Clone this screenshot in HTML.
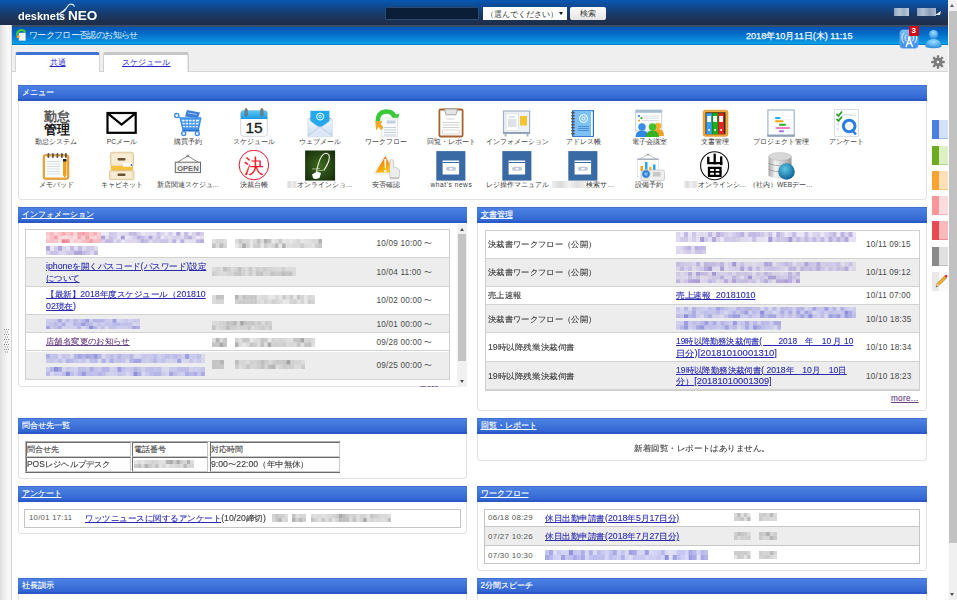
<!DOCTYPE html>
<html><head><meta charset="utf-8">
<style>
*{box-sizing:border-box;margin:0;padding:0}
html,body{width:957px;height:600px;overflow:hidden;background:#fff;font-family:"Liberation Sans",sans-serif;}
.abs{position:absolute}
#hdr{left:0;top:0;width:948px;height:25px;background:linear-gradient(#0658b2 0px,#0d4d98 5px,#173c6e 13px,#1e3152 21px,#1d2d48 25px)}
#title{left:12px;top:25px;width:936px;height:20px;background:linear-gradient(#3a4e6a 0px,#34506f 2px,#0452b2 2px,#056cc8 9px,#0a93e0 17px,#0aa2ea 18.5px,#0577bd 19px,#0577bd 20px)}
#strip{left:0;top:25px;width:12px;height:575px;background:linear-gradient(90deg,#dedede 0px,#f0f0f0 5px,#fafafa 9px,#f6f6f6 10.5px,#d6d6d6 11px,#d6d6d6 12px)}
#tabbar{left:12px;top:45px;width:936px;height:27px;background:#efefef;border-top:1px solid #fafafa}
#tabline{left:12px;top:71px;width:936px;height:1px;background:#d6d6d6}
#content{left:12px;top:72px;width:936px;height:528px;background:#fff}
#sb{left:948px;top:0;width:9px;height:600px;background:#f0f0f0;border-left:1px solid #fafafa}
#sbthumb{left:949px;top:11px;width:8px;height:532px;background:#c2c2c2}
.panel{position:absolute;border:1px solid #e2e2e2;border-top:none;border-radius:0 0 4px 4px;background:#fff}
.ph{position:absolute;left:-1px;right:-1px;top:0;height:16px;background:linear-gradient(#3e66c4 0px,#4a80e2 1.5px,#4278dc 6px,#3264d0 14px,#1d4fc2 15px,#3a64c8 16px);color:#fff;font-size:8.2px;line-height:16px;padding-left:3.5px;white-space:nowrap;-webkit-text-stroke:0.15px #fff}
.ph u{text-decoration:underline}
.lbl{position:absolute;width:80px;text-align:center;font-size:6.6px;line-height:9px;color:#3a3a3a;white-space:nowrap}
.bl{display:inline-block;width:12px;height:7px;background:linear-gradient(90deg,#eeeeee,#dadada,#f2f2f2,#e0e0e0,#f0f0f0);vertical-align:-1px;filter:blur(0.6px)}
.t{white-space:nowrap;line-height:11px;-webkit-text-stroke:0.12px}
.tn{white-space:nowrap;line-height:11px}
</style></head><body>
<div id="hdr" class="abs"></div>
<div id="title" class="abs"></div>
<div id="strip" class="abs"></div>
<svg class="abs" style="left:4px;top:329px" width="6" height="26"><rect x="0" y="0.0" width="1" height="1" fill="#8a8a8a"/><rect x="2" y="0.0" width="1" height="1" fill="#8a8a8a"/><rect x="4" y="0.0" width="1" height="1" fill="#8a8a8a"/><rect x="1" y="2.5" width="1" height="1" fill="#8a8a8a"/><rect x="3" y="2.5" width="1" height="1" fill="#8a8a8a"/><rect x="0" y="5.0" width="1" height="1" fill="#8a8a8a"/><rect x="2" y="5.0" width="1" height="1" fill="#8a8a8a"/><rect x="4" y="5.0" width="1" height="1" fill="#8a8a8a"/><rect x="1" y="7.5" width="1" height="1" fill="#8a8a8a"/><rect x="3" y="7.5" width="1" height="1" fill="#8a8a8a"/><rect x="0" y="10.0" width="1" height="1" fill="#8a8a8a"/><rect x="2" y="10.0" width="1" height="1" fill="#8a8a8a"/><rect x="4" y="10.0" width="1" height="1" fill="#8a8a8a"/><rect x="1" y="12.5" width="1" height="1" fill="#8a8a8a"/><rect x="3" y="12.5" width="1" height="1" fill="#8a8a8a"/><rect x="0" y="15.0" width="1" height="1" fill="#8a8a8a"/><rect x="2" y="15.0" width="1" height="1" fill="#8a8a8a"/><rect x="4" y="15.0" width="1" height="1" fill="#8a8a8a"/><rect x="1" y="17.5" width="1" height="1" fill="#8a8a8a"/><rect x="3" y="17.5" width="1" height="1" fill="#8a8a8a"/><rect x="0" y="20.0" width="1" height="1" fill="#8a8a8a"/><rect x="2" y="20.0" width="1" height="1" fill="#8a8a8a"/><rect x="4" y="20.0" width="1" height="1" fill="#8a8a8a"/><rect x="1" y="22.5" width="1" height="1" fill="#8a8a8a"/><rect x="3" y="22.5" width="1" height="1" fill="#8a8a8a"/></svg>
<div id="tabbar" class="abs"></div>
<div id="tabline" class="abs"></div>
<div id="content" class="abs"></div>
<div id="sb" class="abs"></div>
<div id="sbthumb" class="abs"></div>
<div class="abs" style="left:950px;top:4px;width:0;height:0;border-left:2.5px solid transparent;border-right:2.5px solid transparent;border-bottom:3px solid #606060"></div>
<div class="abs" style="left:950px;top:593px;width:0;height:0;border-left:2.5px solid transparent;border-right:2.5px solid transparent;border-top:3px solid #505050"></div>
<!-- logo -->
<div class="abs" style="left:17.5px;top:12px;color:#fff;font-weight:bold;font-size:10px;line-height:10px;white-space:nowrap;transform:scaleX(1.1);transform-origin:0 0">desknet</div>
<div class="abs" style="left:59.3px;top:12px;color:#fff;font-weight:bold;font-size:10px;line-height:10px;">s</div>
<div class="abs" style="left:67.5px;top:10.3px;color:#fff;font-weight:bold;font-size:12px;line-height:12px;transform:scaleX(1.13);transform-origin:0 0">NEO</div>
<svg class="abs" style="left:56px;top:2px" width="22" height="16" viewBox="0 0 22 16"><path d="M3.4 12.3 C5 10.5 6.5 9.6 8.3 8.6 C10.5 7 11.5 3 14 2.3 C16 1.8 17.5 2.6 18.4 4.2" fill="none" stroke="#dfe8f4" stroke-width="1.1" stroke-linecap="round"/><path d="M5.5 10.6 C7 9.8 8 9 9 7.8" fill="none" stroke="#eef3fa" stroke-width="1.4" stroke-linecap="round"/></svg>
<!-- search -->
<div class="abs" style="left:385px;top:7px;width:94px;height:12.5px;background:#0a1e38;border:1px solid #2a4a70;border-radius:2px"></div>
<div class="abs" style="left:482.5px;top:7px;width:84.5px;height:13px;background:#fff;white-space:nowrap"><span style="position:absolute;left:3px;top:1.5px;font-size:7.7px;line-height:12px;color:#333">（選んでください）</span><span style="position:absolute;left:76px;top:4.5px;width:0;height:0;border-left:2px solid transparent;border-right:2px solid transparent;border-top:3.5px solid #111"></span></div>
<div class="abs" style="left:570px;top:7px;width:36px;height:13px;background:linear-gradient(#fcfcfc,#e4e4e4);border-radius:2px;font-size:8px;line-height:13px;color:#333;text-align:center">検索</div>
<!-- user name blur -->
<div class="abs" style="left:894px;top:8px;width:15px;height:8px;background:linear-gradient(90deg,#8ea4c0,#b6c4d4,#9aaec4,#c0ccda);filter:blur(0.6px)"></div>
<div class="abs" style="left:917px;top:8px;width:19px;height:8px;background:linear-gradient(90deg,#8ea4c0,#b0c0d4,#8a9cb8,#aab8cc);filter:blur(0.6px)"></div>
<svg class="abs" style="left:935px;top:11px" width="7" height="5"><path d="M0 4 L6 0 L5 4Z" fill="#e8eef6"/></svg>
<!-- title -->
<svg class="abs" style="left:16px;top:29px" width="11" height="12" viewBox="0 0 11 12"><path d="M1 6 A4.5 4.5 0 0 1 9.5 3.5" stroke="#3fc83a" stroke-width="2" fill="none"/><rect x="3" y="4" width="6.5" height="7.5" fill="#f4f4f4" stroke="#d8d8d8" stroke-width="0.5"/><circle cx="2" cy="7.5" r="1.6" fill="#f5a623"/></svg>
<div class="abs" style="left:29px;top:29px;color:#dcefff;font-size:9px;letter-spacing:-0.65px;line-height:12px;white-space:nowrap">ワークフロー否認のお知らせ</div>
<div class="abs" style="left:746px;top:29.5px;color:#f4f8ff;font-size:9.1px;line-height:12px;white-space:nowrap;-webkit-text-stroke:0.25px #f4f8ff;letter-spacing:0px">2018年10月11日(木) 11:15</div>
<!-- antenna icon -->
<div class="abs" style="left:900px;top:30px;width:18px;height:18px;border-radius:3px;background:linear-gradient(#7cc0f8,#3d8ee8);box-shadow:0 0 0 0.5px #5aa0e8"></div>
<svg class="abs" style="left:900px;top:30px" width="18" height="18" viewBox="0 0 18 18"><path d="M6 17 L9.3 8 L12.6 17 M7.2 13.5 L11.4 13.5" stroke="#fff" stroke-width="1.4" fill="none"/><circle cx="9.3" cy="8" r="1.4" fill="#fff"/><path d="M6.3 5 A4.2 4.2 0 0 0 6.3 11 M12.3 5 A4.2 4.2 0 0 1 12.3 11 M4 3 A7 7 0 0 0 4 13 M14.6 3 A7 7 0 0 1 14.6 13" stroke="#eef7ff" stroke-width="0.9" fill="none"/></svg>
<div class="abs" style="left:908.5px;top:26px;width:10.5px;height:9.5px;background:#d10d16;border-radius:1px;color:#fff;font-size:8px;font-weight:bold;line-height:9.5px;text-align:center">3</div>
<!-- person icon -->
<svg class="abs" style="left:924px;top:28px" width="19" height="21" viewBox="0 0 19 21"><defs><radialGradient id="pg" cx="0.5" cy="0.3" r="0.7"><stop offset="0" stop-color="#9ee0ff"/><stop offset="1" stop-color="#2a8ae0"/></radialGradient></defs><circle cx="9.5" cy="6.5" r="4.6" fill="url(#pg)"/><path d="M1.5 19 C1.5 13 5 11 9.5 11 C14 11 17.5 13 17.5 19 Q9.5 21.5 1.5 19Z" fill="url(#pg)"/></svg>

<!-- tabs -->
<div class="abs" style="left:14.7px;top:51.7px;width:85.7px;height:20.5px;background:#fff;border:1px solid #d4d4d4;border-bottom:none;border-top:3.2px solid #3f72d4;border-radius:3px 3px 0 0"></div>
<div class="abs" style="left:49.5px;top:57.5px;font-size:8px;line-height:10px;color:#2828c8;text-decoration:underline;white-space:nowrap">共通</div>
<div class="abs" style="left:103px;top:51.5px;width:86px;height:20.5px;background:#fff;border:1px solid #cfcfcf;border-bottom:none;border-top:3.5px solid #c6c6c6;border-radius:3px 3px 0 0;box-shadow:inset -1px 0 0 #e8e8e8"></div>
<div class="abs" style="left:122px;top:57.5px;font-size:8px;line-height:10px;color:#2828c8;text-decoration:underline;white-space:nowrap;letter-spacing:0.1px">スケジュール</div>
<svg class="abs" style="left:930px;top:54px" width="16" height="16" viewBox="-8 -8 16 16"><g fill="#7c7c7c"><circle r="4.3"/><rect x="-1.2" y="-6.8" width="2.4" height="13.6" rx="0.6"/><rect x="-1.2" y="-6.8" width="2.4" height="13.6" rx="0.6" transform="rotate(45)"/><rect x="-1.2" y="-6.8" width="2.4" height="13.6" rx="0.6" transform="rotate(90)"/><rect x="-1.2" y="-6.8" width="2.4" height="13.6" rx="0.6" transform="rotate(135)"/></g><circle r="1.3" fill="#fff"/></svg>



<div class="panel" style="left:18px;top:85px;width:909px;height:115px"><div class="ph">メニュー</div></div>
<div class="panel" style="left:18px;top:207px;width:449px;height:180px"><div class="ph"><u>インフォメーション</u></div></div>
<div class="panel" style="left:477px;top:207px;width:450px;height:204px"><div class="ph"><u>文書管理</u></div></div>
<div class="panel" style="left:18px;top:418px;width:449px;height:61px"><div class="ph">問合せ先一覧</div></div>
<div class="panel" style="left:477px;top:418px;width:450px;height:43px"><div class="ph"><u>回覧・レポート</u></div></div>
<div class="panel" style="left:18px;top:486px;width:449px;height:48px"><div class="ph"><u>アンケート</u></div></div>
<div class="panel" style="left:477px;top:486px;width:450px;height:85px"><div class="ph"><u>ワークフロー</u></div></div>
<div class="panel" style="left:18px;top:578px;width:449px;height:30px"><div class="ph">社長訓示</div></div>
<div class="panel" style="left:477px;top:578px;width:450px;height:30px"><div class="ph">2分間スピーチ</div></div>
<!-- swatches -->
<div class="abs" style="left:932px;top:120px;width:7px;height:19px;background:#4a7ee0"></div><div class="abs" style="left:939px;top:120px;width:9px;height:19px;background:#d2e0f8;border-bottom:1px solid #a8c0e8"></div>
<div class="abs" style="left:932px;top:145.5px;width:7px;height:19px;background:#6eaa22"></div><div class="abs" style="left:939px;top:145.5px;width:9px;height:19px;background:#ddf0c4;border-bottom:1px solid #b0d890"></div>
<div class="abs" style="left:932px;top:171px;width:7px;height:19px;background:#f8a432"></div><div class="abs" style="left:939px;top:171px;width:9px;height:19px;background:#fde0b8;border-bottom:1px solid #f0c890"></div>
<div class="abs" style="left:932px;top:196px;width:7px;height:19px;background:#f8969c"></div><div class="abs" style="left:939px;top:196px;width:9px;height:19px;background:#fddcdf;border-bottom:1px solid #f4b8bc"></div>
<div class="abs" style="left:932px;top:221px;width:7px;height:19px;background:#e84a52"></div><div class="abs" style="left:939px;top:221px;width:9px;height:19px;background:#f8babd;border-bottom:1px solid #e89094"></div>
<div class="abs" style="left:932px;top:246.5px;width:7px;height:19px;background:#8a8a8a"></div><div class="abs" style="left:939px;top:246.5px;width:9px;height:19px;background:#e0e0e0;border-bottom:1px solid #c0c0c0"></div>
<div class="abs" style="left:932px;top:272px;width:7px;height:19px;background:#e8e8e8"></div><div class="abs" style="left:939px;top:272px;width:9px;height:19px;background:#fafafa"></div>
<svg class="abs" style="left:934px;top:274px" width="14" height="15" viewBox="0 0 14 15"><path d="M2 13 L3 9.5 L10.5 2 L12.5 4 L5 11.5Z" fill="#f4b030" stroke="#8a5a10" stroke-width="0.5"/><path d="M10.5 2 L11.5 1 Q12.3 0.6 13 1.3 Q13.5 2 13.3 2.3 L12.5 4Z" fill="#e02020"/><path d="M2 13 L3 9.5 L5 11.5Z" fill="#f0d8b0"/><path d="M2 13 L2.5 11.5 L3.5 12.5Z" fill="#333"/></svg>
<!--PANELS-->
<div class="abs" style="left:457px;top:224px;width:9.5px;height:163px;background:#f0f0f0"></div>
<div class="abs" style="left:458px;top:234px;width:8px;height:127px;background:#c4c4c4"></div>
<div class="abs" style="left:459.5px;top:228px;width:0;height:0;border-left:2.5px solid transparent;border-right:2.5px solid transparent;border-bottom:3px solid #505050"></div>
<div class="abs" style="left:459.5px;top:380px;width:0;height:0;border-left:2.5px solid transparent;border-right:2.5px solid transparent;border-top:3px solid #505050"></div>
<div class="abs" style="left:24.6px;top:229.2px;width:425px;height:151px;border:1px solid #cfcfcf;background:#fff"></div>
<div class="abs" style="left:25.6px;top:230.2px;width:423px;height:28.100000000000023px;background:#fff;border-bottom:1px solid #d2d2d2"></div>
<div class="abs" style="left:25.6px;top:258.3px;width:423px;height:28.399999999999977px;background:#ededed;border-bottom:1px solid #d2d2d2"></div>
<div class="abs" style="left:25.6px;top:286.7px;width:423px;height:28.30000000000001px;background:#fff;border-bottom:1px solid #d2d2d2"></div>
<div class="abs" style="left:25.6px;top:315px;width:423px;height:18.30000000000001px;background:#ededed;border-bottom:1px solid #d2d2d2"></div>
<div class="abs" style="left:25.6px;top:333.3px;width:423px;height:18.19999999999999px;background:#fff;border-bottom:1px solid #d2d2d2"></div>
<div class="abs" style="left:25.6px;top:351.5px;width:423px;height:28.80000000000001px;background:#ededed;border-bottom:1px solid #d2d2d2"></div>
<svg class="abs" style="left:46px;top:232.3px;filter:blur(0.6px)" width="55.0" height="11.0"><rect width="55.0" height="11.0" fill="#f4a8b0" fill-opacity="0.38"/><rect x="0.0" y="0.0" width="3.9" height="3.7" fill="#f4a8b0" fill-opacity="0.4"/><rect x="3.9" y="0.0" width="3.9" height="3.7" fill="#f08890" fill-opacity="0.4"/><rect x="7.9" y="0.0" width="3.9" height="3.7" fill="#f4a8b0" fill-opacity="0.2"/><rect x="11.8" y="0.0" width="3.9" height="3.7" fill="#f08890" fill-opacity="0.3"/><rect x="15.7" y="0.0" width="3.9" height="3.7" fill="#f08890" fill-opacity="0.6"/><rect x="19.6" y="0.0" width="3.9" height="3.7" fill="#f4a8b0" fill-opacity="0.5"/><rect x="23.6" y="0.0" width="3.9" height="3.7" fill="#f08890" fill-opacity="0.5"/><rect x="27.5" y="0.0" width="3.9" height="3.7" fill="#f4a8b0" fill-opacity="0.2"/><rect x="31.4" y="0.0" width="3.9" height="3.7" fill="#e86070" fill-opacity="0.4"/><rect x="35.4" y="0.0" width="3.9" height="3.7" fill="#e86070" fill-opacity="0.5"/><rect x="39.3" y="0.0" width="3.9" height="3.7" fill="#f08890" fill-opacity="0.5"/><rect x="43.2" y="0.0" width="3.9" height="3.7" fill="#e86070" fill-opacity="0.2"/><rect x="47.1" y="0.0" width="3.9" height="3.7" fill="#f08890" fill-opacity="0.5"/><rect x="51.1" y="0.0" width="3.9" height="3.7" fill="#f8c4c8" fill-opacity="0.6"/><rect x="0.0" y="3.7" width="3.9" height="3.7" fill="#f8c4c8" fill-opacity="0.4"/><rect x="3.9" y="3.7" width="3.9" height="3.7" fill="#f4a8b0" fill-opacity="0.6"/><rect x="7.9" y="3.7" width="3.9" height="3.7" fill="#e86070" fill-opacity="0.5"/><rect x="11.8" y="3.7" width="3.9" height="3.7" fill="#f8c4c8" fill-opacity="0.3"/><rect x="19.6" y="3.7" width="3.9" height="3.7" fill="#f8c4c8" fill-opacity="0.2"/><rect x="23.6" y="3.7" width="3.9" height="3.7" fill="#f8c4c8" fill-opacity="0.4"/><rect x="31.4" y="3.7" width="3.9" height="3.7" fill="#e86070" fill-opacity="0.4"/><rect x="35.4" y="3.7" width="3.9" height="3.7" fill="#f8c4c8" fill-opacity="0.5"/><rect x="39.3" y="3.7" width="3.9" height="3.7" fill="#f08890" fill-opacity="0.7"/><rect x="43.2" y="3.7" width="3.9" height="3.7" fill="#f08890" fill-opacity="0.2"/><rect x="47.1" y="3.7" width="3.9" height="3.7" fill="#f8c4c8" fill-opacity="0.3"/><rect x="51.1" y="3.7" width="3.9" height="3.7" fill="#e86070" fill-opacity="0.2"/><rect x="0.0" y="7.3" width="3.9" height="3.7" fill="#f4a8b0" fill-opacity="0.5"/><rect x="3.9" y="7.3" width="3.9" height="3.7" fill="#f4a8b0" fill-opacity="0.6"/><rect x="7.9" y="7.3" width="3.9" height="3.7" fill="#f4a8b0" fill-opacity="0.4"/><rect x="11.8" y="7.3" width="3.9" height="3.7" fill="#f8c4c8" fill-opacity="0.2"/><rect x="15.7" y="7.3" width="3.9" height="3.7" fill="#e86070" fill-opacity="0.7"/><rect x="19.6" y="7.3" width="3.9" height="3.7" fill="#e86070" fill-opacity="0.6"/><rect x="27.5" y="7.3" width="3.9" height="3.7" fill="#f8c4c8" fill-opacity="0.7"/><rect x="31.4" y="7.3" width="3.9" height="3.7" fill="#f4a8b0" fill-opacity="0.2"/><rect x="35.4" y="7.3" width="3.9" height="3.7" fill="#f08890" fill-opacity="0.4"/><rect x="39.3" y="7.3" width="3.9" height="3.7" fill="#e86070" fill-opacity="0.3"/><rect x="43.2" y="7.3" width="3.9" height="3.7" fill="#e86070" fill-opacity="0.5"/><rect x="47.1" y="7.3" width="3.9" height="3.7" fill="#f4a8b0" fill-opacity="0.6"/><rect x="51.1" y="7.3" width="3.9" height="3.7" fill="#f08890" fill-opacity="0.4"/></svg>
<svg class="abs" style="left:101px;top:232.3px;filter:blur(0.6px)" width="103.0" height="11.0"><rect width="103.0" height="11.0" fill="#c8bce4" fill-opacity="0.38"/><rect x="7.9" y="0.0" width="4.0" height="3.7" fill="#a89cd8" fill-opacity="0.4"/><rect x="11.9" y="0.0" width="4.0" height="3.7" fill="#b4a8d8" fill-opacity="0.4"/><rect x="15.8" y="0.0" width="4.0" height="3.7" fill="#c8bce4" fill-opacity="0.2"/><rect x="19.8" y="0.0" width="4.0" height="3.7" fill="#c8bce4" fill-opacity="0.2"/><rect x="23.8" y="0.0" width="4.0" height="3.7" fill="#b4a8d8" fill-opacity="0.2"/><rect x="27.7" y="0.0" width="4.0" height="3.7" fill="#b4a8d8" fill-opacity="0.7"/><rect x="31.7" y="0.0" width="4.0" height="3.7" fill="#b4a8d8" fill-opacity="0.7"/><rect x="35.7" y="0.0" width="4.0" height="3.7" fill="#c8bce4" fill-opacity="0.5"/><rect x="43.6" y="0.0" width="4.0" height="3.7" fill="#d4cce8" fill-opacity="0.2"/><rect x="47.5" y="0.0" width="4.0" height="3.7" fill="#d4cce8" fill-opacity="0.4"/><rect x="51.5" y="0.0" width="4.0" height="3.7" fill="#c8bce4" fill-opacity="0.2"/><rect x="55.5" y="0.0" width="4.0" height="3.7" fill="#9c8cd0" fill-opacity="0.4"/><rect x="59.4" y="0.0" width="4.0" height="3.7" fill="#a89cd8" fill-opacity="0.2"/><rect x="67.3" y="0.0" width="4.0" height="3.7" fill="#c8bce4" fill-opacity="0.6"/><rect x="75.3" y="0.0" width="4.0" height="3.7" fill="#9c8cd0" fill-opacity="0.7"/><rect x="83.2" y="0.0" width="4.0" height="3.7" fill="#9c8cd0" fill-opacity="0.5"/><rect x="91.1" y="0.0" width="4.0" height="3.7" fill="#c8bce4" fill-opacity="0.5"/><rect x="95.1" y="0.0" width="4.0" height="3.7" fill="#9c8cd0" fill-opacity="0.5"/><rect x="99.0" y="0.0" width="4.0" height="3.7" fill="#c8bce4" fill-opacity="0.6"/><rect x="0.0" y="3.7" width="4.0" height="3.7" fill="#8c7cc8" fill-opacity="0.6"/><rect x="4.0" y="3.7" width="4.0" height="3.7" fill="#d4cce8" fill-opacity="0.4"/><rect x="7.9" y="3.7" width="4.0" height="3.7" fill="#b4a8d8" fill-opacity="0.6"/><rect x="11.9" y="3.7" width="4.0" height="3.7" fill="#c8bce4" fill-opacity="0.6"/><rect x="19.8" y="3.7" width="4.0" height="3.7" fill="#8c7cc8" fill-opacity="0.7"/><rect x="27.7" y="3.7" width="4.0" height="3.7" fill="#c8bce4" fill-opacity="0.2"/><rect x="31.7" y="3.7" width="4.0" height="3.7" fill="#9c8cd0" fill-opacity="0.3"/><rect x="35.7" y="3.7" width="4.0" height="3.7" fill="#a89cd8" fill-opacity="0.7"/><rect x="39.6" y="3.7" width="4.0" height="3.7" fill="#8c7cc8" fill-opacity="0.4"/><rect x="43.6" y="3.7" width="4.0" height="3.7" fill="#8c7cc8" fill-opacity="0.2"/><rect x="47.5" y="3.7" width="4.0" height="3.7" fill="#8c7cc8" fill-opacity="0.6"/><rect x="51.5" y="3.7" width="4.0" height="3.7" fill="#c8bce4" fill-opacity="0.4"/><rect x="55.5" y="3.7" width="4.0" height="3.7" fill="#b4a8d8" fill-opacity="0.6"/><rect x="63.4" y="3.7" width="4.0" height="3.7" fill="#d4cce8" fill-opacity="0.6"/><rect x="67.3" y="3.7" width="4.0" height="3.7" fill="#c8bce4" fill-opacity="0.3"/><rect x="71.3" y="3.7" width="4.0" height="3.7" fill="#c8bce4" fill-opacity="0.5"/><rect x="75.3" y="3.7" width="4.0" height="3.7" fill="#8c7cc8" fill-opacity="0.2"/><rect x="79.2" y="3.7" width="4.0" height="3.7" fill="#d4cce8" fill-opacity="0.5"/><rect x="83.2" y="3.7" width="4.0" height="3.7" fill="#a89cd8" fill-opacity="0.5"/><rect x="87.2" y="3.7" width="4.0" height="3.7" fill="#8c7cc8" fill-opacity="0.5"/><rect x="91.1" y="3.7" width="4.0" height="3.7" fill="#c8bce4" fill-opacity="0.4"/><rect x="99.0" y="3.7" width="4.0" height="3.7" fill="#c8bce4" fill-opacity="0.2"/><rect x="0.0" y="7.3" width="4.0" height="3.7" fill="#a89cd8" fill-opacity="0.3"/><rect x="4.0" y="7.3" width="4.0" height="3.7" fill="#9c8cd0" fill-opacity="0.5"/><rect x="7.9" y="7.3" width="4.0" height="3.7" fill="#b4a8d8" fill-opacity="0.7"/><rect x="11.9" y="7.3" width="4.0" height="3.7" fill="#d4cce8" fill-opacity="0.5"/><rect x="15.8" y="7.3" width="4.0" height="3.7" fill="#a89cd8" fill-opacity="0.4"/><rect x="23.8" y="7.3" width="4.0" height="3.7" fill="#a89cd8" fill-opacity="0.2"/><rect x="27.7" y="7.3" width="4.0" height="3.7" fill="#d4cce8" fill-opacity="0.6"/><rect x="31.7" y="7.3" width="4.0" height="3.7" fill="#c8bce4" fill-opacity="0.3"/><rect x="35.7" y="7.3" width="4.0" height="3.7" fill="#8c7cc8" fill-opacity="0.2"/><rect x="39.6" y="7.3" width="4.0" height="3.7" fill="#8c7cc8" fill-opacity="0.5"/><rect x="43.6" y="7.3" width="4.0" height="3.7" fill="#b4a8d8" fill-opacity="0.7"/><rect x="47.5" y="7.3" width="4.0" height="3.7" fill="#c8bce4" fill-opacity="0.3"/><rect x="51.5" y="7.3" width="4.0" height="3.7" fill="#a89cd8" fill-opacity="0.4"/><rect x="55.5" y="7.3" width="4.0" height="3.7" fill="#b4a8d8" fill-opacity="0.4"/><rect x="59.4" y="7.3" width="4.0" height="3.7" fill="#a89cd8" fill-opacity="0.5"/><rect x="63.4" y="7.3" width="4.0" height="3.7" fill="#9c8cd0" fill-opacity="0.4"/><rect x="67.3" y="7.3" width="4.0" height="3.7" fill="#d4cce8" fill-opacity="0.5"/><rect x="71.3" y="7.3" width="4.0" height="3.7" fill="#a89cd8" fill-opacity="0.7"/><rect x="79.2" y="7.3" width="4.0" height="3.7" fill="#a89cd8" fill-opacity="0.7"/><rect x="83.2" y="7.3" width="4.0" height="3.7" fill="#d4cce8" fill-opacity="0.2"/><rect x="87.2" y="7.3" width="4.0" height="3.7" fill="#d4cce8" fill-opacity="0.3"/><rect x="91.1" y="7.3" width="4.0" height="3.7" fill="#d4cce8" fill-opacity="0.2"/><rect x="95.1" y="7.3" width="4.0" height="3.7" fill="#b4a8d8" fill-opacity="0.7"/><rect x="99.0" y="7.3" width="4.0" height="3.7" fill="#8c7cc8" fill-opacity="0.5"/></svg>
<svg class="abs" style="left:46px;top:245.5px;filter:blur(0.6px)" width="52.0" height="9.5"><rect width="52.0" height="9.5" fill="#c8bce4" fill-opacity="0.38"/><rect x="0.0" y="0.0" width="4.0" height="4.8" fill="#9c8cd0" fill-opacity="0.7"/><rect x="8.0" y="0.0" width="4.0" height="4.8" fill="#b4a8d8" fill-opacity="0.4"/><rect x="12.0" y="0.0" width="4.0" height="4.8" fill="#8c7cc8" fill-opacity="0.6"/><rect x="16.0" y="0.0" width="4.0" height="4.8" fill="#d4cce8" fill-opacity="0.7"/><rect x="20.0" y="0.0" width="4.0" height="4.8" fill="#d4cce8" fill-opacity="0.3"/><rect x="24.0" y="0.0" width="4.0" height="4.8" fill="#8c7cc8" fill-opacity="0.4"/><rect x="28.0" y="0.0" width="4.0" height="4.8" fill="#d4cce8" fill-opacity="0.4"/><rect x="32.0" y="0.0" width="4.0" height="4.8" fill="#9c8cd0" fill-opacity="0.5"/><rect x="36.0" y="0.0" width="4.0" height="4.8" fill="#b4a8d8" fill-opacity="0.2"/><rect x="40.0" y="0.0" width="4.0" height="4.8" fill="#c8bce4" fill-opacity="0.7"/><rect x="44.0" y="0.0" width="4.0" height="4.8" fill="#9c8cd0" fill-opacity="0.3"/><rect x="48.0" y="0.0" width="4.0" height="4.8" fill="#c8bce4" fill-opacity="0.3"/><rect x="0.0" y="4.8" width="4.0" height="4.8" fill="#d4cce8" fill-opacity="0.7"/><rect x="4.0" y="4.8" width="4.0" height="4.8" fill="#9c8cd0" fill-opacity="0.4"/><rect x="8.0" y="4.8" width="4.0" height="4.8" fill="#a89cd8" fill-opacity="0.5"/><rect x="12.0" y="4.8" width="4.0" height="4.8" fill="#b4a8d8" fill-opacity="0.3"/><rect x="16.0" y="4.8" width="4.0" height="4.8" fill="#c8bce4" fill-opacity="0.4"/><rect x="20.0" y="4.8" width="4.0" height="4.8" fill="#b4a8d8" fill-opacity="0.5"/><rect x="24.0" y="4.8" width="4.0" height="4.8" fill="#b4a8d8" fill-opacity="0.5"/><rect x="28.0" y="4.8" width="4.0" height="4.8" fill="#9c8cd0" fill-opacity="0.7"/><rect x="32.0" y="4.8" width="4.0" height="4.8" fill="#9c8cd0" fill-opacity="0.7"/><rect x="36.0" y="4.8" width="4.0" height="4.8" fill="#9c8cd0" fill-opacity="0.5"/><rect x="40.0" y="4.8" width="4.0" height="4.8" fill="#8c7cc8" fill-opacity="0.3"/><rect x="44.0" y="4.8" width="4.0" height="4.8" fill="#c8bce4" fill-opacity="0.3"/><rect x="48.0" y="4.8" width="4.0" height="4.8" fill="#9c8cd0" fill-opacity="0.5"/></svg>
<div class="abs t" style="left:46px;top:260.5px;font-size:8.2px;color:#2b2bb0;text-decoration:underline;transform:scaleX(1.068);transform-origin:0 0;">iphoneを開くパスコード(パスワード)設定</div>
<div class="abs t" style="left:46px;top:272.5px;font-size:8.2px;color:#2b2bb0;text-decoration:underline;transform:scaleX(1.05);transform-origin:0 0;">について</div>
<div class="abs t" style="left:46px;top:289px;font-size:8.2px;color:#2b2bb0;text-decoration:underline;transform:scaleX(1.068);transform-origin:0 0;">【最新】2018年度スケジュール（201810</div>
<div class="abs t" style="left:46px;top:300.5px;font-size:8.2px;color:#2b2bb0;text-decoration:underline;transform:scaleX(1.08);transform-origin:0 0;">02現在)</div>
<svg class="abs" style="left:46px;top:318.8px;filter:blur(0.6px)" width="94.0" height="10.5"><rect width="94.0" height="10.5" fill="#b4b4ec" fill-opacity="0.38"/><rect x="0.0" y="0.0" width="3.9" height="3.5" fill="#b4b4ec" fill-opacity="0.3"/><rect x="3.9" y="0.0" width="3.9" height="3.5" fill="#b4b4ec" fill-opacity="0.3"/><rect x="7.8" y="0.0" width="3.9" height="3.5" fill="#8484d8" fill-opacity="0.2"/><rect x="11.8" y="0.0" width="3.9" height="3.5" fill="#7070d0" fill-opacity="0.5"/><rect x="15.7" y="0.0" width="3.9" height="3.5" fill="#c4c4f0" fill-opacity="0.3"/><rect x="19.6" y="0.0" width="3.9" height="3.5" fill="#a8a8e8" fill-opacity="0.6"/><rect x="23.5" y="0.0" width="3.9" height="3.5" fill="#c4c4f0" fill-opacity="0.5"/><rect x="27.4" y="0.0" width="3.9" height="3.5" fill="#7070d0" fill-opacity="0.3"/><rect x="31.3" y="0.0" width="3.9" height="3.5" fill="#b4b4ec" fill-opacity="0.4"/><rect x="35.2" y="0.0" width="3.9" height="3.5" fill="#a8a8e8" fill-opacity="0.6"/><rect x="39.2" y="0.0" width="3.9" height="3.5" fill="#8484d8" fill-opacity="0.7"/><rect x="43.1" y="0.0" width="3.9" height="3.5" fill="#9c9ce4" fill-opacity="0.2"/><rect x="47.0" y="0.0" width="3.9" height="3.5" fill="#8484d8" fill-opacity="0.4"/><rect x="50.9" y="0.0" width="3.9" height="3.5" fill="#a8a8e8" fill-opacity="0.7"/><rect x="54.8" y="0.0" width="3.9" height="3.5" fill="#a8a8e8" fill-opacity="0.7"/><rect x="58.8" y="0.0" width="3.9" height="3.5" fill="#a8a8e8" fill-opacity="0.3"/><rect x="62.7" y="0.0" width="3.9" height="3.5" fill="#b4b4ec" fill-opacity="0.3"/><rect x="66.6" y="0.0" width="3.9" height="3.5" fill="#8484d8" fill-opacity="0.7"/><rect x="74.4" y="0.0" width="3.9" height="3.5" fill="#b4b4ec" fill-opacity="0.2"/><rect x="78.3" y="0.0" width="3.9" height="3.5" fill="#b4b4ec" fill-opacity="0.4"/><rect x="82.2" y="0.0" width="3.9" height="3.5" fill="#c4c4f0" fill-opacity="0.2"/><rect x="86.2" y="0.0" width="3.9" height="3.5" fill="#a8a8e8" fill-opacity="0.3"/><rect x="90.1" y="0.0" width="3.9" height="3.5" fill="#9c9ce4" fill-opacity="0.2"/><rect x="0.0" y="3.5" width="3.9" height="3.5" fill="#b4b4ec" fill-opacity="0.4"/><rect x="3.9" y="3.5" width="3.9" height="3.5" fill="#9c9ce4" fill-opacity="0.3"/><rect x="7.8" y="3.5" width="3.9" height="3.5" fill="#9c9ce4" fill-opacity="0.5"/><rect x="11.8" y="3.5" width="3.9" height="3.5" fill="#b4b4ec" fill-opacity="0.5"/><rect x="15.7" y="3.5" width="3.9" height="3.5" fill="#7070d0" fill-opacity="0.4"/><rect x="19.6" y="3.5" width="3.9" height="3.5" fill="#c4c4f0" fill-opacity="0.2"/><rect x="23.5" y="3.5" width="3.9" height="3.5" fill="#a8a8e8" fill-opacity="0.2"/><rect x="27.4" y="3.5" width="3.9" height="3.5" fill="#a8a8e8" fill-opacity="0.7"/><rect x="31.3" y="3.5" width="3.9" height="3.5" fill="#a8a8e8" fill-opacity="0.6"/><rect x="35.2" y="3.5" width="3.9" height="3.5" fill="#7070d0" fill-opacity="0.6"/><rect x="39.2" y="3.5" width="3.9" height="3.5" fill="#9c9ce4" fill-opacity="0.6"/><rect x="43.1" y="3.5" width="3.9" height="3.5" fill="#a8a8e8" fill-opacity="0.6"/><rect x="47.0" y="3.5" width="3.9" height="3.5" fill="#b4b4ec" fill-opacity="0.2"/><rect x="50.9" y="3.5" width="3.9" height="3.5" fill="#a8a8e8" fill-opacity="0.4"/><rect x="54.8" y="3.5" width="3.9" height="3.5" fill="#c4c4f0" fill-opacity="0.5"/><rect x="58.8" y="3.5" width="3.9" height="3.5" fill="#a8a8e8" fill-opacity="0.5"/><rect x="62.7" y="3.5" width="3.9" height="3.5" fill="#8484d8" fill-opacity="0.2"/><rect x="66.6" y="3.5" width="3.9" height="3.5" fill="#a8a8e8" fill-opacity="0.7"/><rect x="70.5" y="3.5" width="3.9" height="3.5" fill="#9c9ce4" fill-opacity="0.5"/><rect x="74.4" y="3.5" width="3.9" height="3.5" fill="#a8a8e8" fill-opacity="0.4"/><rect x="78.3" y="3.5" width="3.9" height="3.5" fill="#8484d8" fill-opacity="0.3"/><rect x="82.2" y="3.5" width="3.9" height="3.5" fill="#b4b4ec" fill-opacity="0.6"/><rect x="90.1" y="3.5" width="3.9" height="3.5" fill="#c4c4f0" fill-opacity="0.2"/><rect x="0.0" y="7.0" width="3.9" height="3.5" fill="#8484d8" fill-opacity="0.6"/><rect x="3.9" y="7.0" width="3.9" height="3.5" fill="#a8a8e8" fill-opacity="0.3"/><rect x="7.8" y="7.0" width="3.9" height="3.5" fill="#8484d8" fill-opacity="0.3"/><rect x="11.8" y="7.0" width="3.9" height="3.5" fill="#8484d8" fill-opacity="0.5"/><rect x="15.7" y="7.0" width="3.9" height="3.5" fill="#c4c4f0" fill-opacity="0.2"/><rect x="19.6" y="7.0" width="3.9" height="3.5" fill="#a8a8e8" fill-opacity="0.2"/><rect x="23.5" y="7.0" width="3.9" height="3.5" fill="#c4c4f0" fill-opacity="0.3"/><rect x="27.4" y="7.0" width="3.9" height="3.5" fill="#c4c4f0" fill-opacity="0.4"/><rect x="31.3" y="7.0" width="3.9" height="3.5" fill="#7070d0" fill-opacity="0.3"/><rect x="39.2" y="7.0" width="3.9" height="3.5" fill="#9c9ce4" fill-opacity="0.3"/><rect x="43.1" y="7.0" width="3.9" height="3.5" fill="#7070d0" fill-opacity="0.7"/><rect x="47.0" y="7.0" width="3.9" height="3.5" fill="#8484d8" fill-opacity="0.4"/><rect x="50.9" y="7.0" width="3.9" height="3.5" fill="#b4b4ec" fill-opacity="0.2"/><rect x="54.8" y="7.0" width="3.9" height="3.5" fill="#a8a8e8" fill-opacity="0.5"/><rect x="62.7" y="7.0" width="3.9" height="3.5" fill="#a8a8e8" fill-opacity="0.5"/><rect x="66.6" y="7.0" width="3.9" height="3.5" fill="#a8a8e8" fill-opacity="0.4"/><rect x="70.5" y="7.0" width="3.9" height="3.5" fill="#c4c4f0" fill-opacity="0.4"/><rect x="74.4" y="7.0" width="3.9" height="3.5" fill="#c4c4f0" fill-opacity="0.6"/><rect x="78.3" y="7.0" width="3.9" height="3.5" fill="#a8a8e8" fill-opacity="0.2"/><rect x="82.2" y="7.0" width="3.9" height="3.5" fill="#8484d8" fill-opacity="0.2"/><rect x="86.2" y="7.0" width="3.9" height="3.5" fill="#8484d8" fill-opacity="0.6"/><rect x="90.1" y="7.0" width="3.9" height="3.5" fill="#9c9ce4" fill-opacity="0.7"/></svg>
<div class="abs t" style="left:46px;top:335.5px;font-size:8.2px;color:#6a3c80;text-decoration:underline;transform:scaleX(1.047);transform-origin:0 0;">店舗名変更のお知らせ</div>
<svg class="abs" style="left:46px;top:353.5px;filter:blur(0.6px)" width="159.0" height="9.5"><rect width="159.0" height="9.5" fill="#b4b4ec" fill-opacity="0.38"/><rect x="0.0" y="0.0" width="4.0" height="4.8" fill="#9c9ce4" fill-opacity="0.7"/><rect x="4.0" y="0.0" width="4.0" height="4.8" fill="#8484d8" fill-opacity="0.2"/><rect x="8.0" y="0.0" width="4.0" height="4.8" fill="#7070d0" fill-opacity="0.2"/><rect x="15.9" y="0.0" width="4.0" height="4.8" fill="#9c9ce4" fill-opacity="0.3"/><rect x="19.9" y="0.0" width="4.0" height="4.8" fill="#a8a8e8" fill-opacity="0.3"/><rect x="27.8" y="0.0" width="4.0" height="4.8" fill="#8484d8" fill-opacity="0.4"/><rect x="31.8" y="0.0" width="4.0" height="4.8" fill="#8484d8" fill-opacity="0.6"/><rect x="35.8" y="0.0" width="4.0" height="4.8" fill="#9c9ce4" fill-opacity="0.6"/><rect x="39.8" y="0.0" width="4.0" height="4.8" fill="#7070d0" fill-opacity="0.5"/><rect x="43.7" y="0.0" width="4.0" height="4.8" fill="#9c9ce4" fill-opacity="0.7"/><rect x="47.7" y="0.0" width="4.0" height="4.8" fill="#7070d0" fill-opacity="0.6"/><rect x="51.7" y="0.0" width="4.0" height="4.8" fill="#8484d8" fill-opacity="0.4"/><rect x="59.6" y="0.0" width="4.0" height="4.8" fill="#b4b4ec" fill-opacity="0.4"/><rect x="63.6" y="0.0" width="4.0" height="4.8" fill="#8484d8" fill-opacity="0.3"/><rect x="67.6" y="0.0" width="4.0" height="4.8" fill="#a8a8e8" fill-opacity="0.3"/><rect x="71.5" y="0.0" width="4.0" height="4.8" fill="#8484d8" fill-opacity="0.4"/><rect x="75.5" y="0.0" width="4.0" height="4.8" fill="#9c9ce4" fill-opacity="0.3"/><rect x="79.5" y="0.0" width="4.0" height="4.8" fill="#b4b4ec" fill-opacity="0.5"/><rect x="83.5" y="0.0" width="4.0" height="4.8" fill="#7070d0" fill-opacity="0.3"/><rect x="95.4" y="0.0" width="4.0" height="4.8" fill="#b4b4ec" fill-opacity="0.5"/><rect x="99.4" y="0.0" width="4.0" height="4.8" fill="#b4b4ec" fill-opacity="0.4"/><rect x="103.4" y="0.0" width="4.0" height="4.8" fill="#b4b4ec" fill-opacity="0.4"/><rect x="107.3" y="0.0" width="4.0" height="4.8" fill="#b4b4ec" fill-opacity="0.7"/><rect x="111.3" y="0.0" width="4.0" height="4.8" fill="#c4c4f0" fill-opacity="0.4"/><rect x="115.3" y="0.0" width="4.0" height="4.8" fill="#b4b4ec" fill-opacity="0.4"/><rect x="119.2" y="0.0" width="4.0" height="4.8" fill="#9c9ce4" fill-opacity="0.4"/><rect x="123.2" y="0.0" width="4.0" height="4.8" fill="#8484d8" fill-opacity="0.2"/><rect x="127.2" y="0.0" width="4.0" height="4.8" fill="#a8a8e8" fill-opacity="0.6"/><rect x="131.2" y="0.0" width="4.0" height="4.8" fill="#9c9ce4" fill-opacity="0.3"/><rect x="135.2" y="0.0" width="4.0" height="4.8" fill="#c4c4f0" fill-opacity="0.5"/><rect x="139.1" y="0.0" width="4.0" height="4.8" fill="#8484d8" fill-opacity="0.7"/><rect x="143.1" y="0.0" width="4.0" height="4.8" fill="#9c9ce4" fill-opacity="0.2"/><rect x="147.1" y="0.0" width="4.0" height="4.8" fill="#c4c4f0" fill-opacity="0.7"/><rect x="151.1" y="0.0" width="4.0" height="4.8" fill="#9c9ce4" fill-opacity="0.4"/><rect x="0.0" y="4.8" width="4.0" height="4.8" fill="#c4c4f0" fill-opacity="0.7"/><rect x="4.0" y="4.8" width="4.0" height="4.8" fill="#9c9ce4" fill-opacity="0.3"/><rect x="8.0" y="4.8" width="4.0" height="4.8" fill="#a8a8e8" fill-opacity="0.2"/><rect x="11.9" y="4.8" width="4.0" height="4.8" fill="#a8a8e8" fill-opacity="0.5"/><rect x="15.9" y="4.8" width="4.0" height="4.8" fill="#c4c4f0" fill-opacity="0.2"/><rect x="19.9" y="4.8" width="4.0" height="4.8" fill="#9c9ce4" fill-opacity="0.6"/><rect x="23.9" y="4.8" width="4.0" height="4.8" fill="#9c9ce4" fill-opacity="0.5"/><rect x="27.8" y="4.8" width="4.0" height="4.8" fill="#b4b4ec" fill-opacity="0.5"/><rect x="31.8" y="4.8" width="4.0" height="4.8" fill="#c4c4f0" fill-opacity="0.6"/><rect x="35.8" y="4.8" width="4.0" height="4.8" fill="#9c9ce4" fill-opacity="0.3"/><rect x="43.7" y="4.8" width="4.0" height="4.8" fill="#8484d8" fill-opacity="0.3"/><rect x="47.7" y="4.8" width="4.0" height="4.8" fill="#9c9ce4" fill-opacity="0.5"/><rect x="55.6" y="4.8" width="4.0" height="4.8" fill="#8484d8" fill-opacity="0.5"/><rect x="59.6" y="4.8" width="4.0" height="4.8" fill="#c4c4f0" fill-opacity="0.5"/><rect x="63.6" y="4.8" width="4.0" height="4.8" fill="#9c9ce4" fill-opacity="0.7"/><rect x="67.6" y="4.8" width="4.0" height="4.8" fill="#8484d8" fill-opacity="0.2"/><rect x="71.5" y="4.8" width="4.0" height="4.8" fill="#a8a8e8" fill-opacity="0.5"/><rect x="75.5" y="4.8" width="4.0" height="4.8" fill="#b4b4ec" fill-opacity="0.6"/><rect x="83.5" y="4.8" width="4.0" height="4.8" fill="#9c9ce4" fill-opacity="0.6"/><rect x="87.5" y="4.8" width="4.0" height="4.8" fill="#8484d8" fill-opacity="0.6"/><rect x="91.4" y="4.8" width="4.0" height="4.8" fill="#8484d8" fill-opacity="0.6"/><rect x="95.4" y="4.8" width="4.0" height="4.8" fill="#b4b4ec" fill-opacity="0.4"/><rect x="99.4" y="4.8" width="4.0" height="4.8" fill="#b4b4ec" fill-opacity="0.3"/><rect x="103.4" y="4.8" width="4.0" height="4.8" fill="#8484d8" fill-opacity="0.2"/><rect x="107.3" y="4.8" width="4.0" height="4.8" fill="#7070d0" fill-opacity="0.3"/><rect x="111.3" y="4.8" width="4.0" height="4.8" fill="#c4c4f0" fill-opacity="0.7"/><rect x="115.3" y="4.8" width="4.0" height="4.8" fill="#7070d0" fill-opacity="0.2"/><rect x="119.2" y="4.8" width="4.0" height="4.8" fill="#b4b4ec" fill-opacity="0.2"/><rect x="123.2" y="4.8" width="4.0" height="4.8" fill="#c4c4f0" fill-opacity="0.2"/><rect x="127.2" y="4.8" width="4.0" height="4.8" fill="#c4c4f0" fill-opacity="0.4"/><rect x="131.2" y="4.8" width="4.0" height="4.8" fill="#8484d8" fill-opacity="0.6"/><rect x="143.1" y="4.8" width="4.0" height="4.8" fill="#b4b4ec" fill-opacity="0.5"/><rect x="147.1" y="4.8" width="4.0" height="4.8" fill="#c4c4f0" fill-opacity="0.2"/><rect x="151.1" y="4.8" width="4.0" height="4.8" fill="#c4c4f0" fill-opacity="0.7"/></svg>
<svg class="abs" style="left:46px;top:366.5px;filter:blur(0.6px)" width="159.0" height="9.5"><rect width="159.0" height="9.5" fill="#b4b4ec" fill-opacity="0.38"/><rect x="0.0" y="0.0" width="4.0" height="4.8" fill="#9c9ce4" fill-opacity="0.2"/><rect x="4.0" y="0.0" width="4.0" height="4.8" fill="#8484d8" fill-opacity="0.4"/><rect x="8.0" y="0.0" width="4.0" height="4.8" fill="#7070d0" fill-opacity="0.7"/><rect x="11.9" y="0.0" width="4.0" height="4.8" fill="#8484d8" fill-opacity="0.6"/><rect x="15.9" y="0.0" width="4.0" height="4.8" fill="#c4c4f0" fill-opacity="0.2"/><rect x="19.9" y="0.0" width="4.0" height="4.8" fill="#b4b4ec" fill-opacity="0.4"/><rect x="23.9" y="0.0" width="4.0" height="4.8" fill="#b4b4ec" fill-opacity="0.3"/><rect x="27.8" y="0.0" width="4.0" height="4.8" fill="#c4c4f0" fill-opacity="0.2"/><rect x="31.8" y="0.0" width="4.0" height="4.8" fill="#a8a8e8" fill-opacity="0.6"/><rect x="35.8" y="0.0" width="4.0" height="4.8" fill="#9c9ce4" fill-opacity="0.4"/><rect x="39.8" y="0.0" width="4.0" height="4.8" fill="#9c9ce4" fill-opacity="0.3"/><rect x="43.7" y="0.0" width="4.0" height="4.8" fill="#7070d0" fill-opacity="0.4"/><rect x="47.7" y="0.0" width="4.0" height="4.8" fill="#7070d0" fill-opacity="0.2"/><rect x="51.7" y="0.0" width="4.0" height="4.8" fill="#a8a8e8" fill-opacity="0.3"/><rect x="55.6" y="0.0" width="4.0" height="4.8" fill="#9c9ce4" fill-opacity="0.6"/><rect x="59.6" y="0.0" width="4.0" height="4.8" fill="#a8a8e8" fill-opacity="0.7"/><rect x="63.6" y="0.0" width="4.0" height="4.8" fill="#b4b4ec" fill-opacity="0.2"/><rect x="67.6" y="0.0" width="4.0" height="4.8" fill="#c4c4f0" fill-opacity="0.7"/><rect x="71.5" y="0.0" width="4.0" height="4.8" fill="#8484d8" fill-opacity="0.7"/><rect x="75.5" y="0.0" width="4.0" height="4.8" fill="#b4b4ec" fill-opacity="0.7"/><rect x="79.5" y="0.0" width="4.0" height="4.8" fill="#a8a8e8" fill-opacity="0.3"/><rect x="83.5" y="0.0" width="4.0" height="4.8" fill="#b4b4ec" fill-opacity="0.5"/><rect x="87.5" y="0.0" width="4.0" height="4.8" fill="#8484d8" fill-opacity="0.4"/><rect x="91.4" y="0.0" width="4.0" height="4.8" fill="#7070d0" fill-opacity="0.2"/><rect x="95.4" y="0.0" width="4.0" height="4.8" fill="#b4b4ec" fill-opacity="0.3"/><rect x="99.4" y="0.0" width="4.0" height="4.8" fill="#9c9ce4" fill-opacity="0.4"/><rect x="103.4" y="0.0" width="4.0" height="4.8" fill="#b4b4ec" fill-opacity="0.7"/><rect x="107.3" y="0.0" width="4.0" height="4.8" fill="#9c9ce4" fill-opacity="0.3"/><rect x="111.3" y="0.0" width="4.0" height="4.8" fill="#9c9ce4" fill-opacity="0.4"/><rect x="123.2" y="0.0" width="4.0" height="4.8" fill="#b4b4ec" fill-opacity="0.4"/><rect x="127.2" y="0.0" width="4.0" height="4.8" fill="#a8a8e8" fill-opacity="0.3"/><rect x="131.2" y="0.0" width="4.0" height="4.8" fill="#a8a8e8" fill-opacity="0.6"/><rect x="135.2" y="0.0" width="4.0" height="4.8" fill="#8484d8" fill-opacity="0.3"/><rect x="139.1" y="0.0" width="4.0" height="4.8" fill="#8484d8" fill-opacity="0.3"/><rect x="143.1" y="0.0" width="4.0" height="4.8" fill="#c4c4f0" fill-opacity="0.3"/><rect x="147.1" y="0.0" width="4.0" height="4.8" fill="#b4b4ec" fill-opacity="0.3"/><rect x="151.1" y="0.0" width="4.0" height="4.8" fill="#b4b4ec" fill-opacity="0.3"/><rect x="155.0" y="0.0" width="4.0" height="4.8" fill="#b4b4ec" fill-opacity="0.5"/><rect x="0.0" y="4.8" width="4.0" height="4.8" fill="#9c9ce4" fill-opacity="0.5"/><rect x="8.0" y="4.8" width="4.0" height="4.8" fill="#c4c4f0" fill-opacity="0.7"/><rect x="11.9" y="4.8" width="4.0" height="4.8" fill="#c4c4f0" fill-opacity="0.7"/><rect x="15.9" y="4.8" width="4.0" height="4.8" fill="#8484d8" fill-opacity="0.3"/><rect x="19.9" y="4.8" width="4.0" height="4.8" fill="#7070d0" fill-opacity="0.7"/><rect x="23.9" y="4.8" width="4.0" height="4.8" fill="#9c9ce4" fill-opacity="0.4"/><rect x="27.8" y="4.8" width="4.0" height="4.8" fill="#c4c4f0" fill-opacity="0.5"/><rect x="31.8" y="4.8" width="4.0" height="4.8" fill="#a8a8e8" fill-opacity="0.7"/><rect x="35.8" y="4.8" width="4.0" height="4.8" fill="#7070d0" fill-opacity="0.6"/><rect x="39.8" y="4.8" width="4.0" height="4.8" fill="#9c9ce4" fill-opacity="0.4"/><rect x="43.7" y="4.8" width="4.0" height="4.8" fill="#b4b4ec" fill-opacity="0.7"/><rect x="47.7" y="4.8" width="4.0" height="4.8" fill="#a8a8e8" fill-opacity="0.5"/><rect x="51.7" y="4.8" width="4.0" height="4.8" fill="#9c9ce4" fill-opacity="0.6"/><rect x="55.6" y="4.8" width="4.0" height="4.8" fill="#8484d8" fill-opacity="0.3"/><rect x="59.6" y="4.8" width="4.0" height="4.8" fill="#b4b4ec" fill-opacity="0.2"/><rect x="63.6" y="4.8" width="4.0" height="4.8" fill="#c4c4f0" fill-opacity="0.2"/><rect x="67.6" y="4.8" width="4.0" height="4.8" fill="#c4c4f0" fill-opacity="0.5"/><rect x="71.5" y="4.8" width="4.0" height="4.8" fill="#7070d0" fill-opacity="0.2"/><rect x="75.5" y="4.8" width="4.0" height="4.8" fill="#a8a8e8" fill-opacity="0.3"/><rect x="83.5" y="4.8" width="4.0" height="4.8" fill="#c4c4f0" fill-opacity="0.7"/><rect x="87.5" y="4.8" width="4.0" height="4.8" fill="#7070d0" fill-opacity="0.7"/><rect x="91.4" y="4.8" width="4.0" height="4.8" fill="#9c9ce4" fill-opacity="0.7"/><rect x="99.4" y="4.8" width="4.0" height="4.8" fill="#b4b4ec" fill-opacity="0.4"/><rect x="103.4" y="4.8" width="4.0" height="4.8" fill="#9c9ce4" fill-opacity="0.4"/><rect x="107.3" y="4.8" width="4.0" height="4.8" fill="#9c9ce4" fill-opacity="0.6"/><rect x="111.3" y="4.8" width="4.0" height="4.8" fill="#8484d8" fill-opacity="0.4"/><rect x="115.3" y="4.8" width="4.0" height="4.8" fill="#9c9ce4" fill-opacity="0.2"/><rect x="119.2" y="4.8" width="4.0" height="4.8" fill="#c4c4f0" fill-opacity="0.2"/><rect x="123.2" y="4.8" width="4.0" height="4.8" fill="#8484d8" fill-opacity="0.6"/><rect x="127.2" y="4.8" width="4.0" height="4.8" fill="#8484d8" fill-opacity="0.3"/><rect x="131.2" y="4.8" width="4.0" height="4.8" fill="#9c9ce4" fill-opacity="0.2"/><rect x="135.2" y="4.8" width="4.0" height="4.8" fill="#b4b4ec" fill-opacity="0.3"/><rect x="139.1" y="4.8" width="4.0" height="4.8" fill="#9c9ce4" fill-opacity="0.7"/><rect x="143.1" y="4.8" width="4.0" height="4.8" fill="#9c9ce4" fill-opacity="0.5"/><rect x="147.1" y="4.8" width="4.0" height="4.8" fill="#9c9ce4" fill-opacity="0.7"/><rect x="151.1" y="4.8" width="4.0" height="4.8" fill="#b4b4ec" fill-opacity="0.5"/><rect x="155.0" y="4.8" width="4.0" height="4.8" fill="#7070d0" fill-opacity="0.4"/></svg>
<svg class="abs" style="left:212px;top:239px;filter:blur(0.6px)" width="15.0" height="9.0"><rect width="15.0" height="9.0" fill="#c0c0c0" fill-opacity="0.38"/><rect x="0.0" y="0.0" width="3.8" height="4.5" fill="#d0d0d0" fill-opacity="0.3"/><rect x="3.8" y="0.0" width="3.8" height="4.5" fill="#d0d0d0" fill-opacity="0.7"/><rect x="7.5" y="0.0" width="3.8" height="4.5" fill="#909090" fill-opacity="0.2"/><rect x="11.2" y="0.0" width="3.8" height="4.5" fill="#c0c0c0" fill-opacity="0.2"/><rect x="0.0" y="4.5" width="3.8" height="4.5" fill="#a8a8a8" fill-opacity="0.6"/><rect x="3.8" y="4.5" width="3.8" height="4.5" fill="#d0d0d0" fill-opacity="0.5"/><rect x="7.5" y="4.5" width="3.8" height="4.5" fill="#909090" fill-opacity="0.5"/><rect x="11.2" y="4.5" width="3.8" height="4.5" fill="#c0c0c0" fill-opacity="0.4"/></svg>
<svg class="abs" style="left:235px;top:239px;filter:blur(0.6px)" width="87.0" height="9.0"><rect width="87.0" height="9.0" fill="#c0c0c0" fill-opacity="0.38"/><rect x="0.0" y="0.0" width="3.6" height="4.5" fill="#d0d0d0" fill-opacity="0.5"/><rect x="3.6" y="0.0" width="3.6" height="4.5" fill="#a8a8a8" fill-opacity="0.5"/><rect x="7.2" y="0.0" width="3.6" height="4.5" fill="#c0c0c0" fill-opacity="0.4"/><rect x="10.9" y="0.0" width="3.6" height="4.5" fill="#d0d0d0" fill-opacity="0.7"/><rect x="18.1" y="0.0" width="3.6" height="4.5" fill="#a8a8a8" fill-opacity="0.2"/><rect x="21.8" y="0.0" width="3.6" height="4.5" fill="#a8a8a8" fill-opacity="0.6"/><rect x="25.4" y="0.0" width="3.6" height="4.5" fill="#a8a8a8" fill-opacity="0.2"/><rect x="29.0" y="0.0" width="3.6" height="4.5" fill="#909090" fill-opacity="0.6"/><rect x="32.6" y="0.0" width="3.6" height="4.5" fill="#a8a8a8" fill-opacity="0.6"/><rect x="39.9" y="0.0" width="3.6" height="4.5" fill="#c0c0c0" fill-opacity="0.2"/><rect x="43.5" y="0.0" width="3.6" height="4.5" fill="#b8b8b8" fill-opacity="0.6"/><rect x="50.8" y="0.0" width="3.6" height="4.5" fill="#d0d0d0" fill-opacity="0.3"/><rect x="58.0" y="0.0" width="3.6" height="4.5" fill="#c0c0c0" fill-opacity="0.2"/><rect x="61.6" y="0.0" width="3.6" height="4.5" fill="#909090" fill-opacity="0.2"/><rect x="68.9" y="0.0" width="3.6" height="4.5" fill="#d0d0d0" fill-opacity="0.2"/><rect x="72.5" y="0.0" width="3.6" height="4.5" fill="#d0d0d0" fill-opacity="0.3"/><rect x="76.1" y="0.0" width="3.6" height="4.5" fill="#b8b8b8" fill-opacity="0.3"/><rect x="79.8" y="0.0" width="3.6" height="4.5" fill="#c0c0c0" fill-opacity="0.3"/><rect x="83.4" y="0.0" width="3.6" height="4.5" fill="#909090" fill-opacity="0.6"/><rect x="3.6" y="4.5" width="3.6" height="4.5" fill="#909090" fill-opacity="0.2"/><rect x="7.2" y="4.5" width="3.6" height="4.5" fill="#909090" fill-opacity="0.7"/><rect x="10.9" y="4.5" width="3.6" height="4.5" fill="#b8b8b8" fill-opacity="0.5"/><rect x="18.1" y="4.5" width="3.6" height="4.5" fill="#b8b8b8" fill-opacity="0.5"/><rect x="21.8" y="4.5" width="3.6" height="4.5" fill="#909090" fill-opacity="0.3"/><rect x="29.0" y="4.5" width="3.6" height="4.5" fill="#909090" fill-opacity="0.3"/><rect x="32.6" y="4.5" width="3.6" height="4.5" fill="#c0c0c0" fill-opacity="0.3"/><rect x="36.2" y="4.5" width="3.6" height="4.5" fill="#a8a8a8" fill-opacity="0.3"/><rect x="39.9" y="4.5" width="3.6" height="4.5" fill="#909090" fill-opacity="0.5"/><rect x="47.1" y="4.5" width="3.6" height="4.5" fill="#909090" fill-opacity="0.6"/><rect x="50.8" y="4.5" width="3.6" height="4.5" fill="#c0c0c0" fill-opacity="0.2"/><rect x="54.4" y="4.5" width="3.6" height="4.5" fill="#d0d0d0" fill-opacity="0.4"/><rect x="58.0" y="4.5" width="3.6" height="4.5" fill="#a8a8a8" fill-opacity="0.2"/><rect x="61.6" y="4.5" width="3.6" height="4.5" fill="#a8a8a8" fill-opacity="0.2"/><rect x="65.2" y="4.5" width="3.6" height="4.5" fill="#909090" fill-opacity="0.3"/><rect x="68.9" y="4.5" width="3.6" height="4.5" fill="#b8b8b8" fill-opacity="0.3"/><rect x="72.5" y="4.5" width="3.6" height="4.5" fill="#b8b8b8" fill-opacity="0.2"/><rect x="76.1" y="4.5" width="3.6" height="4.5" fill="#d0d0d0" fill-opacity="0.2"/><rect x="79.8" y="4.5" width="3.6" height="4.5" fill="#c0c0c0" fill-opacity="0.6"/><rect x="83.4" y="4.5" width="3.6" height="4.5" fill="#a8a8a8" fill-opacity="0.5"/></svg>
<svg class="abs" style="left:212px;top:266.5px;filter:blur(0.6px)" width="84.0" height="9.0"><rect width="84.0" height="9.0" fill="#c0c0c0" fill-opacity="0.38"/><rect x="3.7" y="0.0" width="3.7" height="4.5" fill="#d0d0d0" fill-opacity="0.6"/><rect x="11.0" y="0.0" width="3.7" height="4.5" fill="#b8b8b8" fill-opacity="0.7"/><rect x="14.6" y="0.0" width="3.7" height="4.5" fill="#b8b8b8" fill-opacity="0.4"/><rect x="21.9" y="0.0" width="3.7" height="4.5" fill="#c0c0c0" fill-opacity="0.2"/><rect x="25.6" y="0.0" width="3.7" height="4.5" fill="#a8a8a8" fill-opacity="0.5"/><rect x="29.2" y="0.0" width="3.7" height="4.5" fill="#c0c0c0" fill-opacity="0.2"/><rect x="36.5" y="0.0" width="3.7" height="4.5" fill="#b8b8b8" fill-opacity="0.5"/><rect x="43.8" y="0.0" width="3.7" height="4.5" fill="#c0c0c0" fill-opacity="0.5"/><rect x="47.5" y="0.0" width="3.7" height="4.5" fill="#d0d0d0" fill-opacity="0.6"/><rect x="51.1" y="0.0" width="3.7" height="4.5" fill="#909090" fill-opacity="0.2"/><rect x="54.8" y="0.0" width="3.7" height="4.5" fill="#d0d0d0" fill-opacity="0.6"/><rect x="58.4" y="0.0" width="3.7" height="4.5" fill="#d0d0d0" fill-opacity="0.6"/><rect x="62.1" y="0.0" width="3.7" height="4.5" fill="#d0d0d0" fill-opacity="0.3"/><rect x="69.4" y="0.0" width="3.7" height="4.5" fill="#a8a8a8" fill-opacity="0.2"/><rect x="0.0" y="4.5" width="3.7" height="4.5" fill="#a8a8a8" fill-opacity="0.3"/><rect x="3.7" y="4.5" width="3.7" height="4.5" fill="#d0d0d0" fill-opacity="0.6"/><rect x="14.6" y="4.5" width="3.7" height="4.5" fill="#c0c0c0" fill-opacity="0.2"/><rect x="18.3" y="4.5" width="3.7" height="4.5" fill="#c0c0c0" fill-opacity="0.3"/><rect x="21.9" y="4.5" width="3.7" height="4.5" fill="#c0c0c0" fill-opacity="0.7"/><rect x="25.6" y="4.5" width="3.7" height="4.5" fill="#909090" fill-opacity="0.3"/><rect x="29.2" y="4.5" width="3.7" height="4.5" fill="#b8b8b8" fill-opacity="0.3"/><rect x="36.5" y="4.5" width="3.7" height="4.5" fill="#b8b8b8" fill-opacity="0.4"/><rect x="43.8" y="4.5" width="3.7" height="4.5" fill="#a8a8a8" fill-opacity="0.4"/><rect x="47.5" y="4.5" width="3.7" height="4.5" fill="#b8b8b8" fill-opacity="0.7"/><rect x="51.1" y="4.5" width="3.7" height="4.5" fill="#d0d0d0" fill-opacity="0.5"/><rect x="54.8" y="4.5" width="3.7" height="4.5" fill="#c0c0c0" fill-opacity="0.2"/><rect x="58.4" y="4.5" width="3.7" height="4.5" fill="#a8a8a8" fill-opacity="0.5"/><rect x="62.1" y="4.5" width="3.7" height="4.5" fill="#c0c0c0" fill-opacity="0.6"/><rect x="65.7" y="4.5" width="3.7" height="4.5" fill="#c0c0c0" fill-opacity="0.6"/><rect x="69.4" y="4.5" width="3.7" height="4.5" fill="#a8a8a8" fill-opacity="0.6"/><rect x="73.0" y="4.5" width="3.7" height="4.5" fill="#b8b8b8" fill-opacity="0.6"/><rect x="76.7" y="4.5" width="3.7" height="4.5" fill="#b8b8b8" fill-opacity="0.7"/><rect x="80.3" y="4.5" width="3.7" height="4.5" fill="#d0d0d0" fill-opacity="0.2"/></svg>
<svg class="abs" style="left:212px;top:295px;filter:blur(0.6px)" width="12.0" height="9.0"><rect width="12.0" height="9.0" fill="#c0c0c0" fill-opacity="0.38"/><rect x="0.0" y="0.0" width="4.0" height="4.5" fill="#a8a8a8" fill-opacity="0.2"/><rect x="4.0" y="0.0" width="4.0" height="4.5" fill="#a8a8a8" fill-opacity="0.6"/><rect x="8.0" y="0.0" width="4.0" height="4.5" fill="#909090" fill-opacity="0.4"/><rect x="0.0" y="4.5" width="4.0" height="4.5" fill="#c0c0c0" fill-opacity="0.3"/><rect x="4.0" y="4.5" width="4.0" height="4.5" fill="#909090" fill-opacity="0.2"/><rect x="8.0" y="4.5" width="4.0" height="4.5" fill="#909090" fill-opacity="0.2"/></svg>
<svg class="abs" style="left:235px;top:295px;filter:blur(0.6px)" width="80.0" height="9.0"><rect width="80.0" height="9.0" fill="#c0c0c0" fill-opacity="0.38"/><rect x="0.0" y="0.0" width="3.6" height="4.5" fill="#909090" fill-opacity="0.6"/><rect x="3.6" y="0.0" width="3.6" height="4.5" fill="#d0d0d0" fill-opacity="0.7"/><rect x="7.3" y="0.0" width="3.6" height="4.5" fill="#a8a8a8" fill-opacity="0.6"/><rect x="10.9" y="0.0" width="3.6" height="4.5" fill="#b8b8b8" fill-opacity="0.6"/><rect x="14.5" y="0.0" width="3.6" height="4.5" fill="#a8a8a8" fill-opacity="0.5"/><rect x="18.2" y="0.0" width="3.6" height="4.5" fill="#a8a8a8" fill-opacity="0.5"/><rect x="21.8" y="0.0" width="3.6" height="4.5" fill="#d0d0d0" fill-opacity="0.2"/><rect x="25.5" y="0.0" width="3.6" height="4.5" fill="#a8a8a8" fill-opacity="0.2"/><rect x="29.1" y="0.0" width="3.6" height="4.5" fill="#d0d0d0" fill-opacity="0.6"/><rect x="40.0" y="0.0" width="3.6" height="4.5" fill="#b8b8b8" fill-opacity="0.3"/><rect x="47.3" y="0.0" width="3.6" height="4.5" fill="#c0c0c0" fill-opacity="0.7"/><rect x="50.9" y="0.0" width="3.6" height="4.5" fill="#c0c0c0" fill-opacity="0.2"/><rect x="54.5" y="0.0" width="3.6" height="4.5" fill="#a8a8a8" fill-opacity="0.4"/><rect x="61.8" y="0.0" width="3.6" height="4.5" fill="#a8a8a8" fill-opacity="0.5"/><rect x="65.5" y="0.0" width="3.6" height="4.5" fill="#d0d0d0" fill-opacity="0.7"/><rect x="72.7" y="0.0" width="3.6" height="4.5" fill="#d0d0d0" fill-opacity="0.7"/><rect x="76.4" y="0.0" width="3.6" height="4.5" fill="#c0c0c0" fill-opacity="0.3"/><rect x="0.0" y="4.5" width="3.6" height="4.5" fill="#b8b8b8" fill-opacity="0.5"/><rect x="3.6" y="4.5" width="3.6" height="4.5" fill="#c0c0c0" fill-opacity="0.7"/><rect x="7.3" y="4.5" width="3.6" height="4.5" fill="#b8b8b8" fill-opacity="0.6"/><rect x="10.9" y="4.5" width="3.6" height="4.5" fill="#a8a8a8" fill-opacity="0.4"/><rect x="14.5" y="4.5" width="3.6" height="4.5" fill="#c0c0c0" fill-opacity="0.7"/><rect x="18.2" y="4.5" width="3.6" height="4.5" fill="#b8b8b8" fill-opacity="0.6"/><rect x="21.8" y="4.5" width="3.6" height="4.5" fill="#d0d0d0" fill-opacity="0.6"/><rect x="25.5" y="4.5" width="3.6" height="4.5" fill="#c0c0c0" fill-opacity="0.2"/><rect x="29.1" y="4.5" width="3.6" height="4.5" fill="#c0c0c0" fill-opacity="0.5"/><rect x="32.7" y="4.5" width="3.6" height="4.5" fill="#b8b8b8" fill-opacity="0.2"/><rect x="36.4" y="4.5" width="3.6" height="4.5" fill="#c0c0c0" fill-opacity="0.6"/><rect x="40.0" y="4.5" width="3.6" height="4.5" fill="#909090" fill-opacity="0.2"/><rect x="43.6" y="4.5" width="3.6" height="4.5" fill="#c0c0c0" fill-opacity="0.3"/><rect x="54.5" y="4.5" width="3.6" height="4.5" fill="#a8a8a8" fill-opacity="0.3"/><rect x="58.2" y="4.5" width="3.6" height="4.5" fill="#c0c0c0" fill-opacity="0.6"/><rect x="61.8" y="4.5" width="3.6" height="4.5" fill="#d0d0d0" fill-opacity="0.3"/><rect x="65.5" y="4.5" width="3.6" height="4.5" fill="#a8a8a8" fill-opacity="0.3"/><rect x="72.7" y="4.5" width="3.6" height="4.5" fill="#a8a8a8" fill-opacity="0.4"/><rect x="76.4" y="4.5" width="3.6" height="4.5" fill="#c0c0c0" fill-opacity="0.5"/></svg>
<svg class="abs" style="left:212px;top:321px;filter:blur(0.6px)" width="60.0" height="9.0"><rect width="60.0" height="9.0" fill="#c0c0c0" fill-opacity="0.38"/><rect x="0.0" y="0.0" width="3.5" height="4.5" fill="#d0d0d0" fill-opacity="0.2"/><rect x="3.5" y="0.0" width="3.5" height="4.5" fill="#d0d0d0" fill-opacity="0.2"/><rect x="7.1" y="0.0" width="3.5" height="4.5" fill="#d0d0d0" fill-opacity="0.6"/><rect x="10.6" y="0.0" width="3.5" height="4.5" fill="#d0d0d0" fill-opacity="0.7"/><rect x="14.1" y="0.0" width="3.5" height="4.5" fill="#b8b8b8" fill-opacity="0.7"/><rect x="17.6" y="0.0" width="3.5" height="4.5" fill="#a8a8a8" fill-opacity="0.4"/><rect x="21.2" y="0.0" width="3.5" height="4.5" fill="#a8a8a8" fill-opacity="0.7"/><rect x="24.7" y="0.0" width="3.5" height="4.5" fill="#d0d0d0" fill-opacity="0.6"/><rect x="28.2" y="0.0" width="3.5" height="4.5" fill="#909090" fill-opacity="0.7"/><rect x="31.8" y="0.0" width="3.5" height="4.5" fill="#a8a8a8" fill-opacity="0.5"/><rect x="35.3" y="0.0" width="3.5" height="4.5" fill="#c0c0c0" fill-opacity="0.7"/><rect x="38.8" y="0.0" width="3.5" height="4.5" fill="#a8a8a8" fill-opacity="0.4"/><rect x="42.4" y="0.0" width="3.5" height="4.5" fill="#a8a8a8" fill-opacity="0.2"/><rect x="45.9" y="0.0" width="3.5" height="4.5" fill="#c0c0c0" fill-opacity="0.6"/><rect x="52.9" y="0.0" width="3.5" height="4.5" fill="#909090" fill-opacity="0.2"/><rect x="56.5" y="0.0" width="3.5" height="4.5" fill="#b8b8b8" fill-opacity="0.3"/><rect x="0.0" y="4.5" width="3.5" height="4.5" fill="#a8a8a8" fill-opacity="0.5"/><rect x="7.1" y="4.5" width="3.5" height="4.5" fill="#d0d0d0" fill-opacity="0.6"/><rect x="10.6" y="4.5" width="3.5" height="4.5" fill="#c0c0c0" fill-opacity="0.4"/><rect x="14.1" y="4.5" width="3.5" height="4.5" fill="#a8a8a8" fill-opacity="0.6"/><rect x="17.6" y="4.5" width="3.5" height="4.5" fill="#a8a8a8" fill-opacity="0.3"/><rect x="21.2" y="4.5" width="3.5" height="4.5" fill="#a8a8a8" fill-opacity="0.2"/><rect x="24.7" y="4.5" width="3.5" height="4.5" fill="#d0d0d0" fill-opacity="0.5"/><rect x="28.2" y="4.5" width="3.5" height="4.5" fill="#b8b8b8" fill-opacity="0.3"/><rect x="31.8" y="4.5" width="3.5" height="4.5" fill="#d0d0d0" fill-opacity="0.7"/><rect x="35.3" y="4.5" width="3.5" height="4.5" fill="#c0c0c0" fill-opacity="0.7"/><rect x="42.4" y="4.5" width="3.5" height="4.5" fill="#c0c0c0" fill-opacity="0.2"/><rect x="45.9" y="4.5" width="3.5" height="4.5" fill="#c0c0c0" fill-opacity="0.4"/><rect x="49.4" y="4.5" width="3.5" height="4.5" fill="#c0c0c0" fill-opacity="0.6"/><rect x="52.9" y="4.5" width="3.5" height="4.5" fill="#d0d0d0" fill-opacity="0.4"/><rect x="56.5" y="4.5" width="3.5" height="4.5" fill="#b8b8b8" fill-opacity="0.5"/></svg>
<svg class="abs" style="left:212px;top:338px;filter:blur(0.6px)" width="15.0" height="9.0"><rect width="15.0" height="9.0" fill="#c0c0c0" fill-opacity="0.38"/><rect x="0.0" y="0.0" width="3.8" height="4.5" fill="#d0d0d0" fill-opacity="0.4"/><rect x="3.8" y="0.0" width="3.8" height="4.5" fill="#909090" fill-opacity="0.6"/><rect x="7.5" y="0.0" width="3.8" height="4.5" fill="#d0d0d0" fill-opacity="0.6"/><rect x="11.2" y="0.0" width="3.8" height="4.5" fill="#909090" fill-opacity="0.4"/><rect x="0.0" y="4.5" width="3.8" height="4.5" fill="#909090" fill-opacity="0.4"/><rect x="3.8" y="4.5" width="3.8" height="4.5" fill="#a8a8a8" fill-opacity="0.5"/><rect x="7.5" y="4.5" width="3.8" height="4.5" fill="#909090" fill-opacity="0.7"/><rect x="11.2" y="4.5" width="3.8" height="4.5" fill="#b8b8b8" fill-opacity="0.7"/></svg>
<svg class="abs" style="left:235px;top:338px;filter:blur(0.6px)" width="80.0" height="9.0"><rect width="80.0" height="9.0" fill="#c0c0c0" fill-opacity="0.38"/><rect x="0.0" y="0.0" width="3.6" height="4.5" fill="#c0c0c0" fill-opacity="0.5"/><rect x="3.6" y="0.0" width="3.6" height="4.5" fill="#b8b8b8" fill-opacity="0.2"/><rect x="7.3" y="0.0" width="3.6" height="4.5" fill="#a8a8a8" fill-opacity="0.5"/><rect x="10.9" y="0.0" width="3.6" height="4.5" fill="#a8a8a8" fill-opacity="0.5"/><rect x="18.2" y="0.0" width="3.6" height="4.5" fill="#d0d0d0" fill-opacity="0.4"/><rect x="21.8" y="0.0" width="3.6" height="4.5" fill="#d0d0d0" fill-opacity="0.6"/><rect x="25.5" y="0.0" width="3.6" height="4.5" fill="#b8b8b8" fill-opacity="0.7"/><rect x="29.1" y="0.0" width="3.6" height="4.5" fill="#b8b8b8" fill-opacity="0.6"/><rect x="36.4" y="0.0" width="3.6" height="4.5" fill="#c0c0c0" fill-opacity="0.5"/><rect x="40.0" y="0.0" width="3.6" height="4.5" fill="#d0d0d0" fill-opacity="0.6"/><rect x="43.6" y="0.0" width="3.6" height="4.5" fill="#a8a8a8" fill-opacity="0.3"/><rect x="47.3" y="0.0" width="3.6" height="4.5" fill="#c0c0c0" fill-opacity="0.4"/><rect x="50.9" y="0.0" width="3.6" height="4.5" fill="#d0d0d0" fill-opacity="0.4"/><rect x="54.5" y="0.0" width="3.6" height="4.5" fill="#d0d0d0" fill-opacity="0.3"/><rect x="58.2" y="0.0" width="3.6" height="4.5" fill="#b8b8b8" fill-opacity="0.7"/><rect x="61.8" y="0.0" width="3.6" height="4.5" fill="#909090" fill-opacity="0.4"/><rect x="65.5" y="0.0" width="3.6" height="4.5" fill="#909090" fill-opacity="0.7"/><rect x="69.1" y="0.0" width="3.6" height="4.5" fill="#d0d0d0" fill-opacity="0.7"/><rect x="72.7" y="0.0" width="3.6" height="4.5" fill="#c0c0c0" fill-opacity="0.5"/><rect x="76.4" y="0.0" width="3.6" height="4.5" fill="#a8a8a8" fill-opacity="0.2"/><rect x="0.0" y="4.5" width="3.6" height="4.5" fill="#909090" fill-opacity="0.6"/><rect x="3.6" y="4.5" width="3.6" height="4.5" fill="#d0d0d0" fill-opacity="0.4"/><rect x="10.9" y="4.5" width="3.6" height="4.5" fill="#d0d0d0" fill-opacity="0.5"/><rect x="14.5" y="4.5" width="3.6" height="4.5" fill="#909090" fill-opacity="0.4"/><rect x="18.2" y="4.5" width="3.6" height="4.5" fill="#b8b8b8" fill-opacity="0.6"/><rect x="21.8" y="4.5" width="3.6" height="4.5" fill="#d0d0d0" fill-opacity="0.4"/><rect x="25.5" y="4.5" width="3.6" height="4.5" fill="#a8a8a8" fill-opacity="0.6"/><rect x="29.1" y="4.5" width="3.6" height="4.5" fill="#d0d0d0" fill-opacity="0.4"/><rect x="32.7" y="4.5" width="3.6" height="4.5" fill="#909090" fill-opacity="0.7"/><rect x="36.4" y="4.5" width="3.6" height="4.5" fill="#c0c0c0" fill-opacity="0.5"/><rect x="40.0" y="4.5" width="3.6" height="4.5" fill="#909090" fill-opacity="0.3"/><rect x="43.6" y="4.5" width="3.6" height="4.5" fill="#c0c0c0" fill-opacity="0.5"/><rect x="47.3" y="4.5" width="3.6" height="4.5" fill="#a8a8a8" fill-opacity="0.4"/><rect x="50.9" y="4.5" width="3.6" height="4.5" fill="#d0d0d0" fill-opacity="0.5"/><rect x="54.5" y="4.5" width="3.6" height="4.5" fill="#909090" fill-opacity="0.2"/><rect x="58.2" y="4.5" width="3.6" height="4.5" fill="#d0d0d0" fill-opacity="0.5"/><rect x="61.8" y="4.5" width="3.6" height="4.5" fill="#b8b8b8" fill-opacity="0.7"/><rect x="65.5" y="4.5" width="3.6" height="4.5" fill="#b8b8b8" fill-opacity="0.2"/><rect x="69.1" y="4.5" width="3.6" height="4.5" fill="#b8b8b8" fill-opacity="0.7"/><rect x="72.7" y="4.5" width="3.6" height="4.5" fill="#a8a8a8" fill-opacity="0.6"/><rect x="76.4" y="4.5" width="3.6" height="4.5" fill="#c0c0c0" fill-opacity="0.2"/></svg>
<svg class="abs" style="left:212px;top:360px;filter:blur(0.6px)" width="12.0" height="9.0"><rect width="12.0" height="9.0" fill="#c0c0c0" fill-opacity="0.38"/><rect x="0.0" y="0.0" width="4.0" height="4.5" fill="#a8a8a8" fill-opacity="0.4"/><rect x="4.0" y="0.0" width="4.0" height="4.5" fill="#a8a8a8" fill-opacity="0.4"/><rect x="8.0" y="0.0" width="4.0" height="4.5" fill="#909090" fill-opacity="0.5"/><rect x="0.0" y="4.5" width="4.0" height="4.5" fill="#909090" fill-opacity="0.3"/><rect x="4.0" y="4.5" width="4.0" height="4.5" fill="#a8a8a8" fill-opacity="0.4"/><rect x="8.0" y="4.5" width="4.0" height="4.5" fill="#a8a8a8" fill-opacity="0.4"/></svg>
<svg class="abs" style="left:235px;top:360px;filter:blur(0.6px)" width="70.0" height="9.0"><rect width="70.0" height="9.0" fill="#c0c0c0" fill-opacity="0.38"/><rect x="0.0" y="0.0" width="3.7" height="4.5" fill="#a8a8a8" fill-opacity="0.6"/><rect x="3.7" y="0.0" width="3.7" height="4.5" fill="#d0d0d0" fill-opacity="0.4"/><rect x="7.4" y="0.0" width="3.7" height="4.5" fill="#d0d0d0" fill-opacity="0.5"/><rect x="14.7" y="0.0" width="3.7" height="4.5" fill="#c0c0c0" fill-opacity="0.4"/><rect x="18.4" y="0.0" width="3.7" height="4.5" fill="#a8a8a8" fill-opacity="0.2"/><rect x="22.1" y="0.0" width="3.7" height="4.5" fill="#c0c0c0" fill-opacity="0.5"/><rect x="25.8" y="0.0" width="3.7" height="4.5" fill="#a8a8a8" fill-opacity="0.6"/><rect x="29.5" y="0.0" width="3.7" height="4.5" fill="#a8a8a8" fill-opacity="0.3"/><rect x="33.2" y="0.0" width="3.7" height="4.5" fill="#d0d0d0" fill-opacity="0.2"/><rect x="36.8" y="0.0" width="3.7" height="4.5" fill="#c0c0c0" fill-opacity="0.4"/><rect x="40.5" y="0.0" width="3.7" height="4.5" fill="#a8a8a8" fill-opacity="0.4"/><rect x="44.2" y="0.0" width="3.7" height="4.5" fill="#c0c0c0" fill-opacity="0.6"/><rect x="47.9" y="0.0" width="3.7" height="4.5" fill="#b8b8b8" fill-opacity="0.6"/><rect x="51.6" y="0.0" width="3.7" height="4.5" fill="#909090" fill-opacity="0.7"/><rect x="55.3" y="0.0" width="3.7" height="4.5" fill="#a8a8a8" fill-opacity="0.2"/><rect x="58.9" y="0.0" width="3.7" height="4.5" fill="#b8b8b8" fill-opacity="0.2"/><rect x="62.6" y="0.0" width="3.7" height="4.5" fill="#b8b8b8" fill-opacity="0.2"/><rect x="0.0" y="4.5" width="3.7" height="4.5" fill="#a8a8a8" fill-opacity="0.3"/><rect x="7.4" y="4.5" width="3.7" height="4.5" fill="#d0d0d0" fill-opacity="0.6"/><rect x="11.1" y="4.5" width="3.7" height="4.5" fill="#a8a8a8" fill-opacity="0.4"/><rect x="14.7" y="4.5" width="3.7" height="4.5" fill="#d0d0d0" fill-opacity="0.4"/><rect x="18.4" y="4.5" width="3.7" height="4.5" fill="#d0d0d0" fill-opacity="0.7"/><rect x="22.1" y="4.5" width="3.7" height="4.5" fill="#b8b8b8" fill-opacity="0.4"/><rect x="25.8" y="4.5" width="3.7" height="4.5" fill="#b8b8b8" fill-opacity="0.7"/><rect x="29.5" y="4.5" width="3.7" height="4.5" fill="#b8b8b8" fill-opacity="0.3"/><rect x="33.2" y="4.5" width="3.7" height="4.5" fill="#a8a8a8" fill-opacity="0.6"/><rect x="36.8" y="4.5" width="3.7" height="4.5" fill="#909090" fill-opacity="0.5"/><rect x="44.2" y="4.5" width="3.7" height="4.5" fill="#d0d0d0" fill-opacity="0.6"/><rect x="47.9" y="4.5" width="3.7" height="4.5" fill="#c0c0c0" fill-opacity="0.6"/><rect x="51.6" y="4.5" width="3.7" height="4.5" fill="#a8a8a8" fill-opacity="0.3"/><rect x="55.3" y="4.5" width="3.7" height="4.5" fill="#c0c0c0" fill-opacity="0.5"/><rect x="66.3" y="4.5" width="3.7" height="4.5" fill="#c0c0c0" fill-opacity="0.6"/></svg>
<div class="abs tn" style="left:376.5px;top:238.25px;font-size:8.2px;color:#4a4a4a;letter-spacing:0.2px">10/09 10:00 〜</div>
<div class="abs tn" style="left:376.5px;top:267.0px;font-size:8.2px;color:#4a4a4a;letter-spacing:0.2px">10/04 11:00 〜</div>
<div class="abs tn" style="left:376.5px;top:295.35px;font-size:8.2px;color:#4a4a4a;letter-spacing:0.2px">10/02 00:00 〜</div>
<div class="abs tn" style="left:376.5px;top:318.65px;font-size:8.2px;color:#4a4a4a;letter-spacing:0.2px">10/01 00:00 〜</div>
<div class="abs tn" style="left:376.5px;top:336.9px;font-size:8.2px;color:#4a4a4a;letter-spacing:0.2px">09/28 00:00 〜</div>
<div class="abs tn" style="left:376.5px;top:360.4px;font-size:8.2px;color:#4a4a4a;letter-spacing:0.2px">09/25 00:00 〜</div>
<div class="abs t" style="left:420px;top:382.5px;font-size:8.2px;color:#6a3c80;text-decoration:underline;">more...</div>
<div class="abs" style="left:18px;top:387px;width:449px;height:30px;background:#fff"></div>
<div class="abs" style="left:484.5px;top:229.5px;width:435.5px;height:161px;border:1px solid #cfcfcf;background:#fff"></div>
<div class="abs" style="left:485.5px;top:230.5px;width:433.5px;height:28.0px;background:#fff;border-bottom:1px solid #d2d2d2"></div>
<div class="abs" style="left:485.5px;top:258.5px;width:433.5px;height:28.0px;background:#ededed;border-bottom:1px solid #d2d2d2"></div>
<div class="abs" style="left:485.5px;top:286.5px;width:433.5px;height:18.5px;background:#fff;border-bottom:1px solid #d2d2d2"></div>
<div class="abs" style="left:485.5px;top:305px;width:433.5px;height:28px;background:#ededed;border-bottom:1px solid #d2d2d2"></div>
<div class="abs" style="left:485.5px;top:333px;width:433.5px;height:28.69999999999999px;background:#fff;border-bottom:1px solid #d2d2d2"></div>
<div class="abs" style="left:485.5px;top:361.7px;width:433.5px;height:28.80000000000001px;background:#ededed;border-bottom:1px solid #d2d2d2"></div>
<div class="abs t" style="left:487.5px;top:238.5px;font-size:8.2px;color:#3c3c3c;transform:scaleX(1.04);transform-origin:0 0;">決裁書ワークフロー（公開）</div>
<div class="abs tn" style="left:866px;top:238.5px;font-size:8.2px;color:#4a4a4a;letter-spacing:0.2px">10/11 09:15</div>
<div class="abs t" style="left:487.5px;top:267.0px;font-size:8.2px;color:#3c3c3c;transform:scaleX(1.04);transform-origin:0 0;">決裁書ワークフロー（公開）</div>
<div class="abs tn" style="left:866px;top:267.0px;font-size:8.2px;color:#4a4a4a;letter-spacing:0.2px">10/11 09:12</div>
<div class="abs t" style="left:487.5px;top:290.25px;font-size:8.2px;color:#3c3c3c;transform:scaleX(1.04);transform-origin:0 0;">売上速報</div>
<div class="abs tn" style="left:866px;top:290.25px;font-size:8.2px;color:#4a4a4a;letter-spacing:0.2px">10/11 07:00</div>
<div class="abs t" style="left:487.5px;top:313.5px;font-size:8.2px;color:#3c3c3c;transform:scaleX(1.04);transform-origin:0 0;">決裁書ワークフロー（公開）</div>
<div class="abs tn" style="left:866px;top:313.5px;font-size:8.2px;color:#4a4a4a;letter-spacing:0.2px">10/10 18:35</div>
<div class="abs t" style="left:487.5px;top:341.85px;font-size:8.2px;color:#3c3c3c;transform:scaleX(1.07);transform-origin:0 0;">19時以降残業決裁伺書</div>
<div class="abs tn" style="left:866px;top:341.85px;font-size:8.2px;color:#4a4a4a;letter-spacing:0.2px">10/10 18:34</div>
<div class="abs t" style="left:487.5px;top:370.6px;font-size:8.2px;color:#3c3c3c;transform:scaleX(1.07);transform-origin:0 0;">19時以降残業決裁伺書</div>
<div class="abs tn" style="left:866px;top:370.6px;font-size:8.2px;color:#4a4a4a;letter-spacing:0.2px">10/10 18:23</div>
<svg class="abs" style="left:675.5px;top:232.2px;filter:blur(0.6px)" width="180.5" height="10.0"><rect width="180.5" height="10.0" fill="#c8bce4" fill-opacity="0.38"/><rect x="0.0" y="0.0" width="4.0" height="5.0" fill="#a89cd8" fill-opacity="0.2"/><rect x="8.0" y="0.0" width="4.0" height="5.0" fill="#a89cd8" fill-opacity="0.6"/><rect x="16.0" y="0.0" width="4.0" height="5.0" fill="#b4a8d8" fill-opacity="0.5"/><rect x="20.1" y="0.0" width="4.0" height="5.0" fill="#d4cce8" fill-opacity="0.3"/><rect x="24.1" y="0.0" width="4.0" height="5.0" fill="#c8bce4" fill-opacity="0.3"/><rect x="28.1" y="0.0" width="4.0" height="5.0" fill="#d4cce8" fill-opacity="0.4"/><rect x="32.1" y="0.0" width="4.0" height="5.0" fill="#9c8cd0" fill-opacity="0.5"/><rect x="36.1" y="0.0" width="4.0" height="5.0" fill="#d4cce8" fill-opacity="0.4"/><rect x="40.1" y="0.0" width="4.0" height="5.0" fill="#9c8cd0" fill-opacity="0.6"/><rect x="44.1" y="0.0" width="4.0" height="5.0" fill="#a89cd8" fill-opacity="0.5"/><rect x="48.1" y="0.0" width="4.0" height="5.0" fill="#a89cd8" fill-opacity="0.3"/><rect x="52.1" y="0.0" width="4.0" height="5.0" fill="#c8bce4" fill-opacity="0.3"/><rect x="56.2" y="0.0" width="4.0" height="5.0" fill="#c8bce4" fill-opacity="0.6"/><rect x="60.2" y="0.0" width="4.0" height="5.0" fill="#a89cd8" fill-opacity="0.5"/><rect x="64.2" y="0.0" width="4.0" height="5.0" fill="#a89cd8" fill-opacity="0.7"/><rect x="68.2" y="0.0" width="4.0" height="5.0" fill="#d4cce8" fill-opacity="0.4"/><rect x="72.2" y="0.0" width="4.0" height="5.0" fill="#8c7cc8" fill-opacity="0.4"/><rect x="76.2" y="0.0" width="4.0" height="5.0" fill="#9c8cd0" fill-opacity="0.5"/><rect x="80.2" y="0.0" width="4.0" height="5.0" fill="#a89cd8" fill-opacity="0.5"/><rect x="84.2" y="0.0" width="4.0" height="5.0" fill="#c8bce4" fill-opacity="0.7"/><rect x="88.2" y="0.0" width="4.0" height="5.0" fill="#d4cce8" fill-opacity="0.5"/><rect x="92.3" y="0.0" width="4.0" height="5.0" fill="#9c8cd0" fill-opacity="0.4"/><rect x="100.3" y="0.0" width="4.0" height="5.0" fill="#a89cd8" fill-opacity="0.7"/><rect x="104.3" y="0.0" width="4.0" height="5.0" fill="#b4a8d8" fill-opacity="0.4"/><rect x="112.3" y="0.0" width="4.0" height="5.0" fill="#b4a8d8" fill-opacity="0.2"/><rect x="116.3" y="0.0" width="4.0" height="5.0" fill="#8c7cc8" fill-opacity="0.4"/><rect x="128.4" y="0.0" width="4.0" height="5.0" fill="#a89cd8" fill-opacity="0.5"/><rect x="136.4" y="0.0" width="4.0" height="5.0" fill="#b4a8d8" fill-opacity="0.3"/><rect x="140.4" y="0.0" width="4.0" height="5.0" fill="#8c7cc8" fill-opacity="0.2"/><rect x="148.4" y="0.0" width="4.0" height="5.0" fill="#c8bce4" fill-opacity="0.4"/><rect x="152.4" y="0.0" width="4.0" height="5.0" fill="#c8bce4" fill-opacity="0.7"/><rect x="156.4" y="0.0" width="4.0" height="5.0" fill="#b4a8d8" fill-opacity="0.7"/><rect x="164.5" y="0.0" width="4.0" height="5.0" fill="#a89cd8" fill-opacity="0.7"/><rect x="168.5" y="0.0" width="4.0" height="5.0" fill="#b4a8d8" fill-opacity="0.3"/><rect x="172.5" y="0.0" width="4.0" height="5.0" fill="#8c7cc8" fill-opacity="0.5"/><rect x="0.0" y="5.0" width="4.0" height="5.0" fill="#c8bce4" fill-opacity="0.3"/><rect x="4.0" y="5.0" width="4.0" height="5.0" fill="#c8bce4" fill-opacity="0.6"/><rect x="8.0" y="5.0" width="4.0" height="5.0" fill="#a89cd8" fill-opacity="0.4"/><rect x="12.0" y="5.0" width="4.0" height="5.0" fill="#d4cce8" fill-opacity="0.3"/><rect x="16.0" y="5.0" width="4.0" height="5.0" fill="#b4a8d8" fill-opacity="0.4"/><rect x="20.1" y="5.0" width="4.0" height="5.0" fill="#d4cce8" fill-opacity="0.3"/><rect x="24.1" y="5.0" width="4.0" height="5.0" fill="#8c7cc8" fill-opacity="0.7"/><rect x="28.1" y="5.0" width="4.0" height="5.0" fill="#c8bce4" fill-opacity="0.6"/><rect x="32.1" y="5.0" width="4.0" height="5.0" fill="#c8bce4" fill-opacity="0.2"/><rect x="36.1" y="5.0" width="4.0" height="5.0" fill="#9c8cd0" fill-opacity="0.7"/><rect x="40.1" y="5.0" width="4.0" height="5.0" fill="#d4cce8" fill-opacity="0.7"/><rect x="48.1" y="5.0" width="4.0" height="5.0" fill="#b4a8d8" fill-opacity="0.5"/><rect x="52.1" y="5.0" width="4.0" height="5.0" fill="#9c8cd0" fill-opacity="0.3"/><rect x="56.2" y="5.0" width="4.0" height="5.0" fill="#b4a8d8" fill-opacity="0.5"/><rect x="60.2" y="5.0" width="4.0" height="5.0" fill="#c8bce4" fill-opacity="0.6"/><rect x="64.2" y="5.0" width="4.0" height="5.0" fill="#d4cce8" fill-opacity="0.5"/><rect x="68.2" y="5.0" width="4.0" height="5.0" fill="#c8bce4" fill-opacity="0.3"/><rect x="72.2" y="5.0" width="4.0" height="5.0" fill="#c8bce4" fill-opacity="0.2"/><rect x="76.2" y="5.0" width="4.0" height="5.0" fill="#9c8cd0" fill-opacity="0.4"/><rect x="80.2" y="5.0" width="4.0" height="5.0" fill="#d4cce8" fill-opacity="0.2"/><rect x="84.2" y="5.0" width="4.0" height="5.0" fill="#d4cce8" fill-opacity="0.2"/><rect x="92.3" y="5.0" width="4.0" height="5.0" fill="#8c7cc8" fill-opacity="0.7"/><rect x="96.3" y="5.0" width="4.0" height="5.0" fill="#9c8cd0" fill-opacity="0.2"/><rect x="100.3" y="5.0" width="4.0" height="5.0" fill="#9c8cd0" fill-opacity="0.4"/><rect x="104.3" y="5.0" width="4.0" height="5.0" fill="#c8bce4" fill-opacity="0.7"/><rect x="108.3" y="5.0" width="4.0" height="5.0" fill="#9c8cd0" fill-opacity="0.4"/><rect x="112.3" y="5.0" width="4.0" height="5.0" fill="#8c7cc8" fill-opacity="0.7"/><rect x="116.3" y="5.0" width="4.0" height="5.0" fill="#8c7cc8" fill-opacity="0.2"/><rect x="120.3" y="5.0" width="4.0" height="5.0" fill="#9c8cd0" fill-opacity="0.5"/><rect x="124.3" y="5.0" width="4.0" height="5.0" fill="#a89cd8" fill-opacity="0.3"/><rect x="128.4" y="5.0" width="4.0" height="5.0" fill="#b4a8d8" fill-opacity="0.7"/><rect x="132.4" y="5.0" width="4.0" height="5.0" fill="#a89cd8" fill-opacity="0.3"/><rect x="136.4" y="5.0" width="4.0" height="5.0" fill="#a89cd8" fill-opacity="0.6"/><rect x="140.4" y="5.0" width="4.0" height="5.0" fill="#c8bce4" fill-opacity="0.5"/><rect x="144.4" y="5.0" width="4.0" height="5.0" fill="#a89cd8" fill-opacity="0.6"/><rect x="148.4" y="5.0" width="4.0" height="5.0" fill="#c8bce4" fill-opacity="0.3"/><rect x="152.4" y="5.0" width="4.0" height="5.0" fill="#8c7cc8" fill-opacity="0.5"/><rect x="156.4" y="5.0" width="4.0" height="5.0" fill="#9c8cd0" fill-opacity="0.3"/><rect x="160.4" y="5.0" width="4.0" height="5.0" fill="#8c7cc8" fill-opacity="0.5"/><rect x="164.5" y="5.0" width="4.0" height="5.0" fill="#b4a8d8" fill-opacity="0.5"/><rect x="168.5" y="5.0" width="4.0" height="5.0" fill="#9c8cd0" fill-opacity="0.7"/><rect x="172.5" y="5.0" width="4.0" height="5.0" fill="#d4cce8" fill-opacity="0.2"/><rect x="176.5" y="5.0" width="4.0" height="5.0" fill="#d4cce8" fill-opacity="0.2"/></svg>
<svg class="abs" style="left:675.5px;top:245.5px;filter:blur(0.6px)" width="30.0" height="8.0"><rect width="30.0" height="8.0" fill="#c8bce4" fill-opacity="0.38"/><rect x="0.0" y="0.0" width="3.8" height="4.0" fill="#c8bce4" fill-opacity="0.3"/><rect x="3.8" y="0.0" width="3.8" height="4.0" fill="#9c8cd0" fill-opacity="0.2"/><rect x="7.5" y="0.0" width="3.8" height="4.0" fill="#a89cd8" fill-opacity="0.5"/><rect x="11.2" y="0.0" width="3.8" height="4.0" fill="#a89cd8" fill-opacity="0.7"/><rect x="15.0" y="0.0" width="3.8" height="4.0" fill="#b4a8d8" fill-opacity="0.2"/><rect x="18.8" y="0.0" width="3.8" height="4.0" fill="#9c8cd0" fill-opacity="0.6"/><rect x="22.5" y="0.0" width="3.8" height="4.0" fill="#a89cd8" fill-opacity="0.6"/><rect x="26.2" y="0.0" width="3.8" height="4.0" fill="#b4a8d8" fill-opacity="0.7"/><rect x="0.0" y="4.0" width="3.8" height="4.0" fill="#a89cd8" fill-opacity="0.2"/><rect x="3.8" y="4.0" width="3.8" height="4.0" fill="#c8bce4" fill-opacity="0.2"/><rect x="7.5" y="4.0" width="3.8" height="4.0" fill="#c8bce4" fill-opacity="0.5"/><rect x="11.2" y="4.0" width="3.8" height="4.0" fill="#9c8cd0" fill-opacity="0.3"/><rect x="15.0" y="4.0" width="3.8" height="4.0" fill="#b4a8d8" fill-opacity="0.2"/><rect x="18.8" y="4.0" width="3.8" height="4.0" fill="#8c7cc8" fill-opacity="0.3"/><rect x="22.5" y="4.0" width="3.8" height="4.0" fill="#a89cd8" fill-opacity="0.5"/><rect x="26.2" y="4.0" width="3.8" height="4.0" fill="#c8bce4" fill-opacity="0.6"/></svg>
<svg class="abs" style="left:675.5px;top:261.8px;filter:blur(0.6px)" width="180.5" height="9.0"><rect width="180.5" height="9.0" fill="#c8bce4" fill-opacity="0.38"/><rect x="0.0" y="0.0" width="4.0" height="4.5" fill="#b4a8d8" fill-opacity="0.6"/><rect x="4.0" y="0.0" width="4.0" height="4.5" fill="#b4a8d8" fill-opacity="0.4"/><rect x="8.0" y="0.0" width="4.0" height="4.5" fill="#9c8cd0" fill-opacity="0.2"/><rect x="12.0" y="0.0" width="4.0" height="4.5" fill="#c8bce4" fill-opacity="0.5"/><rect x="16.0" y="0.0" width="4.0" height="4.5" fill="#c8bce4" fill-opacity="0.2"/><rect x="20.1" y="0.0" width="4.0" height="4.5" fill="#8c7cc8" fill-opacity="0.4"/><rect x="28.1" y="0.0" width="4.0" height="4.5" fill="#8c7cc8" fill-opacity="0.4"/><rect x="32.1" y="0.0" width="4.0" height="4.5" fill="#a89cd8" fill-opacity="0.5"/><rect x="36.1" y="0.0" width="4.0" height="4.5" fill="#b4a8d8" fill-opacity="0.6"/><rect x="40.1" y="0.0" width="4.0" height="4.5" fill="#c8bce4" fill-opacity="0.7"/><rect x="44.1" y="0.0" width="4.0" height="4.5" fill="#a89cd8" fill-opacity="0.6"/><rect x="52.1" y="0.0" width="4.0" height="4.5" fill="#a89cd8" fill-opacity="0.2"/><rect x="56.2" y="0.0" width="4.0" height="4.5" fill="#8c7cc8" fill-opacity="0.7"/><rect x="60.2" y="0.0" width="4.0" height="4.5" fill="#d4cce8" fill-opacity="0.5"/><rect x="64.2" y="0.0" width="4.0" height="4.5" fill="#b4a8d8" fill-opacity="0.5"/><rect x="68.2" y="0.0" width="4.0" height="4.5" fill="#d4cce8" fill-opacity="0.3"/><rect x="72.2" y="0.0" width="4.0" height="4.5" fill="#c8bce4" fill-opacity="0.2"/><rect x="80.2" y="0.0" width="4.0" height="4.5" fill="#d4cce8" fill-opacity="0.5"/><rect x="84.2" y="0.0" width="4.0" height="4.5" fill="#b4a8d8" fill-opacity="0.2"/><rect x="88.2" y="0.0" width="4.0" height="4.5" fill="#9c8cd0" fill-opacity="0.7"/><rect x="92.3" y="0.0" width="4.0" height="4.5" fill="#8c7cc8" fill-opacity="0.5"/><rect x="100.3" y="0.0" width="4.0" height="4.5" fill="#9c8cd0" fill-opacity="0.2"/><rect x="104.3" y="0.0" width="4.0" height="4.5" fill="#c8bce4" fill-opacity="0.7"/><rect x="108.3" y="0.0" width="4.0" height="4.5" fill="#9c8cd0" fill-opacity="0.4"/><rect x="112.3" y="0.0" width="4.0" height="4.5" fill="#b4a8d8" fill-opacity="0.5"/><rect x="120.3" y="0.0" width="4.0" height="4.5" fill="#9c8cd0" fill-opacity="0.2"/><rect x="124.3" y="0.0" width="4.0" height="4.5" fill="#c8bce4" fill-opacity="0.4"/><rect x="128.4" y="0.0" width="4.0" height="4.5" fill="#9c8cd0" fill-opacity="0.7"/><rect x="132.4" y="0.0" width="4.0" height="4.5" fill="#9c8cd0" fill-opacity="0.3"/><rect x="136.4" y="0.0" width="4.0" height="4.5" fill="#a89cd8" fill-opacity="0.3"/><rect x="140.4" y="0.0" width="4.0" height="4.5" fill="#8c7cc8" fill-opacity="0.5"/><rect x="144.4" y="0.0" width="4.0" height="4.5" fill="#c8bce4" fill-opacity="0.5"/><rect x="148.4" y="0.0" width="4.0" height="4.5" fill="#a89cd8" fill-opacity="0.3"/><rect x="152.4" y="0.0" width="4.0" height="4.5" fill="#9c8cd0" fill-opacity="0.2"/><rect x="156.4" y="0.0" width="4.0" height="4.5" fill="#c8bce4" fill-opacity="0.5"/><rect x="160.4" y="0.0" width="4.0" height="4.5" fill="#a89cd8" fill-opacity="0.4"/><rect x="168.5" y="0.0" width="4.0" height="4.5" fill="#c8bce4" fill-opacity="0.3"/><rect x="172.5" y="0.0" width="4.0" height="4.5" fill="#9c8cd0" fill-opacity="0.3"/><rect x="0.0" y="4.5" width="4.0" height="4.5" fill="#b4a8d8" fill-opacity="0.2"/><rect x="4.0" y="4.5" width="4.0" height="4.5" fill="#9c8cd0" fill-opacity="0.4"/><rect x="8.0" y="4.5" width="4.0" height="4.5" fill="#d4cce8" fill-opacity="0.7"/><rect x="12.0" y="4.5" width="4.0" height="4.5" fill="#b4a8d8" fill-opacity="0.5"/><rect x="20.1" y="4.5" width="4.0" height="4.5" fill="#c8bce4" fill-opacity="0.4"/><rect x="24.1" y="4.5" width="4.0" height="4.5" fill="#c8bce4" fill-opacity="0.6"/><rect x="28.1" y="4.5" width="4.0" height="4.5" fill="#9c8cd0" fill-opacity="0.6"/><rect x="32.1" y="4.5" width="4.0" height="4.5" fill="#8c7cc8" fill-opacity="0.7"/><rect x="44.1" y="4.5" width="4.0" height="4.5" fill="#8c7cc8" fill-opacity="0.6"/><rect x="52.1" y="4.5" width="4.0" height="4.5" fill="#b4a8d8" fill-opacity="0.2"/><rect x="56.2" y="4.5" width="4.0" height="4.5" fill="#a89cd8" fill-opacity="0.2"/><rect x="60.2" y="4.5" width="4.0" height="4.5" fill="#a89cd8" fill-opacity="0.2"/><rect x="64.2" y="4.5" width="4.0" height="4.5" fill="#9c8cd0" fill-opacity="0.7"/><rect x="68.2" y="4.5" width="4.0" height="4.5" fill="#d4cce8" fill-opacity="0.7"/><rect x="72.2" y="4.5" width="4.0" height="4.5" fill="#9c8cd0" fill-opacity="0.6"/><rect x="76.2" y="4.5" width="4.0" height="4.5" fill="#d4cce8" fill-opacity="0.5"/><rect x="80.2" y="4.5" width="4.0" height="4.5" fill="#8c7cc8" fill-opacity="0.3"/><rect x="84.2" y="4.5" width="4.0" height="4.5" fill="#d4cce8" fill-opacity="0.4"/><rect x="88.2" y="4.5" width="4.0" height="4.5" fill="#a89cd8" fill-opacity="0.3"/><rect x="92.3" y="4.5" width="4.0" height="4.5" fill="#a89cd8" fill-opacity="0.4"/><rect x="96.3" y="4.5" width="4.0" height="4.5" fill="#9c8cd0" fill-opacity="0.3"/><rect x="100.3" y="4.5" width="4.0" height="4.5" fill="#c8bce4" fill-opacity="0.7"/><rect x="104.3" y="4.5" width="4.0" height="4.5" fill="#d4cce8" fill-opacity="0.7"/><rect x="112.3" y="4.5" width="4.0" height="4.5" fill="#9c8cd0" fill-opacity="0.5"/><rect x="116.3" y="4.5" width="4.0" height="4.5" fill="#a89cd8" fill-opacity="0.6"/><rect x="120.3" y="4.5" width="4.0" height="4.5" fill="#d4cce8" fill-opacity="0.5"/><rect x="124.3" y="4.5" width="4.0" height="4.5" fill="#8c7cc8" fill-opacity="0.4"/><rect x="128.4" y="4.5" width="4.0" height="4.5" fill="#b4a8d8" fill-opacity="0.5"/><rect x="132.4" y="4.5" width="4.0" height="4.5" fill="#b4a8d8" fill-opacity="0.6"/><rect x="136.4" y="4.5" width="4.0" height="4.5" fill="#b4a8d8" fill-opacity="0.4"/><rect x="140.4" y="4.5" width="4.0" height="4.5" fill="#8c7cc8" fill-opacity="0.5"/><rect x="144.4" y="4.5" width="4.0" height="4.5" fill="#c8bce4" fill-opacity="0.7"/><rect x="148.4" y="4.5" width="4.0" height="4.5" fill="#d4cce8" fill-opacity="0.6"/><rect x="152.4" y="4.5" width="4.0" height="4.5" fill="#a89cd8" fill-opacity="0.4"/><rect x="156.4" y="4.5" width="4.0" height="4.5" fill="#b4a8d8" fill-opacity="0.3"/><rect x="160.4" y="4.5" width="4.0" height="4.5" fill="#b4a8d8" fill-opacity="0.6"/><rect x="164.5" y="4.5" width="4.0" height="4.5" fill="#b4a8d8" fill-opacity="0.5"/><rect x="168.5" y="4.5" width="4.0" height="4.5" fill="#9c8cd0" fill-opacity="0.6"/><rect x="176.5" y="4.5" width="4.0" height="4.5" fill="#d4cce8" fill-opacity="0.5"/></svg>
<svg class="abs" style="left:675.5px;top:271.7px;filter:blur(0.6px)" width="124.0" height="11.0"><rect width="124.0" height="11.0" fill="#c8bce4" fill-opacity="0.38"/><rect x="0.0" y="0.0" width="4.0" height="3.7" fill="#a89cd8" fill-opacity="0.3"/><rect x="4.0" y="0.0" width="4.0" height="3.7" fill="#d4cce8" fill-opacity="0.3"/><rect x="8.0" y="0.0" width="4.0" height="3.7" fill="#a89cd8" fill-opacity="0.2"/><rect x="12.0" y="0.0" width="4.0" height="3.7" fill="#8c7cc8" fill-opacity="0.5"/><rect x="16.0" y="0.0" width="4.0" height="3.7" fill="#d4cce8" fill-opacity="0.2"/><rect x="20.0" y="0.0" width="4.0" height="3.7" fill="#8c7cc8" fill-opacity="0.6"/><rect x="24.0" y="0.0" width="4.0" height="3.7" fill="#9c8cd0" fill-opacity="0.4"/><rect x="28.0" y="0.0" width="4.0" height="3.7" fill="#b4a8d8" fill-opacity="0.6"/><rect x="32.0" y="0.0" width="4.0" height="3.7" fill="#d4cce8" fill-opacity="0.6"/><rect x="36.0" y="0.0" width="4.0" height="3.7" fill="#8c7cc8" fill-opacity="0.7"/><rect x="40.0" y="0.0" width="4.0" height="3.7" fill="#c8bce4" fill-opacity="0.5"/><rect x="44.0" y="0.0" width="4.0" height="3.7" fill="#b4a8d8" fill-opacity="0.2"/><rect x="48.0" y="0.0" width="4.0" height="3.7" fill="#a89cd8" fill-opacity="0.2"/><rect x="52.0" y="0.0" width="4.0" height="3.7" fill="#c8bce4" fill-opacity="0.7"/><rect x="56.0" y="0.0" width="4.0" height="3.7" fill="#d4cce8" fill-opacity="0.5"/><rect x="60.0" y="0.0" width="4.0" height="3.7" fill="#b4a8d8" fill-opacity="0.5"/><rect x="64.0" y="0.0" width="4.0" height="3.7" fill="#a89cd8" fill-opacity="0.3"/><rect x="68.0" y="0.0" width="4.0" height="3.7" fill="#9c8cd0" fill-opacity="0.3"/><rect x="72.0" y="0.0" width="4.0" height="3.7" fill="#8c7cc8" fill-opacity="0.2"/><rect x="80.0" y="0.0" width="4.0" height="3.7" fill="#9c8cd0" fill-opacity="0.3"/><rect x="84.0" y="0.0" width="4.0" height="3.7" fill="#b4a8d8" fill-opacity="0.2"/><rect x="88.0" y="0.0" width="4.0" height="3.7" fill="#a89cd8" fill-opacity="0.6"/><rect x="92.0" y="0.0" width="4.0" height="3.7" fill="#b4a8d8" fill-opacity="0.5"/><rect x="96.0" y="0.0" width="4.0" height="3.7" fill="#b4a8d8" fill-opacity="0.2"/><rect x="100.0" y="0.0" width="4.0" height="3.7" fill="#c8bce4" fill-opacity="0.3"/><rect x="104.0" y="0.0" width="4.0" height="3.7" fill="#d4cce8" fill-opacity="0.3"/><rect x="108.0" y="0.0" width="4.0" height="3.7" fill="#d4cce8" fill-opacity="0.7"/><rect x="112.0" y="0.0" width="4.0" height="3.7" fill="#8c7cc8" fill-opacity="0.4"/><rect x="116.0" y="0.0" width="4.0" height="3.7" fill="#c8bce4" fill-opacity="0.4"/><rect x="120.0" y="0.0" width="4.0" height="3.7" fill="#8c7cc8" fill-opacity="0.4"/><rect x="0.0" y="3.7" width="4.0" height="3.7" fill="#c8bce4" fill-opacity="0.2"/><rect x="4.0" y="3.7" width="4.0" height="3.7" fill="#d4cce8" fill-opacity="0.3"/><rect x="12.0" y="3.7" width="4.0" height="3.7" fill="#a89cd8" fill-opacity="0.4"/><rect x="16.0" y="3.7" width="4.0" height="3.7" fill="#d4cce8" fill-opacity="0.4"/><rect x="20.0" y="3.7" width="4.0" height="3.7" fill="#b4a8d8" fill-opacity="0.4"/><rect x="28.0" y="3.7" width="4.0" height="3.7" fill="#d4cce8" fill-opacity="0.3"/><rect x="32.0" y="3.7" width="4.0" height="3.7" fill="#c8bce4" fill-opacity="0.4"/><rect x="36.0" y="3.7" width="4.0" height="3.7" fill="#b4a8d8" fill-opacity="0.4"/><rect x="40.0" y="3.7" width="4.0" height="3.7" fill="#8c7cc8" fill-opacity="0.2"/><rect x="44.0" y="3.7" width="4.0" height="3.7" fill="#a89cd8" fill-opacity="0.7"/><rect x="48.0" y="3.7" width="4.0" height="3.7" fill="#d4cce8" fill-opacity="0.4"/><rect x="52.0" y="3.7" width="4.0" height="3.7" fill="#c8bce4" fill-opacity="0.2"/><rect x="56.0" y="3.7" width="4.0" height="3.7" fill="#8c7cc8" fill-opacity="0.4"/><rect x="60.0" y="3.7" width="4.0" height="3.7" fill="#a89cd8" fill-opacity="0.3"/><rect x="68.0" y="3.7" width="4.0" height="3.7" fill="#c8bce4" fill-opacity="0.7"/><rect x="72.0" y="3.7" width="4.0" height="3.7" fill="#8c7cc8" fill-opacity="0.7"/><rect x="76.0" y="3.7" width="4.0" height="3.7" fill="#d4cce8" fill-opacity="0.5"/><rect x="80.0" y="3.7" width="4.0" height="3.7" fill="#c8bce4" fill-opacity="0.4"/><rect x="84.0" y="3.7" width="4.0" height="3.7" fill="#c8bce4" fill-opacity="0.7"/><rect x="88.0" y="3.7" width="4.0" height="3.7" fill="#a89cd8" fill-opacity="0.2"/><rect x="92.0" y="3.7" width="4.0" height="3.7" fill="#8c7cc8" fill-opacity="0.6"/><rect x="96.0" y="3.7" width="4.0" height="3.7" fill="#8c7cc8" fill-opacity="0.6"/><rect x="100.0" y="3.7" width="4.0" height="3.7" fill="#b4a8d8" fill-opacity="0.4"/><rect x="104.0" y="3.7" width="4.0" height="3.7" fill="#c8bce4" fill-opacity="0.6"/><rect x="108.0" y="3.7" width="4.0" height="3.7" fill="#c8bce4" fill-opacity="0.5"/><rect x="112.0" y="3.7" width="4.0" height="3.7" fill="#a89cd8" fill-opacity="0.7"/><rect x="116.0" y="3.7" width="4.0" height="3.7" fill="#9c8cd0" fill-opacity="0.3"/><rect x="120.0" y="3.7" width="4.0" height="3.7" fill="#b4a8d8" fill-opacity="0.3"/><rect x="0.0" y="7.3" width="4.0" height="3.7" fill="#8c7cc8" fill-opacity="0.4"/><rect x="4.0" y="7.3" width="4.0" height="3.7" fill="#d4cce8" fill-opacity="0.6"/><rect x="8.0" y="7.3" width="4.0" height="3.7" fill="#c8bce4" fill-opacity="0.7"/><rect x="12.0" y="7.3" width="4.0" height="3.7" fill="#9c8cd0" fill-opacity="0.6"/><rect x="16.0" y="7.3" width="4.0" height="3.7" fill="#9c8cd0" fill-opacity="0.7"/><rect x="20.0" y="7.3" width="4.0" height="3.7" fill="#8c7cc8" fill-opacity="0.6"/><rect x="24.0" y="7.3" width="4.0" height="3.7" fill="#d4cce8" fill-opacity="0.4"/><rect x="28.0" y="7.3" width="4.0" height="3.7" fill="#c8bce4" fill-opacity="0.3"/><rect x="32.0" y="7.3" width="4.0" height="3.7" fill="#a89cd8" fill-opacity="0.6"/><rect x="36.0" y="7.3" width="4.0" height="3.7" fill="#b4a8d8" fill-opacity="0.4"/><rect x="40.0" y="7.3" width="4.0" height="3.7" fill="#d4cce8" fill-opacity="0.3"/><rect x="44.0" y="7.3" width="4.0" height="3.7" fill="#d4cce8" fill-opacity="0.6"/><rect x="48.0" y="7.3" width="4.0" height="3.7" fill="#8c7cc8" fill-opacity="0.5"/><rect x="52.0" y="7.3" width="4.0" height="3.7" fill="#c8bce4" fill-opacity="0.5"/><rect x="56.0" y="7.3" width="4.0" height="3.7" fill="#9c8cd0" fill-opacity="0.7"/><rect x="60.0" y="7.3" width="4.0" height="3.7" fill="#a89cd8" fill-opacity="0.4"/><rect x="64.0" y="7.3" width="4.0" height="3.7" fill="#8c7cc8" fill-opacity="0.3"/><rect x="68.0" y="7.3" width="4.0" height="3.7" fill="#a89cd8" fill-opacity="0.5"/><rect x="72.0" y="7.3" width="4.0" height="3.7" fill="#c8bce4" fill-opacity="0.6"/><rect x="76.0" y="7.3" width="4.0" height="3.7" fill="#9c8cd0" fill-opacity="0.3"/><rect x="84.0" y="7.3" width="4.0" height="3.7" fill="#b4a8d8" fill-opacity="0.4"/><rect x="88.0" y="7.3" width="4.0" height="3.7" fill="#8c7cc8" fill-opacity="0.5"/><rect x="92.0" y="7.3" width="4.0" height="3.7" fill="#a89cd8" fill-opacity="0.2"/><rect x="100.0" y="7.3" width="4.0" height="3.7" fill="#9c8cd0" fill-opacity="0.6"/><rect x="104.0" y="7.3" width="4.0" height="3.7" fill="#8c7cc8" fill-opacity="0.5"/><rect x="108.0" y="7.3" width="4.0" height="3.7" fill="#8c7cc8" fill-opacity="0.6"/><rect x="112.0" y="7.3" width="4.0" height="3.7" fill="#a89cd8" fill-opacity="0.7"/><rect x="116.0" y="7.3" width="4.0" height="3.7" fill="#d4cce8" fill-opacity="0.6"/><rect x="120.0" y="7.3" width="4.0" height="3.7" fill="#8c7cc8" fill-opacity="0.6"/></svg>
<div class="abs t" style="left:676px;top:289.5px;font-size:8.2px;color:#2b2bb0;text-decoration:underline;transform:scaleX(1.09);transform-origin:0 0;">売上速報_20181010</div>
<svg class="abs" style="left:675.5px;top:307px;filter:blur(0.6px)" width="180.5" height="11.0"><rect width="180.5" height="11.0" fill="#b4b4ec" fill-opacity="0.38"/><rect x="0.0" y="0.0" width="4.0" height="3.7" fill="#b4b4ec" fill-opacity="0.5"/><rect x="8.0" y="0.0" width="4.0" height="3.7" fill="#7070d0" fill-opacity="0.3"/><rect x="16.0" y="0.0" width="4.0" height="3.7" fill="#8484d8" fill-opacity="0.4"/><rect x="20.1" y="0.0" width="4.0" height="3.7" fill="#8484d8" fill-opacity="0.2"/><rect x="24.1" y="0.0" width="4.0" height="3.7" fill="#c4c4f0" fill-opacity="0.6"/><rect x="28.1" y="0.0" width="4.0" height="3.7" fill="#b4b4ec" fill-opacity="0.2"/><rect x="32.1" y="0.0" width="4.0" height="3.7" fill="#b4b4ec" fill-opacity="0.7"/><rect x="36.1" y="0.0" width="4.0" height="3.7" fill="#8484d8" fill-opacity="0.2"/><rect x="40.1" y="0.0" width="4.0" height="3.7" fill="#7070d0" fill-opacity="0.5"/><rect x="44.1" y="0.0" width="4.0" height="3.7" fill="#9c9ce4" fill-opacity="0.5"/><rect x="48.1" y="0.0" width="4.0" height="3.7" fill="#b4b4ec" fill-opacity="0.6"/><rect x="52.1" y="0.0" width="4.0" height="3.7" fill="#c4c4f0" fill-opacity="0.7"/><rect x="56.2" y="0.0" width="4.0" height="3.7" fill="#b4b4ec" fill-opacity="0.2"/><rect x="60.2" y="0.0" width="4.0" height="3.7" fill="#8484d8" fill-opacity="0.4"/><rect x="64.2" y="0.0" width="4.0" height="3.7" fill="#8484d8" fill-opacity="0.3"/><rect x="68.2" y="0.0" width="4.0" height="3.7" fill="#8484d8" fill-opacity="0.4"/><rect x="72.2" y="0.0" width="4.0" height="3.7" fill="#8484d8" fill-opacity="0.4"/><rect x="76.2" y="0.0" width="4.0" height="3.7" fill="#8484d8" fill-opacity="0.3"/><rect x="80.2" y="0.0" width="4.0" height="3.7" fill="#9c9ce4" fill-opacity="0.4"/><rect x="88.2" y="0.0" width="4.0" height="3.7" fill="#a8a8e8" fill-opacity="0.6"/><rect x="96.3" y="0.0" width="4.0" height="3.7" fill="#9c9ce4" fill-opacity="0.5"/><rect x="104.3" y="0.0" width="4.0" height="3.7" fill="#7070d0" fill-opacity="0.3"/><rect x="108.3" y="0.0" width="4.0" height="3.7" fill="#9c9ce4" fill-opacity="0.5"/><rect x="112.3" y="0.0" width="4.0" height="3.7" fill="#a8a8e8" fill-opacity="0.5"/><rect x="116.3" y="0.0" width="4.0" height="3.7" fill="#b4b4ec" fill-opacity="0.2"/><rect x="120.3" y="0.0" width="4.0" height="3.7" fill="#9c9ce4" fill-opacity="0.6"/><rect x="124.3" y="0.0" width="4.0" height="3.7" fill="#8484d8" fill-opacity="0.4"/><rect x="132.4" y="0.0" width="4.0" height="3.7" fill="#a8a8e8" fill-opacity="0.3"/><rect x="136.4" y="0.0" width="4.0" height="3.7" fill="#8484d8" fill-opacity="0.6"/><rect x="140.4" y="0.0" width="4.0" height="3.7" fill="#b4b4ec" fill-opacity="0.5"/><rect x="144.4" y="0.0" width="4.0" height="3.7" fill="#b4b4ec" fill-opacity="0.4"/><rect x="148.4" y="0.0" width="4.0" height="3.7" fill="#8484d8" fill-opacity="0.7"/><rect x="152.4" y="0.0" width="4.0" height="3.7" fill="#9c9ce4" fill-opacity="0.2"/><rect x="156.4" y="0.0" width="4.0" height="3.7" fill="#a8a8e8" fill-opacity="0.7"/><rect x="164.5" y="0.0" width="4.0" height="3.7" fill="#9c9ce4" fill-opacity="0.7"/><rect x="168.5" y="0.0" width="4.0" height="3.7" fill="#c4c4f0" fill-opacity="0.6"/><rect x="176.5" y="0.0" width="4.0" height="3.7" fill="#a8a8e8" fill-opacity="0.2"/><rect x="0.0" y="3.7" width="4.0" height="3.7" fill="#b4b4ec" fill-opacity="0.2"/><rect x="4.0" y="3.7" width="4.0" height="3.7" fill="#c4c4f0" fill-opacity="0.2"/><rect x="8.0" y="3.7" width="4.0" height="3.7" fill="#c4c4f0" fill-opacity="0.4"/><rect x="12.0" y="3.7" width="4.0" height="3.7" fill="#8484d8" fill-opacity="0.2"/><rect x="16.0" y="3.7" width="4.0" height="3.7" fill="#7070d0" fill-opacity="0.4"/><rect x="20.1" y="3.7" width="4.0" height="3.7" fill="#a8a8e8" fill-opacity="0.2"/><rect x="24.1" y="3.7" width="4.0" height="3.7" fill="#8484d8" fill-opacity="0.2"/><rect x="28.1" y="3.7" width="4.0" height="3.7" fill="#b4b4ec" fill-opacity="0.7"/><rect x="32.1" y="3.7" width="4.0" height="3.7" fill="#8484d8" fill-opacity="0.2"/><rect x="36.1" y="3.7" width="4.0" height="3.7" fill="#a8a8e8" fill-opacity="0.4"/><rect x="40.1" y="3.7" width="4.0" height="3.7" fill="#9c9ce4" fill-opacity="0.5"/><rect x="44.1" y="3.7" width="4.0" height="3.7" fill="#c4c4f0" fill-opacity="0.7"/><rect x="52.1" y="3.7" width="4.0" height="3.7" fill="#c4c4f0" fill-opacity="0.7"/><rect x="56.2" y="3.7" width="4.0" height="3.7" fill="#9c9ce4" fill-opacity="0.6"/><rect x="60.2" y="3.7" width="4.0" height="3.7" fill="#a8a8e8" fill-opacity="0.3"/><rect x="64.2" y="3.7" width="4.0" height="3.7" fill="#8484d8" fill-opacity="0.4"/><rect x="68.2" y="3.7" width="4.0" height="3.7" fill="#8484d8" fill-opacity="0.7"/><rect x="72.2" y="3.7" width="4.0" height="3.7" fill="#a8a8e8" fill-opacity="0.2"/><rect x="76.2" y="3.7" width="4.0" height="3.7" fill="#a8a8e8" fill-opacity="0.6"/><rect x="80.2" y="3.7" width="4.0" height="3.7" fill="#b4b4ec" fill-opacity="0.5"/><rect x="84.2" y="3.7" width="4.0" height="3.7" fill="#7070d0" fill-opacity="0.7"/><rect x="88.2" y="3.7" width="4.0" height="3.7" fill="#b4b4ec" fill-opacity="0.5"/><rect x="92.3" y="3.7" width="4.0" height="3.7" fill="#9c9ce4" fill-opacity="0.3"/><rect x="100.3" y="3.7" width="4.0" height="3.7" fill="#a8a8e8" fill-opacity="0.2"/><rect x="104.3" y="3.7" width="4.0" height="3.7" fill="#8484d8" fill-opacity="0.5"/><rect x="108.3" y="3.7" width="4.0" height="3.7" fill="#a8a8e8" fill-opacity="0.3"/><rect x="112.3" y="3.7" width="4.0" height="3.7" fill="#7070d0" fill-opacity="0.4"/><rect x="116.3" y="3.7" width="4.0" height="3.7" fill="#a8a8e8" fill-opacity="0.2"/><rect x="120.3" y="3.7" width="4.0" height="3.7" fill="#7070d0" fill-opacity="0.5"/><rect x="124.3" y="3.7" width="4.0" height="3.7" fill="#a8a8e8" fill-opacity="0.2"/><rect x="128.4" y="3.7" width="4.0" height="3.7" fill="#7070d0" fill-opacity="0.5"/><rect x="132.4" y="3.7" width="4.0" height="3.7" fill="#9c9ce4" fill-opacity="0.5"/><rect x="140.4" y="3.7" width="4.0" height="3.7" fill="#c4c4f0" fill-opacity="0.6"/><rect x="144.4" y="3.7" width="4.0" height="3.7" fill="#b4b4ec" fill-opacity="0.7"/><rect x="148.4" y="3.7" width="4.0" height="3.7" fill="#c4c4f0" fill-opacity="0.6"/><rect x="152.4" y="3.7" width="4.0" height="3.7" fill="#7070d0" fill-opacity="0.2"/><rect x="156.4" y="3.7" width="4.0" height="3.7" fill="#8484d8" fill-opacity="0.2"/><rect x="160.4" y="3.7" width="4.0" height="3.7" fill="#b4b4ec" fill-opacity="0.4"/><rect x="164.5" y="3.7" width="4.0" height="3.7" fill="#b4b4ec" fill-opacity="0.4"/><rect x="168.5" y="3.7" width="4.0" height="3.7" fill="#7070d0" fill-opacity="0.7"/><rect x="172.5" y="3.7" width="4.0" height="3.7" fill="#9c9ce4" fill-opacity="0.7"/><rect x="176.5" y="3.7" width="4.0" height="3.7" fill="#b4b4ec" fill-opacity="0.4"/><rect x="0.0" y="7.3" width="4.0" height="3.7" fill="#a8a8e8" fill-opacity="0.6"/><rect x="4.0" y="7.3" width="4.0" height="3.7" fill="#9c9ce4" fill-opacity="0.3"/><rect x="8.0" y="7.3" width="4.0" height="3.7" fill="#7070d0" fill-opacity="0.7"/><rect x="12.0" y="7.3" width="4.0" height="3.7" fill="#9c9ce4" fill-opacity="0.6"/><rect x="16.0" y="7.3" width="4.0" height="3.7" fill="#8484d8" fill-opacity="0.5"/><rect x="20.1" y="7.3" width="4.0" height="3.7" fill="#9c9ce4" fill-opacity="0.2"/><rect x="28.1" y="7.3" width="4.0" height="3.7" fill="#8484d8" fill-opacity="0.3"/><rect x="32.1" y="7.3" width="4.0" height="3.7" fill="#7070d0" fill-opacity="0.4"/><rect x="36.1" y="7.3" width="4.0" height="3.7" fill="#c4c4f0" fill-opacity="0.2"/><rect x="40.1" y="7.3" width="4.0" height="3.7" fill="#b4b4ec" fill-opacity="0.2"/><rect x="48.1" y="7.3" width="4.0" height="3.7" fill="#a8a8e8" fill-opacity="0.4"/><rect x="52.1" y="7.3" width="4.0" height="3.7" fill="#8484d8" fill-opacity="0.5"/><rect x="56.2" y="7.3" width="4.0" height="3.7" fill="#8484d8" fill-opacity="0.7"/><rect x="60.2" y="7.3" width="4.0" height="3.7" fill="#8484d8" fill-opacity="0.7"/><rect x="64.2" y="7.3" width="4.0" height="3.7" fill="#c4c4f0" fill-opacity="0.7"/><rect x="68.2" y="7.3" width="4.0" height="3.7" fill="#9c9ce4" fill-opacity="0.2"/><rect x="72.2" y="7.3" width="4.0" height="3.7" fill="#a8a8e8" fill-opacity="0.6"/><rect x="76.2" y="7.3" width="4.0" height="3.7" fill="#c4c4f0" fill-opacity="0.7"/><rect x="80.2" y="7.3" width="4.0" height="3.7" fill="#c4c4f0" fill-opacity="0.4"/><rect x="84.2" y="7.3" width="4.0" height="3.7" fill="#7070d0" fill-opacity="0.5"/><rect x="88.2" y="7.3" width="4.0" height="3.7" fill="#7070d0" fill-opacity="0.3"/><rect x="92.3" y="7.3" width="4.0" height="3.7" fill="#7070d0" fill-opacity="0.5"/><rect x="96.3" y="7.3" width="4.0" height="3.7" fill="#8484d8" fill-opacity="0.6"/><rect x="100.3" y="7.3" width="4.0" height="3.7" fill="#c4c4f0" fill-opacity="0.4"/><rect x="104.3" y="7.3" width="4.0" height="3.7" fill="#9c9ce4" fill-opacity="0.4"/><rect x="108.3" y="7.3" width="4.0" height="3.7" fill="#b4b4ec" fill-opacity="0.2"/><rect x="112.3" y="7.3" width="4.0" height="3.7" fill="#7070d0" fill-opacity="0.2"/><rect x="116.3" y="7.3" width="4.0" height="3.7" fill="#a8a8e8" fill-opacity="0.2"/><rect x="120.3" y="7.3" width="4.0" height="3.7" fill="#9c9ce4" fill-opacity="0.5"/><rect x="124.3" y="7.3" width="4.0" height="3.7" fill="#7070d0" fill-opacity="0.5"/><rect x="128.4" y="7.3" width="4.0" height="3.7" fill="#b4b4ec" fill-opacity="0.7"/><rect x="132.4" y="7.3" width="4.0" height="3.7" fill="#7070d0" fill-opacity="0.7"/><rect x="136.4" y="7.3" width="4.0" height="3.7" fill="#b4b4ec" fill-opacity="0.6"/><rect x="140.4" y="7.3" width="4.0" height="3.7" fill="#a8a8e8" fill-opacity="0.2"/><rect x="144.4" y="7.3" width="4.0" height="3.7" fill="#b4b4ec" fill-opacity="0.7"/><rect x="152.4" y="7.3" width="4.0" height="3.7" fill="#8484d8" fill-opacity="0.7"/><rect x="156.4" y="7.3" width="4.0" height="3.7" fill="#8484d8" fill-opacity="0.5"/><rect x="160.4" y="7.3" width="4.0" height="3.7" fill="#8484d8" fill-opacity="0.7"/><rect x="164.5" y="7.3" width="4.0" height="3.7" fill="#8484d8" fill-opacity="0.2"/><rect x="168.5" y="7.3" width="4.0" height="3.7" fill="#8484d8" fill-opacity="0.7"/><rect x="172.5" y="7.3" width="4.0" height="3.7" fill="#7070d0" fill-opacity="0.4"/><rect x="176.5" y="7.3" width="4.0" height="3.7" fill="#b4b4ec" fill-opacity="0.7"/></svg>
<svg class="abs" style="left:675.5px;top:321px;filter:blur(0.6px)" width="105.5" height="8.6"><rect width="105.5" height="8.6" fill="#b4b4ec" fill-opacity="0.38"/><rect x="0.0" y="0.0" width="4.1" height="4.3" fill="#b4b4ec" fill-opacity="0.2"/><rect x="4.1" y="0.0" width="4.1" height="4.3" fill="#c4c4f0" fill-opacity="0.4"/><rect x="8.1" y="0.0" width="4.1" height="4.3" fill="#8484d8" fill-opacity="0.7"/><rect x="12.2" y="0.0" width="4.1" height="4.3" fill="#b4b4ec" fill-opacity="0.3"/><rect x="16.2" y="0.0" width="4.1" height="4.3" fill="#a8a8e8" fill-opacity="0.5"/><rect x="20.3" y="0.0" width="4.1" height="4.3" fill="#8484d8" fill-opacity="0.2"/><rect x="24.3" y="0.0" width="4.1" height="4.3" fill="#9c9ce4" fill-opacity="0.5"/><rect x="28.4" y="0.0" width="4.1" height="4.3" fill="#8484d8" fill-opacity="0.7"/><rect x="32.5" y="0.0" width="4.1" height="4.3" fill="#a8a8e8" fill-opacity="0.4"/><rect x="36.5" y="0.0" width="4.1" height="4.3" fill="#9c9ce4" fill-opacity="0.7"/><rect x="40.6" y="0.0" width="4.1" height="4.3" fill="#b4b4ec" fill-opacity="0.3"/><rect x="44.6" y="0.0" width="4.1" height="4.3" fill="#9c9ce4" fill-opacity="0.6"/><rect x="48.7" y="0.0" width="4.1" height="4.3" fill="#b4b4ec" fill-opacity="0.6"/><rect x="52.8" y="0.0" width="4.1" height="4.3" fill="#c4c4f0" fill-opacity="0.4"/><rect x="56.8" y="0.0" width="4.1" height="4.3" fill="#8484d8" fill-opacity="0.7"/><rect x="60.9" y="0.0" width="4.1" height="4.3" fill="#b4b4ec" fill-opacity="0.3"/><rect x="64.9" y="0.0" width="4.1" height="4.3" fill="#b4b4ec" fill-opacity="0.5"/><rect x="69.0" y="0.0" width="4.1" height="4.3" fill="#7070d0" fill-opacity="0.4"/><rect x="73.0" y="0.0" width="4.1" height="4.3" fill="#b4b4ec" fill-opacity="0.3"/><rect x="77.1" y="0.0" width="4.1" height="4.3" fill="#9c9ce4" fill-opacity="0.5"/><rect x="81.2" y="0.0" width="4.1" height="4.3" fill="#b4b4ec" fill-opacity="0.3"/><rect x="85.2" y="0.0" width="4.1" height="4.3" fill="#9c9ce4" fill-opacity="0.5"/><rect x="89.3" y="0.0" width="4.1" height="4.3" fill="#a8a8e8" fill-opacity="0.6"/><rect x="93.3" y="0.0" width="4.1" height="4.3" fill="#c4c4f0" fill-opacity="0.6"/><rect x="97.4" y="0.0" width="4.1" height="4.3" fill="#7070d0" fill-opacity="0.4"/><rect x="101.4" y="0.0" width="4.1" height="4.3" fill="#7070d0" fill-opacity="0.4"/><rect x="0.0" y="4.3" width="4.1" height="4.3" fill="#9c9ce4" fill-opacity="0.2"/><rect x="4.1" y="4.3" width="4.1" height="4.3" fill="#a8a8e8" fill-opacity="0.7"/><rect x="8.1" y="4.3" width="4.1" height="4.3" fill="#7070d0" fill-opacity="0.6"/><rect x="12.2" y="4.3" width="4.1" height="4.3" fill="#b4b4ec" fill-opacity="0.2"/><rect x="16.2" y="4.3" width="4.1" height="4.3" fill="#b4b4ec" fill-opacity="0.5"/><rect x="20.3" y="4.3" width="4.1" height="4.3" fill="#8484d8" fill-opacity="0.6"/><rect x="24.3" y="4.3" width="4.1" height="4.3" fill="#7070d0" fill-opacity="0.6"/><rect x="28.4" y="4.3" width="4.1" height="4.3" fill="#b4b4ec" fill-opacity="0.5"/><rect x="32.5" y="4.3" width="4.1" height="4.3" fill="#8484d8" fill-opacity="0.3"/><rect x="36.5" y="4.3" width="4.1" height="4.3" fill="#a8a8e8" fill-opacity="0.4"/><rect x="40.6" y="4.3" width="4.1" height="4.3" fill="#a8a8e8" fill-opacity="0.3"/><rect x="44.6" y="4.3" width="4.1" height="4.3" fill="#a8a8e8" fill-opacity="0.4"/><rect x="48.7" y="4.3" width="4.1" height="4.3" fill="#7070d0" fill-opacity="0.5"/><rect x="52.8" y="4.3" width="4.1" height="4.3" fill="#8484d8" fill-opacity="0.2"/><rect x="56.8" y="4.3" width="4.1" height="4.3" fill="#a8a8e8" fill-opacity="0.6"/><rect x="64.9" y="4.3" width="4.1" height="4.3" fill="#a8a8e8" fill-opacity="0.3"/><rect x="69.0" y="4.3" width="4.1" height="4.3" fill="#9c9ce4" fill-opacity="0.7"/><rect x="73.0" y="4.3" width="4.1" height="4.3" fill="#9c9ce4" fill-opacity="0.2"/><rect x="77.1" y="4.3" width="4.1" height="4.3" fill="#7070d0" fill-opacity="0.6"/><rect x="81.2" y="4.3" width="4.1" height="4.3" fill="#7070d0" fill-opacity="0.4"/><rect x="85.2" y="4.3" width="4.1" height="4.3" fill="#b4b4ec" fill-opacity="0.7"/><rect x="89.3" y="4.3" width="4.1" height="4.3" fill="#b4b4ec" fill-opacity="0.5"/><rect x="93.3" y="4.3" width="4.1" height="4.3" fill="#a8a8e8" fill-opacity="0.3"/><rect x="101.4" y="4.3" width="4.1" height="4.3" fill="#a8a8e8" fill-opacity="0.7"/></svg>
<div class="abs t" style="left:676px;top:336px;font-size:8.2px;color:#2b2bb0;text-decoration:underline;transform:scaleX(1.026);transform-origin:0 0;">19時以降勤務決裁伺書(　　2018　年　10 月 10</div>
<div class="abs t" style="left:676px;top:347.5px;font-size:8.2px;color:#2b2bb0;text-decoration:underline;transform:scaleX(1.16);transform-origin:0 0;">日分)[20181010001310]</div>
<div class="abs t" style="left:676px;top:364.5px;font-size:8.2px;color:#2b2bb0;text-decoration:underline;transform:scaleX(1.05);transform-origin:0 0;">19時以降勤務決裁伺書(  2018年　10月　10日</div>
<div class="abs t" style="left:676px;top:376px;font-size:8.2px;color:#2b2bb0;text-decoration:underline;transform:scaleX(1.135);transform-origin:0 0;">分）[20181010001309]</div>
<div class="abs t" style="left:891px;top:393px;font-size:8.2px;color:#6a3c80;text-decoration:underline;letter-spacing:0.3px">more...</div>
<div class="abs" style="left:24.8px;top:441px;width:315.5px;height:31.7px;border:1px solid;border-color:#b0b0b0 #6a6a6a #6a6a6a #b0b0b0;background:#fff"></div>
<div class="abs" style="left:25.8px;top:442px;width:105.5px;height:14.5px;border:1px solid;border-color:#6a6a6a #c8c8c8 #c8c8c8 #6a6a6a"></div>
<div class="abs" style="left:132.2px;top:442px;width:76px;height:14.5px;border:1px solid;border-color:#6a6a6a #c8c8c8 #c8c8c8 #6a6a6a"></div>
<div class="abs" style="left:209.5px;top:442px;width:130px;height:14.5px;border:1px solid;border-color:#6a6a6a #c8c8c8 #c8c8c8 #6a6a6a"></div>
<div class="abs" style="left:25.8px;top:457px;width:105.5px;height:14.5px;border:1px solid;border-color:#6a6a6a #c8c8c8 #c8c8c8 #6a6a6a"></div>
<div class="abs" style="left:132.2px;top:457px;width:76px;height:14.5px;border:1px solid;border-color:#6a6a6a #c8c8c8 #c8c8c8 #6a6a6a"></div>
<div class="abs" style="left:209.5px;top:457px;width:130px;height:14.5px;border:1px solid;border-color:#6a6a6a #c8c8c8 #c8c8c8 #6a6a6a"></div>
<div class="abs t" style="left:27px;top:444px;font-size:8.2px;color:#444;">問合せ先</div>
<div class="abs t" style="left:134px;top:444px;font-size:8.2px;color:#444;">電話番号</div>
<div class="abs t" style="left:211px;top:444px;font-size:8.2px;color:#444;">対応時間</div>
<div class="abs t" style="left:27px;top:459px;font-size:8.2px;color:#3c3c3c;transform:scaleX(1.03);transform-origin:0 0;">POSレジヘルプデスク</div>
<svg class="abs" style="left:134px;top:460px;filter:blur(0.6px)" width="60.0" height="8.0"><rect width="60.0" height="8.0" fill="#c0c0c0" fill-opacity="0.38"/><rect x="3.5" y="0.0" width="3.5" height="4.0" fill="#c0c0c0" fill-opacity="0.3"/><rect x="10.6" y="0.0" width="3.5" height="4.0" fill="#a8a8a8" fill-opacity="0.2"/><rect x="14.1" y="0.0" width="3.5" height="4.0" fill="#d0d0d0" fill-opacity="0.6"/><rect x="17.6" y="0.0" width="3.5" height="4.0" fill="#c0c0c0" fill-opacity="0.5"/><rect x="21.2" y="0.0" width="3.5" height="4.0" fill="#d0d0d0" fill-opacity="0.7"/><rect x="24.7" y="0.0" width="3.5" height="4.0" fill="#c0c0c0" fill-opacity="0.2"/><rect x="28.2" y="0.0" width="3.5" height="4.0" fill="#d0d0d0" fill-opacity="0.3"/><rect x="31.8" y="0.0" width="3.5" height="4.0" fill="#909090" fill-opacity="0.6"/><rect x="35.3" y="0.0" width="3.5" height="4.0" fill="#909090" fill-opacity="0.7"/><rect x="38.8" y="0.0" width="3.5" height="4.0" fill="#b8b8b8" fill-opacity="0.6"/><rect x="42.4" y="0.0" width="3.5" height="4.0" fill="#909090" fill-opacity="0.7"/><rect x="45.9" y="0.0" width="3.5" height="4.0" fill="#909090" fill-opacity="0.3"/><rect x="49.4" y="0.0" width="3.5" height="4.0" fill="#d0d0d0" fill-opacity="0.7"/><rect x="52.9" y="0.0" width="3.5" height="4.0" fill="#909090" fill-opacity="0.6"/><rect x="56.5" y="0.0" width="3.5" height="4.0" fill="#d0d0d0" fill-opacity="0.3"/><rect x="0.0" y="4.0" width="3.5" height="4.0" fill="#c0c0c0" fill-opacity="0.7"/><rect x="3.5" y="4.0" width="3.5" height="4.0" fill="#a8a8a8" fill-opacity="0.6"/><rect x="7.1" y="4.0" width="3.5" height="4.0" fill="#c0c0c0" fill-opacity="0.4"/><rect x="10.6" y="4.0" width="3.5" height="4.0" fill="#909090" fill-opacity="0.6"/><rect x="14.1" y="4.0" width="3.5" height="4.0" fill="#c0c0c0" fill-opacity="0.7"/><rect x="17.6" y="4.0" width="3.5" height="4.0" fill="#909090" fill-opacity="0.2"/><rect x="21.2" y="4.0" width="3.5" height="4.0" fill="#a8a8a8" fill-opacity="0.6"/><rect x="24.7" y="4.0" width="3.5" height="4.0" fill="#d0d0d0" fill-opacity="0.2"/><rect x="28.2" y="4.0" width="3.5" height="4.0" fill="#d0d0d0" fill-opacity="0.7"/><rect x="35.3" y="4.0" width="3.5" height="4.0" fill="#c0c0c0" fill-opacity="0.3"/><rect x="38.8" y="4.0" width="3.5" height="4.0" fill="#a8a8a8" fill-opacity="0.2"/><rect x="42.4" y="4.0" width="3.5" height="4.0" fill="#c0c0c0" fill-opacity="0.5"/><rect x="45.9" y="4.0" width="3.5" height="4.0" fill="#a8a8a8" fill-opacity="0.2"/><rect x="49.4" y="4.0" width="3.5" height="4.0" fill="#a8a8a8" fill-opacity="0.7"/><rect x="52.9" y="4.0" width="3.5" height="4.0" fill="#d0d0d0" fill-opacity="0.7"/><rect x="56.5" y="4.0" width="3.5" height="4.0" fill="#a8a8a8" fill-opacity="0.3"/></svg>
<div class="abs t" style="left:211px;top:459px;font-size:8.2px;color:#3c3c3c;transform:scaleX(1.06);transform-origin:0 0;">9:00〜22:00（年中無休）</div>
<div class="abs t" style="left:477px;top:442.5px;width:450px;text-align:center;font-size:8.2px;color:#3c3c3c;transform:scaleX(1.058)">新着回覧・レポートはありません。</div>
<div class="abs" style="left:24.2px;top:508.7px;width:437px;height:19px;border:1px solid #c4c4c4;background:#fff"></div>
<div class="abs tn" style="left:29px;top:512px;font-size:7.7px;color:#555;letter-spacing:0.3px">10/01 17:11</div>
<div class="abs t" style="left:84.7px;top:512.5px;font-size:8.2px;color:#3c3c3c;transform:scaleX(1.064);transform-origin:0 0;"><span style="text-decoration:underline;color:#2b2bb0">ワッツニュースに関するアンケート</span>(10/20締切)</div>
<svg class="abs" style="left:271.5px;top:513.5px;filter:blur(0.6px)" width="16.0" height="8.0"><rect width="16.0" height="8.0" fill="#c0c0c0" fill-opacity="0.38"/><rect x="0.0" y="0.0" width="3.2" height="4.0" fill="#c0c0c0" fill-opacity="0.5"/><rect x="3.2" y="0.0" width="3.2" height="4.0" fill="#a8a8a8" fill-opacity="0.5"/><rect x="6.4" y="0.0" width="3.2" height="4.0" fill="#a8a8a8" fill-opacity="0.4"/><rect x="9.6" y="0.0" width="3.2" height="4.0" fill="#c0c0c0" fill-opacity="0.6"/><rect x="12.8" y="0.0" width="3.2" height="4.0" fill="#c0c0c0" fill-opacity="0.2"/><rect x="0.0" y="4.0" width="3.2" height="4.0" fill="#a8a8a8" fill-opacity="0.3"/><rect x="3.2" y="4.0" width="3.2" height="4.0" fill="#b8b8b8" fill-opacity="0.7"/><rect x="6.4" y="4.0" width="3.2" height="4.0" fill="#909090" fill-opacity="0.6"/><rect x="9.6" y="4.0" width="3.2" height="4.0" fill="#b8b8b8" fill-opacity="0.3"/><rect x="12.8" y="4.0" width="3.2" height="4.0" fill="#d0d0d0" fill-opacity="0.7"/></svg>
<svg class="abs" style="left:292px;top:513.5px;filter:blur(0.6px)" width="14.0" height="8.0"><rect width="14.0" height="8.0" fill="#c0c0c0" fill-opacity="0.38"/><rect x="0.0" y="0.0" width="3.5" height="4.0" fill="#909090" fill-opacity="0.4"/><rect x="3.5" y="0.0" width="3.5" height="4.0" fill="#d0d0d0" fill-opacity="0.4"/><rect x="7.0" y="0.0" width="3.5" height="4.0" fill="#d0d0d0" fill-opacity="0.7"/><rect x="10.5" y="0.0" width="3.5" height="4.0" fill="#a8a8a8" fill-opacity="0.3"/><rect x="0.0" y="4.0" width="3.5" height="4.0" fill="#909090" fill-opacity="0.6"/><rect x="3.5" y="4.0" width="3.5" height="4.0" fill="#c0c0c0" fill-opacity="0.6"/><rect x="7.0" y="4.0" width="3.5" height="4.0" fill="#a8a8a8" fill-opacity="0.7"/><rect x="10.5" y="4.0" width="3.5" height="4.0" fill="#a8a8a8" fill-opacity="0.4"/></svg>
<svg class="abs" style="left:311px;top:513.5px;filter:blur(0.6px)" width="80.0" height="8.0"><rect width="80.0" height="8.0" fill="#c0c0c0" fill-opacity="0.38"/><rect x="0.0" y="0.0" width="3.5" height="4.0" fill="#d0d0d0" fill-opacity="0.5"/><rect x="3.5" y="0.0" width="3.5" height="4.0" fill="#b8b8b8" fill-opacity="0.2"/><rect x="7.0" y="0.0" width="3.5" height="4.0" fill="#d0d0d0" fill-opacity="0.5"/><rect x="10.4" y="0.0" width="3.5" height="4.0" fill="#d0d0d0" fill-opacity="0.3"/><rect x="13.9" y="0.0" width="3.5" height="4.0" fill="#d0d0d0" fill-opacity="0.4"/><rect x="17.4" y="0.0" width="3.5" height="4.0" fill="#b8b8b8" fill-opacity="0.3"/><rect x="20.9" y="0.0" width="3.5" height="4.0" fill="#909090" fill-opacity="0.2"/><rect x="24.3" y="0.0" width="3.5" height="4.0" fill="#c0c0c0" fill-opacity="0.7"/><rect x="27.8" y="0.0" width="3.5" height="4.0" fill="#909090" fill-opacity="0.7"/><rect x="31.3" y="0.0" width="3.5" height="4.0" fill="#909090" fill-opacity="0.5"/><rect x="34.8" y="0.0" width="3.5" height="4.0" fill="#c0c0c0" fill-opacity="0.7"/><rect x="38.3" y="0.0" width="3.5" height="4.0" fill="#b8b8b8" fill-opacity="0.4"/><rect x="41.7" y="0.0" width="3.5" height="4.0" fill="#c0c0c0" fill-opacity="0.6"/><rect x="45.2" y="0.0" width="3.5" height="4.0" fill="#c0c0c0" fill-opacity="0.2"/><rect x="48.7" y="0.0" width="3.5" height="4.0" fill="#c0c0c0" fill-opacity="0.5"/><rect x="52.2" y="0.0" width="3.5" height="4.0" fill="#a8a8a8" fill-opacity="0.3"/><rect x="55.7" y="0.0" width="3.5" height="4.0" fill="#d0d0d0" fill-opacity="0.2"/><rect x="59.1" y="0.0" width="3.5" height="4.0" fill="#909090" fill-opacity="0.4"/><rect x="62.6" y="0.0" width="3.5" height="4.0" fill="#b8b8b8" fill-opacity="0.5"/><rect x="66.1" y="0.0" width="3.5" height="4.0" fill="#a8a8a8" fill-opacity="0.3"/><rect x="69.6" y="0.0" width="3.5" height="4.0" fill="#d0d0d0" fill-opacity="0.6"/><rect x="73.0" y="0.0" width="3.5" height="4.0" fill="#d0d0d0" fill-opacity="0.6"/><rect x="76.5" y="0.0" width="3.5" height="4.0" fill="#b8b8b8" fill-opacity="0.2"/><rect x="0.0" y="4.0" width="3.5" height="4.0" fill="#909090" fill-opacity="0.4"/><rect x="3.5" y="4.0" width="3.5" height="4.0" fill="#b8b8b8" fill-opacity="0.4"/><rect x="7.0" y="4.0" width="3.5" height="4.0" fill="#d0d0d0" fill-opacity="0.3"/><rect x="10.4" y="4.0" width="3.5" height="4.0" fill="#a8a8a8" fill-opacity="0.5"/><rect x="13.9" y="4.0" width="3.5" height="4.0" fill="#c0c0c0" fill-opacity="0.3"/><rect x="17.4" y="4.0" width="3.5" height="4.0" fill="#909090" fill-opacity="0.3"/><rect x="20.9" y="4.0" width="3.5" height="4.0" fill="#d0d0d0" fill-opacity="0.2"/><rect x="24.3" y="4.0" width="3.5" height="4.0" fill="#a8a8a8" fill-opacity="0.3"/><rect x="27.8" y="4.0" width="3.5" height="4.0" fill="#909090" fill-opacity="0.5"/><rect x="31.3" y="4.0" width="3.5" height="4.0" fill="#a8a8a8" fill-opacity="0.6"/><rect x="34.8" y="4.0" width="3.5" height="4.0" fill="#a8a8a8" fill-opacity="0.6"/><rect x="38.3" y="4.0" width="3.5" height="4.0" fill="#d0d0d0" fill-opacity="0.4"/><rect x="41.7" y="4.0" width="3.5" height="4.0" fill="#909090" fill-opacity="0.4"/><rect x="45.2" y="4.0" width="3.5" height="4.0" fill="#b8b8b8" fill-opacity="0.2"/><rect x="48.7" y="4.0" width="3.5" height="4.0" fill="#b8b8b8" fill-opacity="0.4"/><rect x="52.2" y="4.0" width="3.5" height="4.0" fill="#909090" fill-opacity="0.7"/><rect x="55.7" y="4.0" width="3.5" height="4.0" fill="#d0d0d0" fill-opacity="0.4"/><rect x="59.1" y="4.0" width="3.5" height="4.0" fill="#d0d0d0" fill-opacity="0.7"/><rect x="62.6" y="4.0" width="3.5" height="4.0" fill="#a8a8a8" fill-opacity="0.2"/><rect x="66.1" y="4.0" width="3.5" height="4.0" fill="#d0d0d0" fill-opacity="0.6"/><rect x="69.6" y="4.0" width="3.5" height="4.0" fill="#d0d0d0" fill-opacity="0.3"/><rect x="73.0" y="4.0" width="3.5" height="4.0" fill="#d0d0d0" fill-opacity="0.4"/><rect x="76.5" y="4.0" width="3.5" height="4.0" fill="#a8a8a8" fill-opacity="0.6"/></svg>
<div class="abs" style="left:484.2px;top:508.8px;width:435.8px;height:55.6px;border:1px solid #c4c4c4;background:#fff"></div>
<div class="abs" style="left:485.2px;top:509.8px;width:433.8px;height:17.19999999999999px;background:#fff;border-bottom:1px solid #c8c8c8;"></div>
<div class="abs" style="left:485.2px;top:527px;width:433.8px;height:18.600000000000023px;background:#ededed;border-bottom:1px solid #c8c8c8;"></div>
<div class="abs" style="left:485.2px;top:545.6px;width:433.8px;height:17.799999999999955px;background:#fff;"></div>
<div class="abs tn" style="left:488px;top:512.4px;font-size:7.9px;color:#555;letter-spacing:0.3px">06/18 08:29</div>
<svg class="abs" style="left:734px;top:513.4px;filter:blur(0.6px)" width="16.5" height="8.0"><rect width="16.5" height="8.0" fill="#c0c0c0" fill-opacity="0.38"/><rect x="0.0" y="0.0" width="3.3" height="4.0" fill="#d0d0d0" fill-opacity="0.5"/><rect x="3.3" y="0.0" width="3.3" height="4.0" fill="#909090" fill-opacity="0.5"/><rect x="6.6" y="0.0" width="3.3" height="4.0" fill="#d0d0d0" fill-opacity="0.2"/><rect x="9.9" y="0.0" width="3.3" height="4.0" fill="#a8a8a8" fill-opacity="0.5"/><rect x="13.2" y="0.0" width="3.3" height="4.0" fill="#d0d0d0" fill-opacity="0.2"/><rect x="0.0" y="4.0" width="3.3" height="4.0" fill="#b8b8b8" fill-opacity="0.4"/><rect x="3.3" y="4.0" width="3.3" height="4.0" fill="#c0c0c0" fill-opacity="0.6"/><rect x="6.6" y="4.0" width="3.3" height="4.0" fill="#a8a8a8" fill-opacity="0.5"/><rect x="9.9" y="4.0" width="3.3" height="4.0" fill="#b8b8b8" fill-opacity="0.2"/><rect x="13.2" y="4.0" width="3.3" height="4.0" fill="#a8a8a8" fill-opacity="0.7"/></svg>
<svg class="abs" style="left:758.6px;top:513.4px;filter:blur(0.6px)" width="18.0" height="8.0"><rect width="18.0" height="8.0" fill="#c0c0c0" fill-opacity="0.38"/><rect x="0.0" y="0.0" width="3.6" height="4.0" fill="#909090" fill-opacity="0.3"/><rect x="3.6" y="0.0" width="3.6" height="4.0" fill="#c0c0c0" fill-opacity="0.7"/><rect x="7.2" y="0.0" width="3.6" height="4.0" fill="#909090" fill-opacity="0.2"/><rect x="10.8" y="0.0" width="3.6" height="4.0" fill="#909090" fill-opacity="0.5"/><rect x="14.4" y="0.0" width="3.6" height="4.0" fill="#d0d0d0" fill-opacity="0.6"/><rect x="0.0" y="4.0" width="3.6" height="4.0" fill="#c0c0c0" fill-opacity="0.7"/><rect x="3.6" y="4.0" width="3.6" height="4.0" fill="#b8b8b8" fill-opacity="0.3"/><rect x="7.2" y="4.0" width="3.6" height="4.0" fill="#a8a8a8" fill-opacity="0.3"/><rect x="10.8" y="4.0" width="3.6" height="4.0" fill="#d0d0d0" fill-opacity="0.5"/><rect x="14.4" y="4.0" width="3.6" height="4.0" fill="#c0c0c0" fill-opacity="0.4"/></svg>
<div class="abs tn" style="left:488px;top:530.8px;font-size:7.9px;color:#555;letter-spacing:0.3px">07/27 10:26</div>
<svg class="abs" style="left:734px;top:531.8px;filter:blur(0.6px)" width="16.5" height="8.0"><rect width="16.5" height="8.0" fill="#c0c0c0" fill-opacity="0.38"/><rect x="0.0" y="0.0" width="3.3" height="4.0" fill="#c0c0c0" fill-opacity="0.4"/><rect x="3.3" y="0.0" width="3.3" height="4.0" fill="#a8a8a8" fill-opacity="0.6"/><rect x="6.6" y="0.0" width="3.3" height="4.0" fill="#a8a8a8" fill-opacity="0.4"/><rect x="9.9" y="0.0" width="3.3" height="4.0" fill="#909090" fill-opacity="0.2"/><rect x="13.2" y="0.0" width="3.3" height="4.0" fill="#d0d0d0" fill-opacity="0.3"/><rect x="0.0" y="4.0" width="3.3" height="4.0" fill="#b8b8b8" fill-opacity="0.5"/><rect x="3.3" y="4.0" width="3.3" height="4.0" fill="#d0d0d0" fill-opacity="0.3"/><rect x="6.6" y="4.0" width="3.3" height="4.0" fill="#c0c0c0" fill-opacity="0.4"/><rect x="9.9" y="4.0" width="3.3" height="4.0" fill="#a8a8a8" fill-opacity="0.2"/><rect x="13.2" y="4.0" width="3.3" height="4.0" fill="#b8b8b8" fill-opacity="0.4"/></svg>
<svg class="abs" style="left:758.6px;top:531.8px;filter:blur(0.6px)" width="18.0" height="8.0"><rect width="18.0" height="8.0" fill="#c0c0c0" fill-opacity="0.38"/><rect x="0.0" y="0.0" width="3.6" height="4.0" fill="#b8b8b8" fill-opacity="0.6"/><rect x="3.6" y="0.0" width="3.6" height="4.0" fill="#c0c0c0" fill-opacity="0.6"/><rect x="7.2" y="0.0" width="3.6" height="4.0" fill="#909090" fill-opacity="0.6"/><rect x="10.8" y="0.0" width="3.6" height="4.0" fill="#c0c0c0" fill-opacity="0.2"/><rect x="14.4" y="0.0" width="3.6" height="4.0" fill="#c0c0c0" fill-opacity="0.5"/><rect x="0.0" y="4.0" width="3.6" height="4.0" fill="#c0c0c0" fill-opacity="0.6"/><rect x="3.6" y="4.0" width="3.6" height="4.0" fill="#d0d0d0" fill-opacity="0.3"/><rect x="7.2" y="4.0" width="3.6" height="4.0" fill="#d0d0d0" fill-opacity="0.6"/><rect x="10.8" y="4.0" width="3.6" height="4.0" fill="#a8a8a8" fill-opacity="0.7"/><rect x="14.4" y="4.0" width="3.6" height="4.0" fill="#c0c0c0" fill-opacity="0.7"/></svg>
<div class="abs tn" style="left:488px;top:549.5px;font-size:7.9px;color:#555;letter-spacing:0.3px">07/30 10:30</div>
<svg class="abs" style="left:734px;top:550.5px;filter:blur(0.6px)" width="16.5" height="8.0"><rect width="16.5" height="8.0" fill="#c0c0c0" fill-opacity="0.38"/><rect x="0.0" y="0.0" width="3.3" height="4.0" fill="#c0c0c0" fill-opacity="0.7"/><rect x="3.3" y="0.0" width="3.3" height="4.0" fill="#b8b8b8" fill-opacity="0.6"/><rect x="6.6" y="0.0" width="3.3" height="4.0" fill="#909090" fill-opacity="0.3"/><rect x="9.9" y="0.0" width="3.3" height="4.0" fill="#c0c0c0" fill-opacity="0.7"/><rect x="13.2" y="0.0" width="3.3" height="4.0" fill="#c0c0c0" fill-opacity="0.4"/><rect x="0.0" y="4.0" width="3.3" height="4.0" fill="#d0d0d0" fill-opacity="0.2"/><rect x="3.3" y="4.0" width="3.3" height="4.0" fill="#b8b8b8" fill-opacity="0.6"/><rect x="6.6" y="4.0" width="3.3" height="4.0" fill="#c0c0c0" fill-opacity="0.6"/><rect x="9.9" y="4.0" width="3.3" height="4.0" fill="#d0d0d0" fill-opacity="0.2"/><rect x="13.2" y="4.0" width="3.3" height="4.0" fill="#a8a8a8" fill-opacity="0.5"/></svg>
<svg class="abs" style="left:758.6px;top:550.5px;filter:blur(0.6px)" width="18.0" height="8.0"><rect width="18.0" height="8.0" fill="#c0c0c0" fill-opacity="0.38"/><rect x="0.0" y="0.0" width="3.6" height="4.0" fill="#b8b8b8" fill-opacity="0.5"/><rect x="3.6" y="0.0" width="3.6" height="4.0" fill="#909090" fill-opacity="0.2"/><rect x="7.2" y="0.0" width="3.6" height="4.0" fill="#a8a8a8" fill-opacity="0.3"/><rect x="10.8" y="0.0" width="3.6" height="4.0" fill="#909090" fill-opacity="0.5"/><rect x="14.4" y="0.0" width="3.6" height="4.0" fill="#a8a8a8" fill-opacity="0.3"/><rect x="0.0" y="4.0" width="3.6" height="4.0" fill="#c0c0c0" fill-opacity="0.5"/><rect x="3.6" y="4.0" width="3.6" height="4.0" fill="#b8b8b8" fill-opacity="0.5"/><rect x="7.2" y="4.0" width="3.6" height="4.0" fill="#909090" fill-opacity="0.3"/><rect x="10.8" y="4.0" width="3.6" height="4.0" fill="#909090" fill-opacity="0.2"/><rect x="14.4" y="4.0" width="3.6" height="4.0" fill="#d0d0d0" fill-opacity="0.4"/></svg>
<div class="abs t" style="left:545px;top:512.5px;font-size:8.2px;color:#2b2bb0;text-decoration:underline;transform:scaleX(1.071);transform-origin:0 0;">休日出勤申請書(2018年5月17日分)</div>
<div class="abs t" style="left:545px;top:531px;font-size:8.2px;color:#2b2bb0;text-decoration:underline;transform:scaleX(1.071);transform-origin:0 0;">休日出勤申請書(2018年7月27日分)</div>
<svg class="abs" style="left:544.8px;top:549.5px;filter:blur(0.6px)" width="163.6" height="10.0"><rect width="163.6" height="10.0" fill="#b4b4ec" fill-opacity="0.38"/><rect x="0.0" y="0.0" width="4.0" height="5.0" fill="#8484d8" fill-opacity="0.3"/><rect x="4.0" y="0.0" width="4.0" height="5.0" fill="#8484d8" fill-opacity="0.6"/><rect x="8.0" y="0.0" width="4.0" height="5.0" fill="#c4c4f0" fill-opacity="0.2"/><rect x="12.0" y="0.0" width="4.0" height="5.0" fill="#b4b4ec" fill-opacity="0.5"/><rect x="16.0" y="0.0" width="4.0" height="5.0" fill="#9c9ce4" fill-opacity="0.2"/><rect x="20.0" y="0.0" width="4.0" height="5.0" fill="#c4c4f0" fill-opacity="0.5"/><rect x="23.9" y="0.0" width="4.0" height="5.0" fill="#7070d0" fill-opacity="0.7"/><rect x="27.9" y="0.0" width="4.0" height="5.0" fill="#a8a8e8" fill-opacity="0.5"/><rect x="31.9" y="0.0" width="4.0" height="5.0" fill="#b4b4ec" fill-opacity="0.5"/><rect x="35.9" y="0.0" width="4.0" height="5.0" fill="#9c9ce4" fill-opacity="0.7"/><rect x="39.9" y="0.0" width="4.0" height="5.0" fill="#c4c4f0" fill-opacity="0.3"/><rect x="43.9" y="0.0" width="4.0" height="5.0" fill="#9c9ce4" fill-opacity="0.7"/><rect x="47.9" y="0.0" width="4.0" height="5.0" fill="#c4c4f0" fill-opacity="0.3"/><rect x="51.9" y="0.0" width="4.0" height="5.0" fill="#8484d8" fill-opacity="0.4"/><rect x="55.9" y="0.0" width="4.0" height="5.0" fill="#7070d0" fill-opacity="0.2"/><rect x="59.9" y="0.0" width="4.0" height="5.0" fill="#b4b4ec" fill-opacity="0.3"/><rect x="63.8" y="0.0" width="4.0" height="5.0" fill="#b4b4ec" fill-opacity="0.7"/><rect x="67.8" y="0.0" width="4.0" height="5.0" fill="#7070d0" fill-opacity="0.5"/><rect x="71.8" y="0.0" width="4.0" height="5.0" fill="#9c9ce4" fill-opacity="0.2"/><rect x="75.8" y="0.0" width="4.0" height="5.0" fill="#a8a8e8" fill-opacity="0.5"/><rect x="79.8" y="0.0" width="4.0" height="5.0" fill="#b4b4ec" fill-opacity="0.2"/><rect x="83.8" y="0.0" width="4.0" height="5.0" fill="#8484d8" fill-opacity="0.7"/><rect x="87.8" y="0.0" width="4.0" height="5.0" fill="#7070d0" fill-opacity="0.5"/><rect x="91.8" y="0.0" width="4.0" height="5.0" fill="#9c9ce4" fill-opacity="0.2"/><rect x="95.8" y="0.0" width="4.0" height="5.0" fill="#b4b4ec" fill-opacity="0.3"/><rect x="99.8" y="0.0" width="4.0" height="5.0" fill="#7070d0" fill-opacity="0.6"/><rect x="103.7" y="0.0" width="4.0" height="5.0" fill="#b4b4ec" fill-opacity="0.2"/><rect x="107.7" y="0.0" width="4.0" height="5.0" fill="#9c9ce4" fill-opacity="0.2"/><rect x="111.7" y="0.0" width="4.0" height="5.0" fill="#a8a8e8" fill-opacity="0.3"/><rect x="115.7" y="0.0" width="4.0" height="5.0" fill="#9c9ce4" fill-opacity="0.6"/><rect x="119.7" y="0.0" width="4.0" height="5.0" fill="#b4b4ec" fill-opacity="0.2"/><rect x="127.7" y="0.0" width="4.0" height="5.0" fill="#c4c4f0" fill-opacity="0.2"/><rect x="131.7" y="0.0" width="4.0" height="5.0" fill="#b4b4ec" fill-opacity="0.6"/><rect x="135.7" y="0.0" width="4.0" height="5.0" fill="#b4b4ec" fill-opacity="0.6"/><rect x="139.7" y="0.0" width="4.0" height="5.0" fill="#b4b4ec" fill-opacity="0.3"/><rect x="143.6" y="0.0" width="4.0" height="5.0" fill="#8484d8" fill-opacity="0.6"/><rect x="147.6" y="0.0" width="4.0" height="5.0" fill="#9c9ce4" fill-opacity="0.6"/><rect x="151.6" y="0.0" width="4.0" height="5.0" fill="#c4c4f0" fill-opacity="0.5"/><rect x="155.6" y="0.0" width="4.0" height="5.0" fill="#9c9ce4" fill-opacity="0.6"/><rect x="159.6" y="0.0" width="4.0" height="5.0" fill="#b4b4ec" fill-opacity="0.7"/><rect x="0.0" y="5.0" width="4.0" height="5.0" fill="#8484d8" fill-opacity="0.6"/><rect x="4.0" y="5.0" width="4.0" height="5.0" fill="#a8a8e8" fill-opacity="0.7"/><rect x="8.0" y="5.0" width="4.0" height="5.0" fill="#c4c4f0" fill-opacity="0.6"/><rect x="12.0" y="5.0" width="4.0" height="5.0" fill="#b4b4ec" fill-opacity="0.3"/><rect x="16.0" y="5.0" width="4.0" height="5.0" fill="#8484d8" fill-opacity="0.7"/><rect x="20.0" y="5.0" width="4.0" height="5.0" fill="#a8a8e8" fill-opacity="0.5"/><rect x="23.9" y="5.0" width="4.0" height="5.0" fill="#a8a8e8" fill-opacity="0.6"/><rect x="27.9" y="5.0" width="4.0" height="5.0" fill="#8484d8" fill-opacity="0.6"/><rect x="31.9" y="5.0" width="4.0" height="5.0" fill="#a8a8e8" fill-opacity="0.7"/><rect x="35.9" y="5.0" width="4.0" height="5.0" fill="#8484d8" fill-opacity="0.6"/><rect x="39.9" y="5.0" width="4.0" height="5.0" fill="#b4b4ec" fill-opacity="0.3"/><rect x="43.9" y="5.0" width="4.0" height="5.0" fill="#b4b4ec" fill-opacity="0.7"/><rect x="47.9" y="5.0" width="4.0" height="5.0" fill="#a8a8e8" fill-opacity="0.7"/><rect x="51.9" y="5.0" width="4.0" height="5.0" fill="#a8a8e8" fill-opacity="0.6"/><rect x="55.9" y="5.0" width="4.0" height="5.0" fill="#a8a8e8" fill-opacity="0.6"/><rect x="59.9" y="5.0" width="4.0" height="5.0" fill="#c4c4f0" fill-opacity="0.4"/><rect x="63.8" y="5.0" width="4.0" height="5.0" fill="#a8a8e8" fill-opacity="0.6"/><rect x="67.8" y="5.0" width="4.0" height="5.0" fill="#a8a8e8" fill-opacity="0.5"/><rect x="71.8" y="5.0" width="4.0" height="5.0" fill="#8484d8" fill-opacity="0.2"/><rect x="75.8" y="5.0" width="4.0" height="5.0" fill="#9c9ce4" fill-opacity="0.7"/><rect x="79.8" y="5.0" width="4.0" height="5.0" fill="#c4c4f0" fill-opacity="0.4"/><rect x="83.8" y="5.0" width="4.0" height="5.0" fill="#c4c4f0" fill-opacity="0.2"/><rect x="87.8" y="5.0" width="4.0" height="5.0" fill="#9c9ce4" fill-opacity="0.4"/><rect x="91.8" y="5.0" width="4.0" height="5.0" fill="#7070d0" fill-opacity="0.2"/><rect x="95.8" y="5.0" width="4.0" height="5.0" fill="#8484d8" fill-opacity="0.3"/><rect x="99.8" y="5.0" width="4.0" height="5.0" fill="#c4c4f0" fill-opacity="0.5"/><rect x="103.7" y="5.0" width="4.0" height="5.0" fill="#9c9ce4" fill-opacity="0.3"/><rect x="107.7" y="5.0" width="4.0" height="5.0" fill="#c4c4f0" fill-opacity="0.6"/><rect x="111.7" y="5.0" width="4.0" height="5.0" fill="#8484d8" fill-opacity="0.3"/><rect x="115.7" y="5.0" width="4.0" height="5.0" fill="#b4b4ec" fill-opacity="0.3"/><rect x="119.7" y="5.0" width="4.0" height="5.0" fill="#7070d0" fill-opacity="0.7"/><rect x="127.7" y="5.0" width="4.0" height="5.0" fill="#8484d8" fill-opacity="0.7"/><rect x="131.7" y="5.0" width="4.0" height="5.0" fill="#7070d0" fill-opacity="0.3"/><rect x="135.7" y="5.0" width="4.0" height="5.0" fill="#b4b4ec" fill-opacity="0.4"/><rect x="139.7" y="5.0" width="4.0" height="5.0" fill="#b4b4ec" fill-opacity="0.2"/><rect x="143.6" y="5.0" width="4.0" height="5.0" fill="#7070d0" fill-opacity="0.6"/><rect x="147.6" y="5.0" width="4.0" height="5.0" fill="#8484d8" fill-opacity="0.6"/><rect x="155.6" y="5.0" width="4.0" height="5.0" fill="#7070d0" fill-opacity="0.5"/><rect x="159.6" y="5.0" width="4.0" height="5.0" fill="#8484d8" fill-opacity="0.5"/></svg>
<!--/PANELS-->
<!--MENU-->
<div class="lbl" style="left:16.0px;top:136.5px">勤怠システム</div>
<svg class="abs" style="left:105.9px;top:106px" width="32" height="32" viewBox="0 0 32 32"><rect x="1.5" y="7" width="28.2" height="19.8" fill="#fff" stroke="#000" stroke-width="2.2"/><path d="M1.8 7.3 L15.6 18.5 L29.4 7.3" fill="none" stroke="#000" stroke-width="2.2"/></svg>
<div class="lbl" style="left:81.9px;top:136.5px">PCメール</div>
<svg class="abs" style="left:171.8px;top:106px" width="32" height="32" viewBox="0 0 32 32"><defs><linearGradient id="cg" x1="0" y1="0" x2="0" y2="1"><stop offset="0" stop-color="#7cc0f8"/><stop offset="1" stop-color="#3a8ae8"/></linearGradient></defs><path d="M13 10.5 L15 4 L28 6.5 L26 12Z" fill="#3d7fd8"/><path d="M16 7 L25 8.5" stroke="#bcd8f8" stroke-width="0.8"/><path d="M4.7 9.6 L8.2 12 L11.2 24.5 L26.2 24.5 L28.8 12 L8.5 12" fill="url(#cg)" stroke="#3a8ae8" stroke-width="1.3" stroke-linejoin="round"/><g fill="#e8f4ff"><rect x="10" y="14" width="17" height="1.3"/><rect x="10.6" y="17" width="15.8" height="1.3"/><rect x="11.2" y="20" width="14.6" height="1.3"/></g><g stroke="#3d8fe8" stroke-width="0.9"><line x1="13" y1="13" x2="13.5" y2="23"/><line x1="16.5" y1="13" x2="16.7" y2="23"/><line x1="20" y1="13" x2="20" y2="23"/><line x1="23.5" y1="13" x2="23.2" y2="23"/></g><rect x="10.5" y="24" width="17" height="1.4" fill="#2a70c8"/><circle cx="4.7" cy="9.6" r="2.1" fill="#fff" stroke="#3a8ae8" stroke-width="1.3"/><circle cx="11.7" cy="27.6" r="2" fill="#fff" stroke="#3a8ae8" stroke-width="1.4"/><circle cx="25.3" cy="27.6" r="2" fill="#fff" stroke="#3a8ae8" stroke-width="1.4"/></svg>
<div class="lbl" style="left:147.8px;top:136.5px">購買予約</div>
<svg class="abs" style="left:237.7px;top:106px" width="32" height="32" viewBox="0 0 32 32"><defs><linearGradient id="calb" x1="0" y1="0" x2="0" y2="1"><stop offset="0" stop-color="#5cc8f4"/><stop offset="1" stop-color="#1a9ae0"/></linearGradient></defs><rect x="2.7" y="4.5" width="26.6" height="25.8" rx="2.5" fill="#fff" stroke="#c8ccd4" stroke-width="0.8"/><path d="M2.7 13 L2.7 7 Q2.7 4.5 5.2 4.5 L26.8 4.5 Q29.3 4.5 29.3 7 L29.3 13Z" fill="url(#calb)"/><rect x="7" y="2.5" width="2.2" height="7.5" rx="1.1" fill="#888" stroke="#444" stroke-width="0.5"/><rect x="22.8" y="2.5" width="2.2" height="7.5" rx="1.1" fill="#888" stroke="#444" stroke-width="0.5"/><text x="16" y="27.2" text-anchor="middle" font-family="Liberation Sans" font-size="15.5" fill="#1a1a1a" stroke="#1a1a1a" stroke-width="0.3">15</text></svg>
<div class="lbl" style="left:213.7px;top:136.5px">スケジュール</div>
<svg class="abs" style="left:303.6px;top:106px" width="32" height="32" viewBox="0 0 32 32"><defs><linearGradient id="evg" x1="0" y1="0" x2="0" y2="1"><stop offset="0" stop-color="#f4f8fc"/><stop offset="1" stop-color="#c8daf0"/></linearGradient></defs><path d="M3.9 13.3 L16 6 L28.3 13.3Z" fill="#c09080"/><rect x="6.4" y="4.8" width="19" height="16" fill="#22a8ec"/><circle cx="16.1" cy="10.6" r="3.5" fill="none" stroke="#fff" stroke-width="1"/><circle cx="16.1" cy="10.6" r="1.3" fill="none" stroke="#fff" stroke-width="0.8"/><path d="M3.9 13.3 L16 22 L28.3 13.3 L28.3 30.6 L3.9 30.6Z" fill="url(#evg)" stroke="#b8c8dc" stroke-width="0.5"/><path d="M3.9 30.6 L16 20.5 L28.3 30.6" fill="#dce8f6" stroke="#b0c4dc" stroke-width="0.6"/></svg>
<div class="lbl" style="left:279.6px;top:136.5px">ウェブメール</div>
<svg class="abs" style="left:369.5px;top:106px" width="32" height="32" viewBox="0 0 32 32"><path d="M8 15.5 C7.5 8 12 5.5 16.5 5.5 C21 5.5 23.5 8 24.5 10.5" fill="none" stroke="#3cc83a" stroke-width="4.6"/><path d="M21 10 L29.5 7.5 L27 16Z" fill="#3cc83a"/><rect x="11.9" y="12" width="15.9" height="18.3" fill="#fafafa" stroke="#d0d4d8" stroke-width="0.6"/><rect x="16.5" y="14.5" width="9" height="3" fill="#c4d0e0"/><g stroke="#b8c4d4" stroke-width="0.8"><line x1="14" y1="21.5" x2="26" y2="21.5"/><line x1="14" y1="24" x2="26" y2="24"/><line x1="14" y1="26.5" x2="26" y2="26.5"/><line x1="14" y1="29" x2="26" y2="29"/></g><path d="M5.2 15 L12.5 15.3 L10.6 17.8 L13.3 21.5 L11 24.3 L8.6 21 L6.2 24.5Z" fill="#f8a828"/></svg>
<div class="lbl" style="left:345.5px;top:136.5px">ワークフロー</div>
<svg class="abs" style="left:435.4px;top:106px" width="32" height="32" viewBox="0 0 32 32"><rect x="4.4" y="3.5" width="23.2" height="27" rx="1.2" fill="#fff" stroke="#a4642c" stroke-width="1.8"/><path d="M9.5 3 L22.5 3 L21 8.8 L11 8.8Z" fill="#e4e4e4" stroke="#888" stroke-width="0.7"/><g stroke="#b0b0b0" stroke-width="0.6"><line x1="11.5" y1="13" x2="19.5" y2="13"/><line x1="7.5" y1="16.5" x2="24.5" y2="16.5"/><line x1="7.5" y1="19" x2="24.5" y2="19"/><line x1="7.5" y1="21.5" x2="24.5" y2="21.5"/></g><rect x="7.5" y="24" width="17" height="4" rx="0.8" fill="none" stroke="#c0c0c0" stroke-width="0.6"/></svg>
<div class="lbl" style="left:411.4px;top:136.5px">回覧・レポート</div>
<svg class="abs" style="left:501.3px;top:106px" width="32" height="32" viewBox="0 0 32 32"><rect x="2.5" y="5" width="26.1" height="22" fill="#eef2f6" stroke="#9fb2c8" stroke-width="1.2"/><rect x="5" y="7.5" width="12.5" height="17" fill="#fff" stroke="#c8d0d8" stroke-width="0.5"/><g stroke="#a0b0c0" stroke-width="0.7"><line x1="8" y1="11" x2="14" y2="11"/><line x1="7" y1="14" x2="15.5" y2="14"/><line x1="7" y1="16" x2="15.5" y2="16"/><line x1="7" y1="18" x2="15.5" y2="18"/><line x1="7" y1="20" x2="15.5" y2="20"/></g><rect x="19" y="10" width="7" height="9.5" fill="#f4c430"/><rect x="2" y="26" width="27" height="1.8" fill="#8a9cb0"/><rect x="3.5" y="27.5" width="2" height="3.1" fill="#a8b8c8"/><rect x="25.5" y="27.5" width="2" height="3.1" fill="#a8b8c8"/></svg>
<div class="lbl" style="left:477.3px;top:136.5px">インフォメーション</div>
<svg class="abs" style="left:567.2px;top:106px" width="32" height="32" viewBox="0 0 32 32"><rect x="5" y="4" width="22" height="26.9" rx="1" fill="#2a6ac8"/><rect x="6.5" y="4.6" width="19" height="25.6" fill="#7cc0f4"/><rect x="24" y="5.5" width="1.8" height="24.5" fill="#f4f8fc"/><g fill="#555"><rect x="4.2" y="6" width="3.5" height="1.4"/><rect x="4.2" y="9" width="3.5" height="1.4"/><rect x="4.2" y="12" width="3.5" height="1.4"/><rect x="4.2" y="15" width="3.5" height="1.4"/><rect x="4.2" y="18" width="3.5" height="1.4"/><rect x="4.2" y="21" width="3.5" height="1.4"/><rect x="4.2" y="24" width="3.5" height="1.4"/><rect x="4.2" y="27" width="3.5" height="1.4"/></g><circle cx="16.5" cy="12.5" r="4" fill="none" stroke="#fff" stroke-width="1"/><circle cx="16.5" cy="12.5" r="1.6" fill="none" stroke="#fff" stroke-width="0.9"/><g stroke="#3a7ac8" stroke-width="0.7"><line x1="11" y1="20.5" x2="22" y2="20.5"/><line x1="11" y1="22.5" x2="22" y2="22.5"/><line x1="11" y1="24.5" x2="22" y2="24.5"/></g></svg>
<div class="lbl" style="left:543.2px;top:136.5px">アドレス帳</div>
<svg class="abs" style="left:633.1px;top:106px" width="32" height="32" viewBox="0 0 32 32"><rect x="2.7" y="4" width="26.1" height="21" fill="#fff" stroke="#b4c4d4" stroke-width="0.8"/><rect x="2.7" y="4" width="26.1" height="2.8" fill="#a8bccf"/><circle cx="6" cy="10" r="1.1" fill="#2a80e0"/><circle cx="8.5" cy="12.2" r="1.1" fill="#20b020"/><circle cx="6" cy="14.5" r="1.1" fill="#f0a020"/><g stroke="#c4ccd8" stroke-width="0.7"><line x1="9" y1="10" x2="26" y2="10"/><line x1="11" y1="12.2" x2="26" y2="12.2"/><line x1="9" y1="14.5" x2="26" y2="14.5"/></g><circle cx="25" cy="20" r="3.3" fill="#f4b030"/><path d="M19 30 Q19 23 25 23 Q31 23 31 30Z" fill="#f0a020"/><circle cx="9" cy="21" r="3.8" fill="#3a90e8"/><path d="M2.5 31 Q2.5 24.5 9 24.5 Q15.5 24.5 15.5 31Z" fill="#3088e0"/><circle cx="19.5" cy="21" r="3.8" fill="#44c030"/><path d="M13 31 Q13 24.5 19.5 24.5 Q26 24.5 26 31Z" fill="#38b020"/></svg>
<div class="lbl" style="left:609.1px;top:136.5px">電子会議室</div>
<svg class="abs" style="left:699.0px;top:106px" width="32" height="32" viewBox="0 0 32 32"><rect x="4.2" y="4.2" width="24.7" height="26.1" rx="2" fill="#f0a838" stroke="#d08820" stroke-width="0.6"/><rect x="6.5" y="6.3" width="20" height="22" fill="#3a2a1a"/><rect x="7.3" y="7.2" width="5.6" height="21" fill="#3aa0f0"/><rect x="13.3" y="7.2" width="5.6" height="21" fill="#18b018"/><rect x="19.3" y="7.2" width="5.6" height="21" fill="#e02828"/><g fill="#fff"><rect x="8.2" y="10" width="3.8" height="6"/><rect x="14.2" y="10" width="3.8" height="6"/><rect x="20.2" y="10" width="3.8" height="6"/><circle cx="10.1" cy="24" r="1"/><circle cx="16.1" cy="24" r="1"/><circle cx="22.1" cy="24" r="1"/></g></svg>
<div class="lbl" style="left:675.0px;top:136.5px">文書管理</div>
<svg class="abs" style="left:764.9px;top:106px" width="32" height="32" viewBox="0 0 32 32"><rect x="2.9" y="4" width="26.3" height="26" fill="#fff" stroke="#a4b6cc" stroke-width="1.2"/><rect x="2.3" y="28.5" width="27.5" height="2.2" fill="#8ea2b8"/><g stroke="#e8ecf0" stroke-width="0.5"><line x1="6" y1="10" x2="27" y2="10"/><line x1="6" y1="13.5" x2="27" y2="13.5"/><line x1="6" y1="17" x2="27" y2="17"/><line x1="6" y1="20.5" x2="27" y2="20.5"/><line x1="6" y1="24" x2="27" y2="24"/></g><rect x="10" y="11" width="5.5" height="2" rx="1" fill="#20b0f0"/><rect x="10" y="14.3" width="8.5" height="2" rx="1" fill="#f0a010"/><rect x="14" y="17.8" width="7" height="2" rx="1" fill="#20b020"/><rect x="10.5" y="21" width="14.5" height="2" rx="1" fill="#f080c0"/><rect x="14" y="24.3" width="5" height="2" rx="1" fill="#a070e0"/></svg>
<div class="lbl" style="left:740.9px;top:136.5px">プロジェクト管理</div>
<svg class="abs" style="left:830.8px;top:106px" width="32" height="32" viewBox="0 0 32 32"><rect x="3.6" y="3.4" width="24" height="26.9" fill="#fff" stroke="#c8d0dc" stroke-width="0.7"/><g fill="#dde4ee"><rect x="5.5" y="7" width="2.5" height="2.5"/><rect x="5.5" y="12" width="2.5" height="2.5"/><rect x="5.5" y="17" width="2.5" height="2.5"/><rect x="5.5" y="22" width="2.5" height="2.5"/></g><path d="M5.5 8 L7.5 10 L11 5.5" fill="none" stroke="#20a020" stroke-width="1.6"/><path d="M5.5 13 L7.5 15 L11 10.5" fill="none" stroke="#20a020" stroke-width="1.6"/><line x1="11" y1="9" x2="25" y2="9" stroke="#a8b8c8" stroke-width="0.6"/><circle cx="18.2" cy="20" r="5.8" fill="none" stroke="#2a7ee0" stroke-width="3"/><path d="M20.5 23.5 L25 28.5" stroke="#2a7ee0" stroke-width="2.6"/><circle cx="18.2" cy="20" r="2.6" fill="#f4f4f4"/></svg>
<div class="lbl" style="left:806.8px;top:136.5px">アンケート</div>
<svg class="abs" style="left:40.0px;top:150px" width="32" height="32" viewBox="0 0 32 32"><rect x="3.1" y="4.5" width="25.8" height="24.9" rx="2.5" fill="#f0a838" stroke="#c88020" stroke-width="0.6"/><rect x="5" y="6.5" width="22" height="21" fill="#fff"/><g stroke="#c8d4e0" stroke-width="0.8"><line x1="7" y1="11.5" x2="20" y2="11.5"/><line x1="7" y1="14" x2="20" y2="14"/><line x1="7" y1="16.5" x2="20" y2="16.5"/><line x1="7" y1="19" x2="20" y2="19"/><line x1="7" y1="21.5" x2="20" y2="21.5"/><line x1="7" y1="24" x2="20" y2="24"/></g><g fill="#555"><rect x="7.5" y="3" width="1.8" height="5" rx="0.9"/><rect x="12" y="3" width="1.8" height="5" rx="0.9"/><rect x="16.5" y="3" width="1.8" height="5" rx="0.9"/><rect x="21" y="3" width="1.8" height="5" rx="0.9"/><rect x="25" y="3" width="1.8" height="5" rx="0.9"/></g><path d="M23 10 L26.5 10 L26.5 25 L24.75 28 L23 25Z" fill="#f0a020"/><rect x="23" y="9" width="3.5" height="2.5" fill="#222"/></svg>
<div class="lbl" style="left:16.0px;top:179.5px">メモパッド</div>
<svg class="abs" style="left:105.9px;top:150px" width="32" height="32" viewBox="0 0 32 32"><rect x="4.3" y="2.2" width="23.2" height="14" rx="2.5" fill="#f2e2c0" stroke="#d4b888" stroke-width="0.7"/><rect x="6" y="4" width="19.8" height="10.5" rx="1" fill="#f8ecd4"/><rect x="11.5" y="8" width="8" height="2.4" rx="1" fill="#6a5030"/><path d="M4.8 16 L27 16 L27 21 L4.8 21Z" fill="#f8c040"/><rect x="17" y="13.2" width="9" height="3.5" fill="#fff"/><circle cx="25.5" cy="15" r="0.9" fill="#3070e0"/><rect x="3.5" y="20.5" width="24.5" height="9.2" rx="1.5" fill="#f2e2c0" stroke="#d4b888" stroke-width="0.7"/><rect x="5.5" y="22" width="20.5" height="6.5" fill="#f8ecd4"/><rect x="11.5" y="23.5" width="8" height="2.4" rx="1" fill="#6a5030"/></svg>
<div class="lbl" style="left:81.9px;top:179.5px">キャビネット</div>
<svg class="abs" style="left:171.8px;top:150px" width="32" height="32" viewBox="0 0 32 32"><path d="M5 12.5 L15.7 6 L26.8 12.5" fill="none" stroke="#666" stroke-width="0.8"/><circle cx="15.7" cy="6" r="1" fill="none" stroke="#666" stroke-width="0.7"/><rect x="3.3" y="12.2" width="25.2" height="10.4" fill="#f2f2f2" stroke="#6a6a6a" stroke-width="1"/><text x="15.9" y="20.6" text-anchor="middle" font-family="Liberation Sans" font-weight="bold" font-size="7.6" fill="#6a6a6a">OPEN</text></svg>
<div class="lbl" style="left:147.8px;top:179.5px">新店関連スケジュ…</div>
<svg class="abs" style="left:237.7px;top:150px" width="32" height="32" viewBox="0 0 32 32"><circle cx="15.9" cy="15" r="14.8" fill="#fff" stroke="#e01830" stroke-width="1"/><text x="15.6" y="22.5" text-anchor="middle" font-size="19.5" fill="#e81830">決</text></svg>
<div class="lbl" style="left:213.7px;top:179.5px">決裁台帳</div>
<svg class="abs" style="left:303.6px;top:150px" width="32" height="32" viewBox="0 0 32 32"><defs><radialGradient id="osg" cx="0.5" cy="0.5" r="0.7"><stop offset="0" stop-color="#3e6a22"/><stop offset="1" stop-color="#132a08"/></radialGradient></defs><rect x="1.1" y="0.5" width="30" height="30.1" fill="url(#osg)"/><path d="M12.5 22 C14 14 16 5 21 3.5 C25 3 26 6 25 10 C24 14 22 17 20 20" fill="none" stroke="#e8ecd8" stroke-width="1.2"/><path d="M8 24.5 L13 21.5 L17 23 L15.5 28 Q11 30 9 28Z" fill="#fff"/><path d="M8 19 L16 18.5 M12 21 L21 20" stroke="#c8d4b8" stroke-width="0.7"/></svg>
<div class="lbl" style="left:279.6px;top:179.5px"><b class="bl" style="width:10px"></b>オンラインショ…</div>
<svg class="abs" style="left:369.5px;top:150px" width="32" height="32" viewBox="0 0 32 32"><defs><linearGradient id="tri" x1="0" y1="0" x2="0.6" y2="1"><stop offset="0" stop-color="#f04a10"/><stop offset="1" stop-color="#ffd000"/></linearGradient></defs><path d="M15.3 4.5 L26.5 23.5 L4 23.5Z" fill="url(#tri)" stroke="#f0f0f0" stroke-width="1.8" stroke-linejoin="round"/><path d="M14.3 9 L16.3 9 L15.8 18.5 L14.8 18.5Z" fill="#fff"/><circle cx="15.3" cy="21" r="1.2" fill="#fff"/><path d="M20 28.5 L19.5 21 L19.8 12 Q20 9.5 21.8 9.5 Q23.6 9.5 23.6 12 L23.6 17 L27.5 18 Q30 18.8 29.7 22 L29 28.5Z" fill="#ececec" stroke="#b4b4b4" stroke-width="0.6"/><rect x="20" y="27" width="9" height="2.3" fill="#c8c8c8"/></svg>
<div class="lbl" style="left:345.5px;top:179.5px">安否確認</div>
<svg class="abs" style="left:435.4px;top:150px" width="32" height="32" viewBox="0 0 32 32"><rect x="1.3" y="1.1" width="29.1" height="29.5" fill="#3a6aa4"/><rect x="7.6" y="10.5" width="16.5" height="14" fill="#fff"/><rect x="7.6" y="12" width="16.5" height="1" fill="#3a6aa4"/><rect x="11" y="16.8" width="10" height="4" rx="2" fill="#c0c8d8"/><rect x="14.5" y="18" width="3" height="1.6" fill="#fff"/></svg>
<div class="lbl" style="left:411.4px;top:179.5px"><span style='letter-spacing:0.55px'>what's news</span></div>
<svg class="abs" style="left:501.3px;top:150px" width="32" height="32" viewBox="0 0 32 32"><rect x="1.3" y="1.1" width="29.1" height="29.5" fill="#3a6aa4"/><rect x="7.6" y="10.5" width="16.5" height="14" fill="#fff"/><rect x="7.6" y="12" width="16.5" height="1" fill="#3a6aa4"/><rect x="11" y="16.8" width="10" height="4" rx="2" fill="#c0c8d8"/><rect x="14.5" y="18" width="3" height="1.6" fill="#fff"/></svg>
<div class="lbl" style="left:477.3px;top:179.5px">レジ操作マニュアル</div>
<svg class="abs" style="left:567.2px;top:150px" width="32" height="32" viewBox="0 0 32 32"><rect x="1.3" y="1.1" width="29.1" height="29.5" fill="#3a6aa4"/><rect x="7.6" y="10.5" width="16.5" height="14" fill="#fff"/><rect x="7.6" y="12" width="16.5" height="1" fill="#3a6aa4"/><rect x="11" y="16.8" width="10" height="4" rx="2" fill="#c0c8d8"/><rect x="14.5" y="18" width="3" height="1.6" fill="#fff"/></svg>
<div class="lbl" style="left:543.2px;top:179.5px"><b class="bl" style="width:34px"></b>検索サ…</div>
<svg class="abs" style="left:633.1px;top:150px" width="32" height="32" viewBox="0 0 32 32"><path d="M6 9 L15 4.5 L24 9" fill="none" stroke="#a8b0bc" stroke-width="0.7"/><circle cx="15" cy="4.5" r="0.9" fill="#8898a8"/><rect x="4.5" y="9" width="21" height="18" fill="#fff" stroke="#d4d8de" stroke-width="0.6"/><rect x="4.5" y="8.5" width="21" height="1.4" fill="#a0aab8"/><rect x="7.5" y="16" width="2.5" height="5" fill="#f4a010"/><rect x="12" y="12" width="2.5" height="8" fill="#20a8f0"/><rect x="20" y="14.5" width="2.5" height="6" fill="#20a8f0"/><rect x="16" y="17" width="2.5" height="3" fill="#f4b020"/><path d="M8 30 L8 22.5 Q8 20 11 20 L29.5 20 Q31.5 20 31.5 22.5 L31.5 29 Q31.5 30.5 29 30.5 L9 30.5Z" fill="#eeeeee" stroke="#b8b8b8" stroke-width="0.6"/><circle cx="13" cy="24" r="4.2" fill="#2a80d8" stroke="#d8d8d8" stroke-width="0.8"/><circle cx="13" cy="24" r="1.8" fill="#7cc0f8"/><rect x="20" y="22" width="7.5" height="4.5" fill="#c8c8c8"/></svg>
<div class="lbl" style="left:609.1px;top:179.5px">設備予約</div>
<svg class="abs" style="left:699.0px;top:150px" width="32" height="32" viewBox="0 0 32 32"><circle cx="15.6" cy="15.8" r="14" fill="#fff" stroke="#111" stroke-width="1.1"/><g fill="none" stroke="#000" stroke-width="2.3" stroke-linecap="square"><path d="M15.7 4.8 L15.7 13.2"/><path d="M9.3 8 L9.3 13.2 L22.2 13.2"/><path d="M22.2 7.5 L22.2 14"/><path d="M10 17.8 L21.5 17.8 L21.5 25.8 L10 25.8Z"/><path d="M15.8 17.8 L15.8 25.8 M10 21.8 L21.5 21.8" stroke-width="1.8"/></g></svg>
<div class="lbl" style="left:675.0px;top:179.5px"><b class="bl" style="width:14px"></b>オンラインシ…</div>
<svg class="abs" style="left:764.9px;top:150px" width="32" height="32" viewBox="0 0 32 32"><defs><linearGradient id="dbg" x1="0" y1="0" x2="1" y2="0"><stop offset="0" stop-color="#a8a8a8"/><stop offset="0.3" stop-color="#f4f4f4"/><stop offset="1" stop-color="#9a9a9a"/></linearGradient><radialGradient id="glb" cx="0.4" cy="0.35" r="0.7"><stop offset="0" stop-color="#5cc8e8"/><stop offset="1" stop-color="#0a5c90"/></radialGradient></defs><path d="M3.5 6.5 L3.5 26 Q15 31 26.5 26 L26.5 6.5Z" fill="url(#dbg)"/><ellipse cx="15" cy="6.5" rx="11.5" ry="4" fill="#d8d8d8" stroke="#b0b0b0" stroke-width="0.4"/><path d="M3.5 13.5 Q15 18 26.5 13.5 M3.5 19.5 Q15 24 26.5 19.5" fill="none" stroke="#8a8a8a" stroke-width="0.6"/><circle cx="21.5" cy="21.5" r="8.3" fill="url(#glb)"/></svg>
<div class="lbl" style="left:740.9px;top:179.5px">（社内）WEBデー…</div>
<div class="abs" style="left:43px;top:110.5px;width:27px;font-size:12.5px;line-height:12.5px;font-weight:bold;color:#5a5a5a;text-align:center;white-space:nowrap">勤怠</div>
<div class="abs" style="left:43px;top:123.5px;width:27px;font-size:12.5px;line-height:12.5px;font-weight:bold;color:#111;text-align:center;white-space:nowrap">管理</div>
<!--/MENU-->
</body></html>
